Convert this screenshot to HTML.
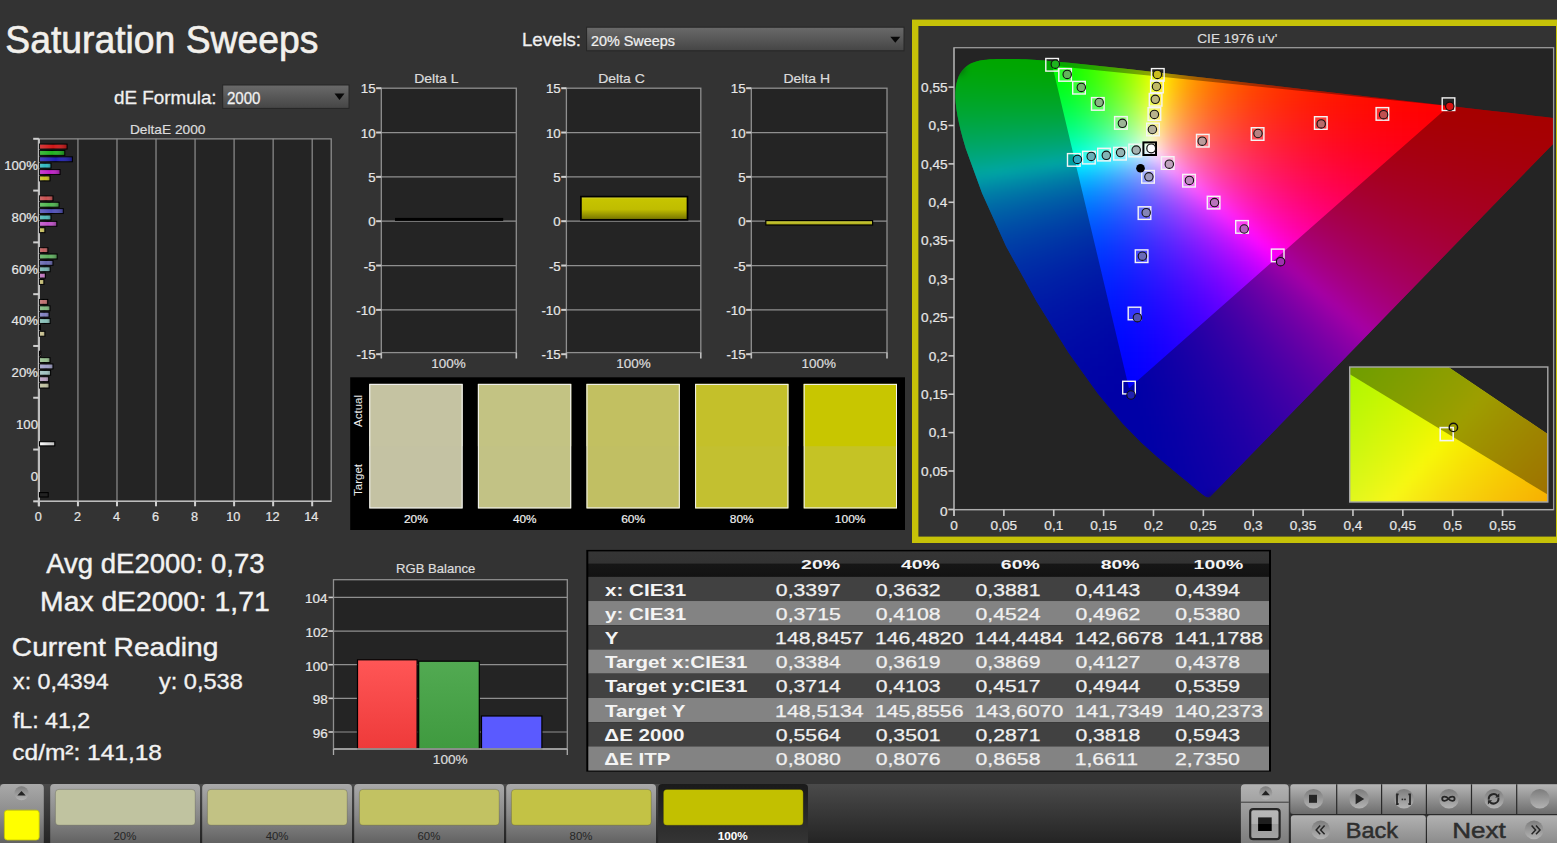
<!DOCTYPE html>
<html><head><meta charset="utf-8"><title>Saturation Sweeps</title>
<style>html,body{margin:0;padding:0;background:#333333;width:1557px;height:843px;overflow:hidden}
svg{display:block;font-family:"Liberation Sans",sans-serif}</style></head>
<body><svg width="1557" height="843" viewBox="0 0 1557 843"><defs><linearGradient id="dd" x1="0" y1="0" x2="0" y2="1"><stop offset="0" stop-color="#6a6a6a"/><stop offset="1" stop-color="#454545"/></linearGradient><linearGradient id="barsh" x1="0" y1="0" x2="1" y2="0"><stop offset="0" stop-color="#fff" stop-opacity="0.16"/><stop offset="0.5" stop-color="#fff" stop-opacity="0"/><stop offset="1" stop-color="#000" stop-opacity="0.28"/></linearGradient><linearGradient id="wbar" x1="0" y1="0" x2="1" y2="0"><stop offset="0" stop-color="#ffffff"/><stop offset="1" stop-color="#bdbdbd"/></linearGradient><linearGradient id="hbar" x1="0" y1="0" x2="0" y2="1"><stop offset="0" stop-color="#d2d244"/><stop offset="1" stop-color="#a8a610"/></linearGradient><linearGradient id="ybar" x1="0" y1="0" x2="0" y2="1"><stop offset="0" stop-color="#d6d440"/><stop offset="0.12" stop-color="#c6c400"/><stop offset="0.55" stop-color="#c0bd00"/><stop offset="1" stop-color="#727000"/></linearGradient><clipPath id="plotclip"><rect x="954" y="47.7" width="599.6" height="461.9"/></clipPath><clipPath id="locclip"><path d="M1210.2 496.76L1210.01 496.71L1209.73 496.86L1209.33 496.86L1209.1 497.16L1208.59 497.22L1207.84 497.17L1206.99 497.1L1205.57 496.44L1202.98 494.74L1199.45 492.03L1194.48 488.04L1188.14 482.61L1180.05 475.89L1169.56 467.21L1156.76 456.51L1141.18 442.52L1122.54 423.48L1097.73 393.47L1068.37 352.43L1036.59 301.46L1006 246.27L982.08 193.32L965.84 148.66L963.04 139.32L960.76 130.71L958.92 122.79L957.45 115.47L956.37 108.81L955.71 102.83L955.41 97.39L955.42 92.36L955.75 87.75L956.42 83.61L957.39 79.88L958.62 76.48L960.14 73.44L961.95 70.77L964 68.44L966.24 66.4L968.67 64.7L971.32 63.32L974.13 62.2L977.06 61.26L980.1 60.52L983.28 60.02L986.56 59.66L989.9 59.36L993.32 59.13L996.83 59L1000.39 58.93L1003.94 58.89L1007.46 58.88L1011 58.91L1014.55 58.97L1018.16 59.07L1021.8 59.19L1025.48 59.35L1029.21 59.54L1033.02 59.76L1036.91 60.01L1040.86 60.28L1044.89 60.59L1049.01 60.92L1066.41 62.49L1085.55 64.42L1106.71 66.7L1130.14 69.31L1156.05 72.24L1184.55 75.51L1215.66 79.1L1249.17 82.95L1284.61 87.02L1321.12 91.23L1356.46 95.3L1390.84 99.25L1421.91 102.81L1449.4 105.97L1472.86 108.67L1492.53 110.93L1509.04 112.82L1523.39 114.48L1535.51 115.88L1545.43 117.02L1552.91 117.88L1563.29 119.07L1573.89 120.3L1575.75 120.51Z"/></clipPath><filter id="blur8" x="900" y="0" width="700" height="560" filterUnits="userSpaceOnUse" color-interpolation-filters="sRGB"><feGaussianBlur stdDeviation="4"/></filter><clipPath id="insclip"><rect x="1349.7" y="367" width="198.1" height="135"/></clipPath><clipPath id="inloc"><path d="M1299.7 266.53L1597.8 467.98L1597.8 600L1299.7 600Z"/></clipPath><filter id="blur6" x="1300" y="330" width="300" height="220" filterUnits="userSpaceOnUse" color-interpolation-filters="sRGB"><feGaussianBlur stdDeviation="3"/></filter><linearGradient id="rb" x1="0" y1="0" x2="0" y2="1"><stop offset="0" stop-color="#ff5656"/><stop offset="1" stop-color="#ee3a3a"/></linearGradient><linearGradient id="gb" x1="0" y1="0" x2="0" y2="1"><stop offset="0" stop-color="#52aa52"/><stop offset="1" stop-color="#3f9a3f"/></linearGradient><linearGradient id="th" x1="0" y1="0" x2="0" y2="1"><stop offset="0" stop-color="#353535"/><stop offset="0.46" stop-color="#333"/><stop offset="0.5" stop-color="#161616"/><stop offset="1" stop-color="#121212"/></linearGradient><linearGradient id="tb" x1="0" y1="0" x2="0" y2="1"><stop offset="0" stop-color="#4a4a4a"/><stop offset="1" stop-color="#242424"/></linearGradient><linearGradient id="btn" x1="0" y1="0" x2="0" y2="1"><stop offset="0" stop-color="#a9a9a9"/><stop offset="0.5" stop-color="#8a8a8a"/><stop offset="1" stop-color="#5e5e5e"/></linearGradient><linearGradient id="btnact" x1="0" y1="0" x2="0" y2="1"><stop offset="0" stop-color="#1a1a1a"/><stop offset="1" stop-color="#363636"/></linearGradient><linearGradient id="ico" x1="0" y1="0" x2="0" y2="1"><stop offset="0" stop-color="#7c7c7c"/><stop offset="1" stop-color="#b4b4b4"/></linearGradient><linearGradient id="btn3" x1="0" y1="0" x2="0" y2="1"><stop offset="0" stop-color="#b6b6b6"/><stop offset="1" stop-color="#6c6c6c"/></linearGradient><linearGradient id="btn2" x1="0" y1="0" x2="0" y2="1"><stop offset="0" stop-color="#b2b2b2"/><stop offset="1" stop-color="#7a7a7a"/></linearGradient><linearGradient id="stopfill" x1="0" y1="0" x2="0" y2="1"><stop offset="0" stop-color="#b8b8b8"/><stop offset="0.5" stop-color="#b0b0b0"/><stop offset="0.5" stop-color="#9c9c9c"/><stop offset="1" stop-color="#a2a2a2"/></linearGradient><linearGradient id="stopsq" x1="0" y1="0" x2="0" y2="1"><stop offset="0" stop-color="#1e1e1e"/><stop offset="0.5" stop-color="#1e1e1e"/><stop offset="0.5" stop-color="#000"/><stop offset="1" stop-color="#000"/></linearGradient></defs><text x="5.32" y="52.6" font-size="38.5" fill="#f2f0ec" stroke="#f2f0ec" stroke-width="0.62" textLength="312.96" lengthAdjust="spacingAndGlyphs">Saturation Sweeps</text>
<text x="113.95" y="103.7" font-size="18.5" fill="#f0f0f0" stroke="#f0f0f0" stroke-width="0.3" textLength="102.68" lengthAdjust="spacingAndGlyphs">dE Formula:</text>
<rect x="222.7" y="85" width="126.3" height="23.4" fill="url(#dd)" stroke="#262626" stroke-width="1"/>
<text x="226.95" y="103.7" font-size="16" fill="#f0f0f0" stroke="#f0f0f0" stroke-width="0.26" textLength="33.58" lengthAdjust="spacingAndGlyphs">2000</text>
<path d="M334.5 93.5h10l-5 6.5z" fill="#080808"/>
<text x="521.91" y="45.7" font-size="19" fill="#f0f0f0" stroke="#f0f0f0" stroke-width="0.3" textLength="59.15" lengthAdjust="spacingAndGlyphs">Levels:</text>
<rect x="586.6" y="27.2" width="317.4" height="23.6" fill="url(#dd)" stroke="#262626" stroke-width="1"/>
<text x="590.98" y="45.7" font-size="15.2" fill="#f0f0f0" stroke="#f0f0f0" stroke-width="0.24" textLength="83.95" lengthAdjust="spacingAndGlyphs">20% Sweeps</text>
<path d="M890.3 36.7h10l-5 6z" fill="#080808"/>
<text x="129.9" y="133.8" font-size="12.8" fill="#dcdcdc" stroke="#dcdcdc" stroke-width="0.2" textLength="75.57" lengthAdjust="spacingAndGlyphs">DeltaE 2000</text>
<rect x="38.9" y="138.8" width="292.3" height="362.5" fill="#242424"/>
<line x1="77.94" y1="138.8" x2="77.94" y2="501.3" stroke="#8f8f8f" stroke-width="1.2"/>
<line x1="116.98" y1="138.8" x2="116.98" y2="501.3" stroke="#8f8f8f" stroke-width="1.2"/>
<line x1="156.02" y1="138.8" x2="156.02" y2="501.3" stroke="#8f8f8f" stroke-width="1.2"/>
<line x1="195.06" y1="138.8" x2="195.06" y2="501.3" stroke="#8f8f8f" stroke-width="1.2"/>
<line x1="234.1" y1="138.8" x2="234.1" y2="501.3" stroke="#8f8f8f" stroke-width="1.2"/>
<line x1="273.14" y1="138.8" x2="273.14" y2="501.3" stroke="#8f8f8f" stroke-width="1.2"/>
<line x1="312.18" y1="138.8" x2="312.18" y2="501.3" stroke="#8f8f8f" stroke-width="1.2"/>
<path d="M38.9 501.3H331.2V138.8H38.9" fill="none" stroke="#8f8f8f" stroke-width="1.3"/>
<line x1="38.9" y1="138.8" x2="38.9" y2="506.3" stroke="#bdbdbd" stroke-width="2.2"/>
<line x1="38.4" y1="501.3" x2="331.2" y2="501.3" stroke="#bdbdbd" stroke-width="1.6"/>
<line x1="33.2" y1="138.8" x2="38.9" y2="138.8" stroke="#d0d0d0" stroke-width="2"/>
<line x1="33.2" y1="190.59" x2="38.9" y2="190.59" stroke="#d0d0d0" stroke-width="2"/>
<line x1="33.2" y1="242.38" x2="38.9" y2="242.38" stroke="#d0d0d0" stroke-width="2"/>
<line x1="33.2" y1="294.17" x2="38.9" y2="294.17" stroke="#d0d0d0" stroke-width="2"/>
<line x1="33.2" y1="345.96" x2="38.9" y2="345.96" stroke="#d0d0d0" stroke-width="2"/>
<line x1="33.2" y1="397.75" x2="38.9" y2="397.75" stroke="#d0d0d0" stroke-width="2"/>
<line x1="33.2" y1="449.54" x2="38.9" y2="449.54" stroke="#d0d0d0" stroke-width="2"/>
<line x1="33.2" y1="501.33" x2="38.9" y2="501.33" stroke="#d0d0d0" stroke-width="2"/>
<line x1="38.9" y1="501.3" x2="38.9" y2="506.3" stroke="#d0d0d0" stroke-width="2"/>
<text x="34.84" y="521" font-size="12.7" fill="#e6e6e6" stroke="#e6e6e6" stroke-width="0.2">0</text>
<line x1="77.94" y1="501.3" x2="77.94" y2="506.3" stroke="#d0d0d0" stroke-width="2"/>
<text x="73.92" y="521" font-size="12.7" fill="#e6e6e6" stroke="#e6e6e6" stroke-width="0.2">2</text>
<line x1="116.98" y1="501.3" x2="116.98" y2="506.3" stroke="#d0d0d0" stroke-width="2"/>
<text x="112.99" y="521" font-size="12.7" fill="#e6e6e6" stroke="#e6e6e6" stroke-width="0.2">4</text>
<line x1="156.02" y1="501.3" x2="156.02" y2="506.3" stroke="#d0d0d0" stroke-width="2"/>
<text x="151.93" y="521" font-size="12.7" fill="#e6e6e6" stroke="#e6e6e6" stroke-width="0.2">6</text>
<line x1="195.06" y1="501.3" x2="195.06" y2="506.3" stroke="#d0d0d0" stroke-width="2"/>
<text x="191.04" y="521" font-size="12.7" fill="#e6e6e6" stroke="#e6e6e6" stroke-width="0.2">8</text>
<line x1="234.1" y1="501.3" x2="234.1" y2="506.3" stroke="#d0d0d0" stroke-width="2"/>
<text x="226.3" y="521" font-size="12.7" fill="#e6e6e6" stroke="#e6e6e6" stroke-width="0.2">10</text>
<line x1="273.14" y1="501.3" x2="273.14" y2="506.3" stroke="#d0d0d0" stroke-width="2"/>
<text x="265.43" y="521" font-size="12.7" fill="#e6e6e6" stroke="#e6e6e6" stroke-width="0.2">12</text>
<line x1="312.18" y1="501.3" x2="312.18" y2="506.3" stroke="#d0d0d0" stroke-width="2"/>
<text x="304.31" y="521" font-size="12.7" fill="#e6e6e6" stroke="#e6e6e6" stroke-width="0.2">14</text>
<text x="4.17" y="170.1" font-size="13.2" fill="#e6e6e6" stroke="#e6e6e6" stroke-width="0.21">100%</text>
<text x="11.56" y="221.89" font-size="13.2" fill="#e6e6e6" stroke="#e6e6e6" stroke-width="0.21">80%</text>
<text x="11.56" y="273.68" font-size="13.2" fill="#e6e6e6" stroke="#e6e6e6" stroke-width="0.21">60%</text>
<text x="11.56" y="325.47" font-size="13.2" fill="#e6e6e6" stroke="#e6e6e6" stroke-width="0.21">40%</text>
<text x="11.56" y="377.26" font-size="13.2" fill="#e6e6e6" stroke="#e6e6e6" stroke-width="0.21">20%</text>
<text x="15.98" y="429.05" font-size="13.2" fill="#e6e6e6" stroke="#e6e6e6" stroke-width="0.21">100</text>
<text x="30.64" y="480.84" font-size="13.2" fill="#e6e6e6" stroke="#e6e6e6" stroke-width="0.21">0</text>
<rect x="39.5" y="144.1" width="27.6" height="4.9" fill="#d01818" stroke="#000" stroke-width="1.05"/>
<rect x="39.5" y="144.1" width="27.6" height="4.9" fill="url(#barsh)"/>
<rect x="39.5" y="150.47" width="25.3" height="4.9" fill="#20b020" stroke="#000" stroke-width="1.05"/>
<rect x="39.5" y="150.47" width="25.3" height="4.9" fill="url(#barsh)"/>
<rect x="39.5" y="156.84" width="32.9" height="4.9" fill="#2020b0" stroke="#000" stroke-width="1.05"/>
<rect x="39.5" y="156.84" width="32.9" height="4.9" fill="url(#barsh)"/>
<rect x="39.5" y="163.21" width="11.5" height="4.9" fill="#30b8c0" stroke="#000" stroke-width="1.05"/>
<rect x="39.5" y="163.21" width="11.5" height="4.9" fill="url(#barsh)"/>
<rect x="39.5" y="169.58" width="20.6" height="4.9" fill="#c020c8" stroke="#000" stroke-width="1.05"/>
<rect x="39.5" y="169.58" width="20.6" height="4.9" fill="url(#barsh)"/>
<rect x="39.5" y="175.95" width="10.5" height="4.9" fill="#c8c020" stroke="#000" stroke-width="1.05"/>
<rect x="39.5" y="175.95" width="10.5" height="4.9" fill="url(#barsh)"/>
<rect x="39.5" y="195.89" width="13.5" height="4.9" fill="#c85050" stroke="#000" stroke-width="1.05"/>
<rect x="39.5" y="195.89" width="13.5" height="4.9" fill="url(#barsh)"/>
<rect x="39.5" y="202.26" width="19.6" height="4.9" fill="#50b850" stroke="#000" stroke-width="1.05"/>
<rect x="39.5" y="202.26" width="19.6" height="4.9" fill="url(#barsh)"/>
<rect x="39.5" y="208.63" width="23.8" height="4.9" fill="#5050b8" stroke="#000" stroke-width="1.05"/>
<rect x="39.5" y="208.63" width="23.8" height="4.9" fill="url(#barsh)"/>
<rect x="39.5" y="215" width="11.5" height="4.9" fill="#50b8b8" stroke="#000" stroke-width="1.05"/>
<rect x="39.5" y="215" width="11.5" height="4.9" fill="url(#barsh)"/>
<rect x="39.5" y="221.37" width="17.3" height="4.9" fill="#c050c8" stroke="#000" stroke-width="1.05"/>
<rect x="39.5" y="221.37" width="17.3" height="4.9" fill="url(#barsh)"/>
<rect x="39.5" y="227.74" width="5.4" height="4.9" fill="#c8c060" stroke="#000" stroke-width="1.05"/>
<rect x="39.5" y="227.74" width="5.4" height="4.9" fill="url(#barsh)"/>
<rect x="39.5" y="247.68" width="8.4" height="4.9" fill="#c06060" stroke="#000" stroke-width="1.05"/>
<rect x="39.5" y="247.68" width="8.4" height="4.9" fill="url(#barsh)"/>
<rect x="39.5" y="254.05" width="17.7" height="4.9" fill="#60b060" stroke="#000" stroke-width="1.05"/>
<rect x="39.5" y="254.05" width="17.7" height="4.9" fill="url(#barsh)"/>
<rect x="39.5" y="260.42" width="13.5" height="4.9" fill="#6868b0" stroke="#000" stroke-width="1.05"/>
<rect x="39.5" y="260.42" width="13.5" height="4.9" fill="url(#barsh)"/>
<rect x="39.5" y="266.79" width="10.7" height="4.9" fill="#78b4b0" stroke="#000" stroke-width="1.05"/>
<rect x="39.5" y="266.79" width="10.7" height="4.9" fill="url(#barsh)"/>
<rect x="39.5" y="273.16" width="5.9" height="4.9" fill="#c078c0" stroke="#000" stroke-width="1.05"/>
<rect x="39.5" y="273.16" width="5.9" height="4.9" fill="url(#barsh)"/>
<rect x="39.5" y="279.53" width="4.4" height="4.9" fill="#c8c078" stroke="#000" stroke-width="1.05"/>
<rect x="39.5" y="279.53" width="4.4" height="4.9" fill="url(#barsh)"/>
<rect x="39.5" y="299.47" width="8.2" height="4.9" fill="#c07070" stroke="#000" stroke-width="1.05"/>
<rect x="39.5" y="299.47" width="8.2" height="4.9" fill="url(#barsh)"/>
<rect x="39.5" y="305.84" width="10.5" height="4.9" fill="#80b880" stroke="#000" stroke-width="1.05"/>
<rect x="39.5" y="305.84" width="10.5" height="4.9" fill="url(#barsh)"/>
<rect x="39.5" y="312.21" width="9.6" height="4.9" fill="#8080c0" stroke="#000" stroke-width="1.05"/>
<rect x="39.5" y="312.21" width="9.6" height="4.9" fill="url(#barsh)"/>
<rect x="39.5" y="318.58" width="10.7" height="4.9" fill="#88c0b8" stroke="#000" stroke-width="1.05"/>
<rect x="39.5" y="318.58" width="10.7" height="4.9" fill="url(#barsh)"/>
<rect x="39.5" y="324.95" width="1" height="4.9" fill="#b080c0" stroke="#000" stroke-width="1.05"/>
<rect x="39.5" y="331.32" width="5.4" height="4.9" fill="#c8c090" stroke="#000" stroke-width="1.05"/>
<rect x="39.5" y="331.32" width="5.4" height="4.9" fill="url(#barsh)"/>
<rect x="39.5" y="351.26" width="1.2" height="4.9" fill="#b89090" stroke="#000" stroke-width="1.05"/>
<rect x="39.5" y="357.63" width="10.5" height="4.9" fill="#98c090" stroke="#000" stroke-width="1.05"/>
<rect x="39.5" y="357.63" width="10.5" height="4.9" fill="url(#barsh)"/>
<rect x="39.5" y="364" width="13.5" height="4.9" fill="#a0a0c8" stroke="#000" stroke-width="1.05"/>
<rect x="39.5" y="364" width="13.5" height="4.9" fill="url(#barsh)"/>
<rect x="39.5" y="370.37" width="11.1" height="4.9" fill="#a0c0c0" stroke="#000" stroke-width="1.05"/>
<rect x="39.5" y="370.37" width="11.1" height="4.9" fill="url(#barsh)"/>
<rect x="39.5" y="376.74" width="9.2" height="4.9" fill="#b8a0c0" stroke="#000" stroke-width="1.05"/>
<rect x="39.5" y="376.74" width="9.2" height="4.9" fill="url(#barsh)"/>
<rect x="39.5" y="383.11" width="9.6" height="4.9" fill="#c0c0a0" stroke="#000" stroke-width="1.05"/>
<rect x="39.5" y="383.11" width="9.6" height="4.9" fill="url(#barsh)"/>
<rect x="39.5" y="441.7" width="15.3" height="4.2" fill="url(#wbar)" stroke="#000" stroke-width="1.1"/>
<rect x="39.5" y="492.6" width="8.7" height="4.4" fill="#222" stroke="#000" stroke-width="1.1"/>
<text x="414.25" y="83.1" font-size="13.3" fill="#dcdcdc" stroke="#dcdcdc" stroke-width="0.21" textLength="44.25" lengthAdjust="spacingAndGlyphs">Delta L</text>
<rect x="381.3" y="88.2" width="135" height="264.4" fill="#242424"/>
<line x1="381.3" y1="309.87" x2="516.3" y2="309.87" stroke="#8f8f8f" stroke-width="1.2"/>
<line x1="381.3" y1="265.53" x2="516.3" y2="265.53" stroke="#8f8f8f" stroke-width="1.2"/>
<line x1="381.3" y1="221.2" x2="516.3" y2="221.2" stroke="#8f8f8f" stroke-width="1.2"/>
<line x1="381.3" y1="176.87" x2="516.3" y2="176.87" stroke="#8f8f8f" stroke-width="1.2"/>
<line x1="381.3" y1="132.53" x2="516.3" y2="132.53" stroke="#8f8f8f" stroke-width="1.2"/>
<rect x="381.3" y="88.2" width="135" height="264.4" fill="none" stroke="#8f8f8f" stroke-width="1.3"/>
<line x1="376.1" y1="354.2" x2="381.3" y2="354.2" stroke="#d0d0d0" stroke-width="2"/>
<text x="356.41" y="359.2" font-size="13.3" fill="#e6e6e6" stroke="#e6e6e6" stroke-width="0.21">-15</text>
<line x1="376.1" y1="309.87" x2="381.3" y2="309.87" stroke="#d0d0d0" stroke-width="2"/>
<text x="356.35" y="314.87" font-size="13.3" fill="#e6e6e6" stroke="#e6e6e6" stroke-width="0.21">-10</text>
<line x1="376.1" y1="265.53" x2="381.3" y2="265.53" stroke="#d0d0d0" stroke-width="2"/>
<text x="363.8" y="270.53" font-size="13.3" fill="#e6e6e6" stroke="#e6e6e6" stroke-width="0.21">-5</text>
<line x1="376.1" y1="221.2" x2="381.3" y2="221.2" stroke="#d0d0d0" stroke-width="2"/>
<text x="368.18" y="226.2" font-size="13.3" fill="#e6e6e6" stroke="#e6e6e6" stroke-width="0.21">0</text>
<line x1="376.1" y1="176.87" x2="381.3" y2="176.87" stroke="#d0d0d0" stroke-width="2"/>
<text x="368.25" y="181.87" font-size="13.3" fill="#e6e6e6" stroke="#e6e6e6" stroke-width="0.21">5</text>
<line x1="376.1" y1="132.53" x2="381.3" y2="132.53" stroke="#d0d0d0" stroke-width="2"/>
<text x="360.8" y="137.53" font-size="13.3" fill="#e6e6e6" stroke="#e6e6e6" stroke-width="0.21">10</text>
<line x1="376.1" y1="88.2" x2="381.3" y2="88.2" stroke="#d0d0d0" stroke-width="2"/>
<text x="360.87" y="93.2" font-size="13.3" fill="#e6e6e6" stroke="#e6e6e6" stroke-width="0.21">15</text>
<line x1="381.3" y1="352.6" x2="381.3" y2="358.5" stroke="#bdbdbd" stroke-width="1.6"/>
<line x1="516.3" y1="352.6" x2="516.3" y2="358.5" stroke="#bdbdbd" stroke-width="1.6"/>
<text x="431.39" y="367.5" font-size="13" fill="#dcdcdc" stroke="#dcdcdc" stroke-width="0.21" textLength="34.45" lengthAdjust="spacingAndGlyphs">100%</text>
<rect x="395" y="217.9" width="108.2" height="3" fill="#000"/>
<text x="598.23" y="83.1" font-size="13.3" fill="#dcdcdc" stroke="#dcdcdc" stroke-width="0.21" textLength="46.57" lengthAdjust="spacingAndGlyphs">Delta C</text>
<rect x="566.4" y="88.2" width="134.4" height="264.4" fill="#242424"/>
<line x1="566.4" y1="309.87" x2="700.8" y2="309.87" stroke="#8f8f8f" stroke-width="1.2"/>
<line x1="566.4" y1="265.53" x2="700.8" y2="265.53" stroke="#8f8f8f" stroke-width="1.2"/>
<line x1="566.4" y1="221.2" x2="700.8" y2="221.2" stroke="#8f8f8f" stroke-width="1.2"/>
<line x1="566.4" y1="176.87" x2="700.8" y2="176.87" stroke="#8f8f8f" stroke-width="1.2"/>
<line x1="566.4" y1="132.53" x2="700.8" y2="132.53" stroke="#8f8f8f" stroke-width="1.2"/>
<rect x="566.4" y="88.2" width="134.4" height="264.4" fill="none" stroke="#8f8f8f" stroke-width="1.3"/>
<line x1="561.2" y1="354.2" x2="566.4" y2="354.2" stroke="#d0d0d0" stroke-width="2"/>
<text x="541.51" y="359.2" font-size="13.3" fill="#e6e6e6" stroke="#e6e6e6" stroke-width="0.21">-15</text>
<line x1="561.2" y1="309.87" x2="566.4" y2="309.87" stroke="#d0d0d0" stroke-width="2"/>
<text x="541.45" y="314.87" font-size="13.3" fill="#e6e6e6" stroke="#e6e6e6" stroke-width="0.21">-10</text>
<line x1="561.2" y1="265.53" x2="566.4" y2="265.53" stroke="#d0d0d0" stroke-width="2"/>
<text x="548.89" y="270.53" font-size="13.3" fill="#e6e6e6" stroke="#e6e6e6" stroke-width="0.21">-5</text>
<line x1="561.2" y1="221.2" x2="566.4" y2="221.2" stroke="#d0d0d0" stroke-width="2"/>
<text x="553.28" y="226.2" font-size="13.3" fill="#e6e6e6" stroke="#e6e6e6" stroke-width="0.21">0</text>
<line x1="561.2" y1="176.87" x2="566.4" y2="176.87" stroke="#d0d0d0" stroke-width="2"/>
<text x="553.35" y="181.87" font-size="13.3" fill="#e6e6e6" stroke="#e6e6e6" stroke-width="0.21">5</text>
<line x1="561.2" y1="132.53" x2="566.4" y2="132.53" stroke="#d0d0d0" stroke-width="2"/>
<text x="545.9" y="137.53" font-size="13.3" fill="#e6e6e6" stroke="#e6e6e6" stroke-width="0.21">10</text>
<line x1="561.2" y1="88.2" x2="566.4" y2="88.2" stroke="#d0d0d0" stroke-width="2"/>
<text x="545.97" y="93.2" font-size="13.3" fill="#e6e6e6" stroke="#e6e6e6" stroke-width="0.21">15</text>
<line x1="566.4" y1="352.6" x2="566.4" y2="358.5" stroke="#bdbdbd" stroke-width="1.6"/>
<line x1="700.8" y1="352.6" x2="700.8" y2="358.5" stroke="#bdbdbd" stroke-width="1.6"/>
<text x="616.29" y="367.5" font-size="13" fill="#dcdcdc" stroke="#dcdcdc" stroke-width="0.21" textLength="34.45" lengthAdjust="spacingAndGlyphs">100%</text>
<rect x="580.9" y="196.6" width="106.6" height="23.2" fill="url(#ybar)" stroke="#000" stroke-width="1.7"/>
<text x="783.45" y="83.1" font-size="13.3" fill="#dcdcdc" stroke="#dcdcdc" stroke-width="0.21" textLength="46.57" lengthAdjust="spacingAndGlyphs">Delta H</text>
<rect x="751.3" y="88.2" width="135.7" height="264.4" fill="#242424"/>
<line x1="751.3" y1="309.87" x2="887" y2="309.87" stroke="#8f8f8f" stroke-width="1.2"/>
<line x1="751.3" y1="265.53" x2="887" y2="265.53" stroke="#8f8f8f" stroke-width="1.2"/>
<line x1="751.3" y1="221.2" x2="887" y2="221.2" stroke="#8f8f8f" stroke-width="1.2"/>
<line x1="751.3" y1="176.87" x2="887" y2="176.87" stroke="#8f8f8f" stroke-width="1.2"/>
<line x1="751.3" y1="132.53" x2="887" y2="132.53" stroke="#8f8f8f" stroke-width="1.2"/>
<rect x="751.3" y="88.2" width="135.7" height="264.4" fill="none" stroke="#8f8f8f" stroke-width="1.3"/>
<line x1="746.1" y1="354.2" x2="751.3" y2="354.2" stroke="#d0d0d0" stroke-width="2"/>
<text x="726.41" y="359.2" font-size="13.3" fill="#e6e6e6" stroke="#e6e6e6" stroke-width="0.21">-15</text>
<line x1="746.1" y1="309.87" x2="751.3" y2="309.87" stroke="#d0d0d0" stroke-width="2"/>
<text x="726.35" y="314.87" font-size="13.3" fill="#e6e6e6" stroke="#e6e6e6" stroke-width="0.21">-10</text>
<line x1="746.1" y1="265.53" x2="751.3" y2="265.53" stroke="#d0d0d0" stroke-width="2"/>
<text x="733.79" y="270.53" font-size="13.3" fill="#e6e6e6" stroke="#e6e6e6" stroke-width="0.21">-5</text>
<line x1="746.1" y1="221.2" x2="751.3" y2="221.2" stroke="#d0d0d0" stroke-width="2"/>
<text x="738.18" y="226.2" font-size="13.3" fill="#e6e6e6" stroke="#e6e6e6" stroke-width="0.21">0</text>
<line x1="746.1" y1="176.87" x2="751.3" y2="176.87" stroke="#d0d0d0" stroke-width="2"/>
<text x="738.25" y="181.87" font-size="13.3" fill="#e6e6e6" stroke="#e6e6e6" stroke-width="0.21">5</text>
<line x1="746.1" y1="132.53" x2="751.3" y2="132.53" stroke="#d0d0d0" stroke-width="2"/>
<text x="730.8" y="137.53" font-size="13.3" fill="#e6e6e6" stroke="#e6e6e6" stroke-width="0.21">10</text>
<line x1="746.1" y1="88.2" x2="751.3" y2="88.2" stroke="#d0d0d0" stroke-width="2"/>
<text x="730.87" y="93.2" font-size="13.3" fill="#e6e6e6" stroke="#e6e6e6" stroke-width="0.21">15</text>
<line x1="751.3" y1="352.6" x2="751.3" y2="358.5" stroke="#bdbdbd" stroke-width="1.6"/>
<line x1="887" y1="352.6" x2="887" y2="358.5" stroke="#bdbdbd" stroke-width="1.6"/>
<text x="801.59" y="367.5" font-size="13" fill="#dcdcdc" stroke="#dcdcdc" stroke-width="0.21" textLength="34.45" lengthAdjust="spacingAndGlyphs">100%</text>
<rect x="765.8" y="220.6" width="106.8" height="4.4" fill="url(#hbar)" stroke="#000" stroke-width="1.2"/>
<rect x="350.2" y="377.3" width="554.8" height="152.7" fill="#000"/>
<rect x="369.3" y="383.9" width="93.3" height="124.5" fill="#c4c2a3"/>
<rect x="369.3" y="383.9" width="93.3" height="62.3" fill="#c5c3a2"/>
<rect x="369.8" y="384.4" width="92.3" height="123.5" fill="none" stroke="#f4f4f4" stroke-width="1"/>
<text x="403.95" y="523.3" font-size="11.2" fill="#f0f0f0" stroke="#f0f0f0" stroke-width="0.18" textLength="23.93" lengthAdjust="spacingAndGlyphs">20%</text>
<rect x="477.9" y="383.9" width="93.3" height="124.5" fill="#c2c285"/>
<rect x="477.9" y="383.9" width="93.3" height="62.3" fill="#c3c383"/>
<rect x="478.4" y="384.4" width="92.3" height="123.5" fill="none" stroke="#f4f4f4" stroke-width="1"/>
<text x="512.91" y="523.3" font-size="11.2" fill="#f0f0f0" stroke="#f0f0f0" stroke-width="0.18" textLength="23.57" lengthAdjust="spacingAndGlyphs">40%</text>
<rect x="586.5" y="383.9" width="93.3" height="124.5" fill="#c1bf63"/>
<rect x="586.5" y="383.9" width="93.3" height="62.3" fill="#c2c061"/>
<rect x="587" y="384.4" width="92.3" height="123.5" fill="none" stroke="#f4f4f4" stroke-width="1"/>
<text x="621.15" y="523.3" font-size="11.2" fill="#f0f0f0" stroke="#f0f0f0" stroke-width="0.18" textLength="23.93" lengthAdjust="spacingAndGlyphs">60%</text>
<rect x="695.1" y="383.9" width="93.3" height="124.5" fill="#c3c030"/>
<rect x="695.1" y="383.9" width="93.3" height="62.3" fill="#c4c02a"/>
<rect x="695.6" y="384.4" width="92.3" height="123.5" fill="none" stroke="#f4f4f4" stroke-width="1"/>
<text x="729.87" y="523.3" font-size="11.2" fill="#f0f0f0" stroke="#f0f0f0" stroke-width="0.18" textLength="23.81" lengthAdjust="spacingAndGlyphs">80%</text>
<rect x="803.7" y="383.9" width="93.3" height="124.5" fill="#c5c325"/>
<rect x="803.7" y="383.9" width="93.3" height="62.3" fill="#c8c600"/>
<rect x="804.2" y="384.4" width="92.3" height="123.5" fill="none" stroke="#f4f4f4" stroke-width="1"/>
<text x="834.85" y="523.3" font-size="11.2" fill="#f0f0f0" stroke="#f0f0f0" stroke-width="0.18" textLength="30.59" lengthAdjust="spacingAndGlyphs">100%</text>
<text x="0" y="0" font-size="11.5" fill="#f0f0f0" transform="translate(362.4 411) rotate(-90)" text-anchor="middle">Actual</text>
<text x="0" y="0" font-size="11.5" fill="#f0f0f0" transform="translate(362.4 480) rotate(-90)" text-anchor="middle">Target</text>
<rect x="915.2" y="22.8" width="644" height="517" fill="none" stroke="#c6c208" stroke-width="6.4"/>
<text x="1197.32" y="42.8" font-size="12.8" fill="#dcdcdc" stroke="#dcdcdc" stroke-width="0.2" textLength="79.96" lengthAdjust="spacingAndGlyphs">CIE 1976 u'v'</text>
<rect x="954" y="47.7" width="599.6" height="461.9" fill="#242424"/>
<g clip-path="url(#plotclip)"><g clip-path="url(#locclip)"><g filter="url(#blur8)"><path fill="#00ff00" d="M962 32h8v8h-8zM978 32h72v8h-72zM962 40h88v8h-88zM946 48h8v8h-8zM962 48h88v8h-88zM986 56h64v8h-64z"/><path fill="#07ff00" d="M1050 32h8v8h-8z"/><path fill="#11ff00" d="M1058 32h8v8h-8z"/><path fill="#1cff00" d="M1066 32h8v8h-8z"/><path fill="#28ff00" d="M1074 32h8v8h-8z"/><path fill="#05ff00" d="M1050 40h8v8h-8z"/><path fill="#0fff00" d="M1058 40h8v8h-8z"/><path fill="#1aff00" d="M1066 40h8v8h-8z"/><path fill="#26ff00" d="M1074 40h8v8h-8z"/><path fill="#34ff00" d="M1082 40h8v8h-8z"/><path fill="#44ff00" d="M1090 40h8v8h-8z"/><path fill="#54ff00" d="M1098 40h8v8h-8z"/><path fill="#66ff00" d="M1106 40h8v8h-8z"/><path fill="#7aff00" d="M1114 40h8v8h-8z"/><path fill="#8fff00" d="M1122 40h8v8h-8zM1122 48h8v8h-8zM1122 56h8v8h-8z"/><path fill="#a5ff00" d="M1130 40h8v8h-8z"/><path fill="#beff00" d="M1138 40h8v8h-8z"/><path fill="#d8ff00" d="M1146 40h8v8h-8z"/><path fill="#04ff00" d="M1050 48h8v8h-8z"/><path fill="#0dff00" d="M1058 48h8v8h-8z"/><path fill="#18ff00" d="M1066 48h8v8h-8z"/><path fill="#24ff00" d="M1074 48h8v8h-8z"/><path fill="#32ff00" d="M1082 48h8v8h-8z"/><path fill="#42ff00" d="M1090 48h8v8h-8z"/><path fill="#53ff00" d="M1098 48h8v8h-8z"/><path fill="#65ff00" d="M1106 48h8v8h-8z"/><path fill="#79ff00" d="M1114 48h8v8h-8zM1114 56h8v8h-8z"/><path fill="#a6ff00" d="M1130 48h8v8h-8zM1130 56h8v8h-8z"/><path fill="#bfff00" d="M1138 48h8v8h-8z"/><path fill="#d9ff00" d="M1146 48h8v8h-8z"/><path fill="#f6ff00" d="M1154 48h8v8h-8z"/><path fill="#ffeb00" d="M1162 48h8v8h-8z"/><path fill="#ffd200" d="M1170 48h8v8h-8z"/><path fill="#ffbd00" d="M1178 48h8v8h-8z"/><path fill="#ffaa00" d="M1186 48h8v8h-8z"/><path fill="#ff9a00" d="M1194 48h8v8h-8z"/><path fill="#ff8c00" d="M1202 48h8v8h-8z"/><path fill="#ff7f00" d="M1210 48h8v8h-8z"/><path fill="#00ff02" d="M954 56h16v8h-16zM1042 64h8v8h-8z"/><path fill="#00ff01" d="M970 56h16v8h-16z"/><path fill="#02ff00" d="M1050 56h8v8h-8z"/><path fill="#0bff00" d="M1058 56h8v8h-8z"/><path fill="#16ff00" d="M1066 56h8v8h-8z"/><path fill="#22ff00" d="M1074 56h8v8h-8z"/><path fill="#30ff00" d="M1082 56h8v8h-8z"/><path fill="#40ff00" d="M1090 56h8v8h-8z"/><path fill="#51ff00" d="M1098 56h8v8h-8z"/><path fill="#64ff00" d="M1106 56h8v8h-8z"/><path fill="#c0ff00" d="M1138 56h8v8h-8z"/><path fill="#dbff00" d="M1146 56h8v8h-8z"/><path fill="#f8ff00" d="M1154 56h8v8h-8z"/><path fill="#ffe800" d="M1162 56h8v8h-8z"/><path fill="#ffcf00" d="M1170 56h8v8h-8z"/><path fill="#ffba00" d="M1178 56h8v8h-8z"/><path fill="#ffa700" d="M1186 56h8v8h-8z"/><path fill="#ff9700" d="M1194 56h8v8h-8z"/><path fill="#ff8800" d="M1202 56h8v8h-8z"/><path fill="#ff7c00" d="M1210 56h8v8h-8z"/><path fill="#ff7100" d="M1218 56h8v8h-8z"/><path fill="#ff6700" d="M1226 56h8v8h-8zM1218 80h8v8h-8z"/><path fill="#ff5e00" d="M1234 56h8v8h-8zM1226 80h8v8h-8z"/><path fill="#ff5500" d="M1242 56h8v8h-8zM1234 80h8v8h-8z"/><path fill="#ff4e00" d="M1250 56h8v8h-8z"/><path fill="#ff4700" d="M1258 56h8v8h-8z"/><path fill="#ff4100" d="M1266 56h8v8h-8z"/><path fill="#ff3c00" d="M1274 56h8v8h-8zM1266 72h8v8h-8z"/><path fill="#ff3700" d="M1282 56h8v8h-8zM1274 72h8v8h-8z"/><path fill="#00ff0c" d="M930 64h8v8h-8zM1034 72h8v8h-8z"/><path fill="#00ff0a" d="M946 64h8v8h-8zM1050 72h8v8h-8z"/><path fill="#00ff09" d="M962 64h8v8h-8z"/><path fill="#00ff08" d="M970 64h16v8h-16z"/><path fill="#00ff07" d="M986 64h8v8h-8z"/><path fill="#00ff06" d="M994 64h16v8h-16z"/><path fill="#00ff05" d="M1010 64h8v8h-8z"/><path fill="#00ff04" d="M1018 64h8v8h-8z"/><path fill="#00ff03" d="M1026 64h16v8h-16z"/><path fill="#01ff01" d="M1050 64h8v8h-8z"/><path fill="#09ff01" d="M1058 64h8v8h-8z"/><path fill="#13ff00" d="M1066 64h8v8h-8z"/><path fill="#20ff00" d="M1074 64h8v8h-8z"/><path fill="#2eff00" d="M1082 64h8v8h-8z"/><path fill="#3eff00" d="M1090 64h8v8h-8z"/><path fill="#50ff00" d="M1098 64h8v8h-8z"/><path fill="#63ff00" d="M1106 64h8v8h-8z"/><path fill="#78ff00" d="M1114 64h8v8h-8z"/><path fill="#8eff00" d="M1122 64h8v8h-8z"/><path fill="#a7ff00" d="M1130 64h8v8h-8z"/><path fill="#c1ff00" d="M1138 64h8v8h-8z"/><path fill="#ddff00" d="M1146 64h8v8h-8z"/><path fill="#fbff00" d="M1154 64h8v8h-8z"/><path fill="#ffe500" d="M1162 64h8v8h-8z"/><path fill="#ffcc00" d="M1170 64h8v8h-8z"/><path fill="#ffb600" d="M1178 64h8v8h-8z"/><path fill="#ffa400" d="M1186 64h8v8h-8z"/><path fill="#ff9400" d="M1194 64h8v8h-8z"/><path fill="#ff8500" d="M1202 64h8v8h-8z"/><path fill="#ff7900" d="M1210 64h8v8h-8z"/><path fill="#ff6e00" d="M1218 64h8v8h-8z"/><path fill="#ff6400" d="M1226 64h8v8h-8z"/><path fill="#ff5b00" d="M1234 64h8v8h-8z"/><path fill="#ff5300" d="M1242 64h8v8h-8z"/><path fill="#ff4b00" d="M1250 64h8v8h-8z"/><path fill="#ff4500" d="M1258 64h8v8h-8z"/><path fill="#ff3f00" d="M1266 64h8v8h-8zM1258 80h8v8h-8z"/><path fill="#ff3900" d="M1274 64h8v8h-8z"/><path fill="#ff3400" d="M1282 64h8v8h-8zM1274 80h8v8h-8z"/><path fill="#ff3000" d="M1290 64h8v8h-8zM1282 80h8v8h-8z"/><path fill="#ff2c00" d="M1298 64h8v8h-8z"/><path fill="#ff2800" d="M1306 64h8v8h-8z"/><path fill="#ff2400" d="M1314 64h8v8h-8z"/><path fill="#ff2100" d="M1322 64h8v8h-8zM1306 88h8v8h-8z"/><path fill="#ff1e00" d="M1330 64h8v8h-8zM1314 88h8v8h-8z"/><path fill="#ff1b00" d="M1338 64h8v8h-8zM1322 88h8v8h-8z"/><path fill="#ff1800" d="M1346 64h8v8h-8zM1330 88h8v8h-8z"/><path fill="#ff1600" d="M1354 64h8v8h-8z"/><path fill="#00ff15" d="M930 72h8v8h-8z"/><path fill="#00ff14" d="M938 72h16v8h-16z"/><path fill="#00ff13" d="M954 72h8v8h-8z"/><path fill="#00ff12" d="M962 72h16v8h-16z"/><path fill="#00ff11" d="M978 72h8v8h-8z"/><path fill="#00ff10" d="M986 72h16v8h-16z"/><path fill="#00ff0f" d="M1002 72h8v8h-8z"/><path fill="#00ff0e" d="M1010 72h16v8h-16z"/><path fill="#00ff0d" d="M1026 72h8v8h-8z"/><path fill="#00ff0b" d="M1042 72h8v8h-8z"/><path fill="#07ff0a" d="M1058 72h8v8h-8z"/><path fill="#11ff09" d="M1066 72h8v8h-8z"/><path fill="#1eff08" d="M1074 72h8v8h-8z"/><path fill="#2cff07" d="M1082 72h8v8h-8z"/><path fill="#3dff06" d="M1090 72h8v8h-8z"/><path fill="#4eff05" d="M1098 72h8v8h-8z"/><path fill="#62ff04" d="M1106 72h8v8h-8z"/><path fill="#77ff03" d="M1114 72h8v8h-8z"/><path fill="#8eff03" d="M1122 72h8v8h-8z"/><path fill="#a7ff02" d="M1130 72h8v8h-8z"/><path fill="#c2ff01" d="M1138 72h8v8h-8z"/><path fill="#dfff00" d="M1146 72h8v8h-8z"/><path fill="#feff00" d="M1154 72h8v8h-8z"/><path fill="#ffe200" d="M1162 72h8v8h-8z"/><path fill="#ffc900" d="M1170 72h8v8h-8z"/><path fill="#ffb300" d="M1178 72h8v8h-8z"/><path fill="#ffa000" d="M1186 72h8v8h-8z"/><path fill="#ff9000" d="M1194 72h8v8h-8z"/><path fill="#ff8200" d="M1202 72h8v8h-8z"/><path fill="#ff7600" d="M1210 72h8v8h-8z"/><path fill="#ff6a00" d="M1218 72h8v8h-8z"/><path fill="#ff6100" d="M1226 72h8v8h-8z"/><path fill="#ff5800" d="M1234 72h8v8h-8z"/><path fill="#ff5000" d="M1242 72h8v8h-8z"/><path fill="#ff4900" d="M1250 72h8v8h-8z"/><path fill="#ff4200" d="M1258 72h8v8h-8z"/><path fill="#ff3200" d="M1282 72h8v8h-8z"/><path fill="#ff2d00" d="M1290 72h8v8h-8z"/><path fill="#ff2900" d="M1298 72h8v8h-8z"/><path fill="#ff2600" d="M1306 72h8v8h-8z"/><path fill="#ff2200" d="M1314 72h8v8h-8z"/><path fill="#ff1f00" d="M1322 72h8v8h-8z"/><path fill="#ff1c00" d="M1330 72h8v8h-8z"/><path fill="#ff1900" d="M1338 72h8v8h-8z"/><path fill="#ff1700" d="M1346 72h8v8h-8zM1338 80h8v8h-8z"/><path fill="#ff1400" d="M1354 72h8v8h-8z"/><path fill="#ff1200" d="M1362 72h8v8h-8zM1354 80h8v8h-8z"/><path fill="#ff1000" d="M1370 72h8v8h-8zM1362 80h8v8h-8z"/><path fill="#ff0e00" d="M1378 72h8v8h-8zM1370 80h8v8h-8z"/><path fill="#ff0c00" d="M1386 72h8v8h-8z"/><path fill="#ff0b00" d="M1394 72h8v8h-8zM1386 80h8v8h-8zM1378 88h8v8h-8zM1370 96h8v8h-8z"/><path fill="#ff0900" d="M1402 72h8v8h-8zM1394 80h8v8h-8zM1386 88h8v8h-8z"/><path fill="#ff0800" d="M1410 72h8v8h-8zM1402 80h8v8h-8zM1394 88h8v8h-8zM1386 96h8v8h-8z"/><path fill="#ff0600" d="M1418 72h8v8h-8z"/><path fill="#ff0500" d="M1426 72h8v8h-8zM1418 80h8v8h-8zM1410 88h8v8h-8zM1402 96h8v8h-8z"/><path fill="#00ff1e" d="M946 80h16v8h-16z"/><path fill="#00ff1d" d="M962 80h16v8h-16z"/><path fill="#00ff1c" d="M978 80h16v8h-16z"/><path fill="#00ff1b" d="M994 80h8v8h-8z"/><path fill="#00ff1a" d="M1002 80h16v8h-16z"/><path fill="#00ff19" d="M1018 80h16v8h-16z"/><path fill="#00ff18" d="M1034 80h8v8h-8z"/><path fill="#00ff17" d="M1042 80h16v8h-16z"/><path fill="#05ff16" d="M1058 80h8v8h-8z"/><path fill="#0fff15" d="M1066 80h8v8h-8z"/><path fill="#1cff14" d="M1074 80h8v8h-8z"/><path fill="#2aff13" d="M1082 80h8v8h-8z"/><path fill="#3bff13" d="M1090 80h8v8h-8z"/><path fill="#4dff12" d="M1098 80h8v8h-8z"/><path fill="#61ff11" d="M1106 80h8v8h-8z"/><path fill="#76ff10" d="M1114 80h8v8h-8z"/><path fill="#8eff0f" d="M1122 80h8v8h-8z"/><path fill="#a7ff0e" d="M1130 80h8v8h-8z"/><path fill="#c3ff0d" d="M1138 80h8v8h-8z"/><path fill="#e1ff0c" d="M1146 80h8v8h-8z"/><path fill="#fffd0b" d="M1154 80h8v8h-8z"/><path fill="#ffdf08" d="M1162 80h8v8h-8z"/><path fill="#ffc507" d="M1170 80h8v8h-8z"/><path fill="#ffb005" d="M1178 80h8v8h-8z"/><path fill="#ff9d04" d="M1186 80h8v8h-8z"/><path fill="#ff8d03" d="M1194 80h8v8h-8z"/><path fill="#ff7f02" d="M1202 80h8v8h-8z"/><path fill="#ff7201" d="M1210 80h8v8h-8z"/><path fill="#ff4d00" d="M1242 80h8v8h-8z"/><path fill="#ff4600" d="M1250 80h8v8h-8z"/><path fill="#ff3a00" d="M1266 80h8v8h-8z"/><path fill="#ff2b00" d="M1290 80h8v8h-8z"/><path fill="#ff2700" d="M1298 80h8v8h-8z"/><path fill="#ff2300" d="M1306 80h8v8h-8z"/><path fill="#ff2000" d="M1314 80h8v8h-8z"/><path fill="#ff1d00" d="M1322 80h8v8h-8z"/><path fill="#ff1a00" d="M1330 80h8v8h-8z"/><path fill="#ff1500" d="M1346 80h8v8h-8zM1338 88h8v8h-8z"/><path fill="#ff0d00" d="M1378 80h8v8h-8zM1370 88h8v8h-8z"/><path fill="#ff0700" d="M1410 80h8v8h-8zM1402 88h8v8h-8zM1394 96h8v8h-8z"/><path fill="#ff0400" d="M1426 80h8v8h-8zM1418 88h8v8h-8zM1410 96h8v8h-8z"/><path fill="#ff0300" d="M1434 80h8v8h-8zM1426 88h8v8h-8zM1418 96h8v8h-8z"/><path fill="#ff0200" d="M1442 80h8v8h-8zM1434 88h8v8h-8zM1426 96h8v8h-8z"/><path fill="#ff0100" d="M1450 80h16v8h-16zM1442 88h16v8h-16zM1434 96h16v8h-16z"/><path fill="#ff0000" d="M1466 80h40v8h-40zM1458 88h112v8h-112zM1450 96h128v8h-128zM1442 104h136v8h-136zM1522 112h56v8h-56z"/><path fill="#00ff2b" d="M930 88h16v8h-16z"/><path fill="#00ff2a" d="M946 88h24v8h-24z"/><path fill="#00ff29" d="M970 88h16v8h-16z"/><path fill="#00ff28" d="M986 88h24v8h-24z"/><path fill="#00ff27" d="M1010 88h16v8h-16z"/><path fill="#00ff26" d="M1026 88h16v8h-16z"/><path fill="#00ff25" d="M1042 88h16v8h-16z"/><path fill="#03ff24" d="M1058 88h8v8h-8z"/><path fill="#0dff24" d="M1066 88h8v8h-8z"/><path fill="#19ff23" d="M1074 88h8v8h-8z"/><path fill="#28ff22" d="M1082 88h8v8h-8z"/><path fill="#39ff22" d="M1090 88h8v8h-8z"/><path fill="#4bff21" d="M1098 88h8v8h-8z"/><path fill="#5fff20" d="M1106 88h8v8h-8z"/><path fill="#75ff20" d="M1114 88h8v8h-8z"/><path fill="#8eff1f" d="M1122 88h8v8h-8z"/><path fill="#a8ff1e" d="M1130 88h8v8h-8z"/><path fill="#c4ff1d" d="M1138 88h8v8h-8z"/><path fill="#e3ff1d" d="M1146 88h8v8h-8z"/><path fill="#fffa1b" d="M1154 88h8v8h-8z"/><path fill="#ffdb17" d="M1162 88h8v8h-8z"/><path fill="#ffc214" d="M1170 88h8v8h-8z"/><path fill="#ffac11" d="M1178 88h8v8h-8z"/><path fill="#ff990e" d="M1186 88h8v8h-8z"/><path fill="#ff890c" d="M1194 88h8v8h-8z"/><path fill="#ff7b0a" d="M1202 88h8v8h-8z"/><path fill="#ff6f09" d="M1210 88h8v8h-8z"/><path fill="#ff6407" d="M1218 88h8v8h-8z"/><path fill="#ff5a06" d="M1226 88h8v8h-8z"/><path fill="#ff5205" d="M1234 88h8v8h-8z"/><path fill="#ff4a04" d="M1242 88h8v8h-8z"/><path fill="#ff4303" d="M1250 88h8v8h-8z"/><path fill="#ff3d03" d="M1258 88h8v8h-8z"/><path fill="#ff3702" d="M1266 88h8v8h-8z"/><path fill="#ff3201" d="M1274 88h8v8h-8z"/><path fill="#ff2d01" d="M1282 88h8v8h-8z"/><path fill="#ff2901" d="M1290 88h8v8h-8z"/><path fill="#ff2500" d="M1298 88h8v8h-8z"/><path fill="#ff1300" d="M1346 88h8v8h-8z"/><path fill="#ff1100" d="M1354 88h8v8h-8z"/><path fill="#ff0f00" d="M1362 88h8v8h-8z"/><path fill="#00ff38" d="M930 96h16v8h-16z"/><path fill="#00ff37" d="M946 96h40v8h-40z"/><path fill="#00ff36" d="M986 96h40v8h-40z"/><path fill="#00ff35" d="M1026 96h32v8h-32z"/><path fill="#01ff34" d="M1058 96h8v8h-8z"/><path fill="#0aff34" d="M1066 96h8v8h-8z"/><path fill="#17ff34" d="M1074 96h8v8h-8z"/><path fill="#26ff34" d="M1082 96h8v8h-8z"/><path fill="#36ff33" d="M1090 96h8v8h-8z"/><path fill="#49ff33" d="M1098 96h8v8h-8z"/><path fill="#5eff33" d="M1106 96h8v8h-8z"/><path fill="#75ff32" d="M1114 96h8v8h-8z"/><path fill="#8dff32" d="M1122 96h8v8h-8z"/><path fill="#a8ff32" d="M1130 96h8v8h-8z"/><path fill="#c6ff31" d="M1138 96h8v8h-8z"/><path fill="#e5ff31" d="M1146 96h8v8h-8z"/><path fill="#fff62f" d="M1154 96h8v8h-8z"/><path fill="#ffd828" d="M1162 96h8v8h-8z"/><path fill="#ffbe23" d="M1170 96h8v8h-8z"/><path fill="#ffa81f" d="M1178 96h8v8h-8z"/><path fill="#ff961b" d="M1186 96h8v8h-8z"/><path fill="#ff8618" d="M1194 96h8v8h-8z"/><path fill="#ff7815" d="M1202 96h8v8h-8z"/><path fill="#ff6c13" d="M1210 96h8v8h-8z"/><path fill="#ff6111" d="M1218 96h8v8h-8z"/><path fill="#ff570f" d="M1226 96h8v8h-8z"/><path fill="#ff4f0d" d="M1234 96h8v8h-8z"/><path fill="#ff470c" d="M1242 96h8v8h-8z"/><path fill="#ff400a" d="M1250 96h8v8h-8z"/><path fill="#ff3a09" d="M1258 96h8v8h-8z"/><path fill="#ff3508" d="M1266 96h8v8h-8z"/><path fill="#ff2f07" d="M1274 96h8v8h-8z"/><path fill="#ff2b06" d="M1282 96h8v8h-8z"/><path fill="#ff2705" d="M1290 96h8v8h-8z"/><path fill="#ff2305" d="M1298 96h8v8h-8z"/><path fill="#ff1f04" d="M1306 96h8v8h-8z"/><path fill="#ff1c03" d="M1314 96h8v8h-8z"/><path fill="#ff1903" d="M1322 96h8v8h-8z"/><path fill="#ff1602" d="M1330 96h8v8h-8z"/><path fill="#ff1402" d="M1338 96h8v8h-8z"/><path fill="#ff1101" d="M1346 96h8v8h-8z"/><path fill="#ff0f01" d="M1354 96h8v8h-8z"/><path fill="#ff0d01" d="M1362 96h8v8h-8z"/><path fill="#ff0a00" d="M1378 96h8v8h-8z"/><path fill="#00ff46" d="M930 104h112v8h-112z"/><path fill="#00ff47" d="M1042 104h24v8h-24z"/><path fill="#08ff47" d="M1066 104h8v8h-8z"/><path fill="#14ff47" d="M1074 104h8v8h-8z"/><path fill="#23ff47" d="M1082 104h8v8h-8z"/><path fill="#34ff47" d="M1090 104h8v8h-8z"/><path fill="#47ff47" d="M1098 104h8v8h-8z"/><path fill="#5cff47" d="M1106 104h8v8h-8z"/><path fill="#74ff48" d="M1114 104h8v8h-8z"/><path fill="#8dff48" d="M1122 104h8v8h-8z"/><path fill="#a9ff48" d="M1130 104h8v8h-8z"/><path fill="#c7ff48" d="M1138 104h8v8h-8z"/><path fill="#e8ff48" d="M1146 104h8v8h-8z"/><path fill="#fff345" d="M1154 104h8v8h-8z"/><path fill="#ffd43c" d="M1162 104h8v8h-8z"/><path fill="#ffba35" d="M1170 104h8v8h-8z"/><path fill="#ffa52f" d="M1178 104h8v8h-8z"/><path fill="#ff922a" d="M1186 104h8v8h-8z"/><path fill="#ff8226" d="M1194 104h8v8h-8z"/><path fill="#ff7422" d="M1202 104h8v8h-8z"/><path fill="#ff681e" d="M1210 104h8v8h-8z"/><path fill="#ff5e1b" d="M1218 104h8v8h-8z"/><path fill="#ff5419" d="M1226 104h8v8h-8z"/><path fill="#ff4c16" d="M1234 104h8v8h-8z"/><path fill="#ff4414" d="M1242 104h8v8h-8z"/><path fill="#ff3d12" d="M1250 104h8v8h-8z"/><path fill="#ff3711" d="M1258 104h8v8h-8z"/><path fill="#ff320f" d="M1266 104h8v8h-8z"/><path fill="#ff2d0e" d="M1274 104h8v8h-8z"/><path fill="#ff280c" d="M1282 104h8v8h-8z"/><path fill="#ff240b" d="M1290 104h8v8h-8z"/><path fill="#ff200a" d="M1298 104h8v8h-8z"/><path fill="#ff1d09" d="M1306 104h8v8h-8z"/><path fill="#ff1a08" d="M1314 104h8v8h-8z"/><path fill="#ff1707" d="M1322 104h8v8h-8z"/><path fill="#ff1407" d="M1330 104h8v8h-8z"/><path fill="#ff1206" d="M1338 104h8v8h-8z"/><path fill="#ff1005" d="M1346 104h8v8h-8z"/><path fill="#ff0e05" d="M1354 104h8v8h-8z"/><path fill="#ff0c04" d="M1362 104h8v8h-8z"/><path fill="#ff0a04" d="M1370 104h8v8h-8z"/><path fill="#ff0803" d="M1378 104h8v8h-8z"/><path fill="#ff0703" d="M1386 104h8v8h-8z"/><path fill="#ff0502" d="M1394 104h8v8h-8z"/><path fill="#ff0402" d="M1402 104h8v8h-8z"/><path fill="#ff0302" d="M1410 104h8v8h-8z"/><path fill="#ff0201" d="M1418 104h8v8h-8z"/><path fill="#ff0101" d="M1426 104h16v8h-16z"/><path fill="#00ff54" d="M930 112h8v8h-8z"/><path fill="#00ff55" d="M938 112h24v8h-24z"/><path fill="#00ff56" d="M962 112h24v8h-24z"/><path fill="#00ff57" d="M986 112h16v8h-16z"/><path fill="#00ff58" d="M1002 112h16v8h-16z"/><path fill="#00ff59" d="M1018 112h24v8h-24z"/><path fill="#00ff5a" d="M1042 112h16v8h-16z"/><path fill="#00ff5b" d="M1058 112h8v8h-8z"/><path fill="#06ff5c" d="M1066 112h8v8h-8z"/><path fill="#12ff5c" d="M1074 112h8v8h-8z"/><path fill="#21ff5d" d="M1082 112h8v8h-8z"/><path fill="#32ff5d" d="M1090 112h8v8h-8z"/><path fill="#45ff5e" d="M1098 112h8v8h-8z"/><path fill="#5bff5f" d="M1106 112h8v8h-8z"/><path fill="#73ff60" d="M1114 112h8v8h-8z"/><path fill="#8dff60" d="M1122 112h8v8h-8z"/><path fill="#a9ff61" d="M1130 112h8v8h-8z"/><path fill="#c9ff62" d="M1138 112h8v8h-8z"/><path fill="#ebff63" d="M1146 112h8v8h-8z"/><path fill="#ffef5e" d="M1154 112h8v8h-8z"/><path fill="#ffd053" d="M1162 112h8v8h-8z"/><path fill="#ffb749" d="M1170 112h8v8h-8z"/><path fill="#ffa141" d="M1178 112h8v8h-8z"/><path fill="#ff8e3a" d="M1186 112h8v8h-8z"/><path fill="#ff7f35" d="M1194 112h8v8h-8z"/><path fill="#ff7130" d="M1202 112h8v8h-8z"/><path fill="#ff652b" d="M1210 112h8v8h-8z"/><path fill="#ff5a27" d="M1218 112h8v8h-8z"/><path fill="#ff5124" d="M1226 112h8v8h-8z"/><path fill="#ff4921" d="M1234 112h8v8h-8z"/><path fill="#ff411e" d="M1242 112h8v8h-8z"/><path fill="#ff3b1b" d="M1250 112h8v8h-8z"/><path fill="#ff3519" d="M1258 112h8v8h-8z"/><path fill="#ff2f17" d="M1266 112h8v8h-8z"/><path fill="#ff2a15" d="M1274 112h8v8h-8z"/><path fill="#ff2614" d="M1282 112h8v8h-8z"/><path fill="#ff2212" d="M1290 112h8v8h-8z"/><path fill="#ff1e11" d="M1298 112h8v8h-8z"/><path fill="#ff1b0f" d="M1306 112h8v8h-8z"/><path fill="#ff180e" d="M1314 112h8v8h-8z"/><path fill="#ff150d" d="M1322 112h8v8h-8z"/><path fill="#ff120c" d="M1330 112h8v8h-8z"/><path fill="#ff100b" d="M1338 112h8v8h-8z"/><path fill="#ff0e0a" d="M1346 112h8v8h-8z"/><path fill="#ff0c09" d="M1354 112h8v8h-8z"/><path fill="#ff0a08" d="M1362 112h8v8h-8z"/><path fill="#ff0808" d="M1370 112h8v8h-8z"/><path fill="#ff0707" d="M1378 112h8v8h-8z"/><path fill="#ff0606" d="M1386 112h8v8h-8z"/><path fill="#ff0406" d="M1394 112h8v8h-8z"/><path fill="#ff0305" d="M1402 112h8v8h-8z"/><path fill="#ff0205" d="M1410 112h8v8h-8z"/><path fill="#ff0104" d="M1418 112h8v8h-8z"/><path fill="#ff0004" d="M1426 112h8v8h-8zM1474 120h24v8h-24zM1538 128h24v8h-24z"/><path fill="#ff0003" d="M1434 112h24v8h-24zM1498 120h24v8h-24zM1562 128h16v8h-16z"/><path fill="#ff0002" d="M1458 112h24v8h-24zM1522 120h32v8h-32z"/><path fill="#ff0001" d="M1482 112h40v8h-40zM1554 120h24v8h-24z"/><path fill="#00ff65" d="M930 120h16v8h-16z"/><path fill="#00ff66" d="M946 120h16v8h-16z"/><path fill="#00ff67" d="M962 120h8v8h-8z"/><path fill="#00ff68" d="M970 120h16v8h-16z"/><path fill="#00ff69" d="M986 120h8v8h-8z"/><path fill="#00ff6a" d="M994 120h8v8h-8z"/><path fill="#00ff6b" d="M1002 120h8v8h-8z"/><path fill="#00ff6c" d="M1010 120h16v8h-16z"/><path fill="#00ff6d" d="M1026 120h8v8h-8z"/><path fill="#00ff6e" d="M1034 120h8v8h-8z"/><path fill="#00ff6f" d="M1042 120h8v8h-8z"/><path fill="#00ff70" d="M1050 120h8v8h-8z"/><path fill="#00ff71" d="M1058 120h8v8h-8z"/><path fill="#04ff72" d="M1066 120h8v8h-8z"/><path fill="#0fff74" d="M1074 120h8v8h-8z"/><path fill="#1eff75" d="M1082 120h8v8h-8z"/><path fill="#30ff76" d="M1090 120h8v8h-8z"/><path fill="#43ff77" d="M1098 120h8v8h-8z"/><path fill="#59ff79" d="M1106 120h8v8h-8z"/><path fill="#72ff7a" d="M1114 120h8v8h-8z"/><path fill="#8cff7c" d="M1122 120h8v8h-8z"/><path fill="#aaff7e" d="M1130 120h8v8h-8z"/><path fill="#caff7f" d="M1138 120h8v8h-8z"/><path fill="#edff81" d="M1146 120h8v8h-8z"/><path fill="#ffec79" d="M1154 120h8v8h-8z"/><path fill="#ffcc6b" d="M1162 120h8v8h-8z"/><path fill="#ffb35f" d="M1170 120h8v8h-8z"/><path fill="#ff9d55" d="M1178 120h8v8h-8z"/><path fill="#ff8b4c" d="M1186 120h8v8h-8z"/><path fill="#ff7b45" d="M1194 120h8v8h-8z"/><path fill="#ff6d3f" d="M1202 120h8v8h-8z"/><path fill="#ff6139" d="M1210 120h8v8h-8z"/><path fill="#ff5734" d="M1218 120h8v8h-8z"/><path fill="#ff4e30" d="M1226 120h8v8h-8z"/><path fill="#ff452c" d="M1234 120h8v8h-8z"/><path fill="#ff3e28" d="M1242 120h8v8h-8z"/><path fill="#ff3825" d="M1250 120h8v8h-8z"/><path fill="#ff3222" d="M1258 120h8v8h-8z"/><path fill="#ff2d20" d="M1266 120h8v8h-8z"/><path fill="#ff281e" d="M1274 120h8v8h-8z"/><path fill="#ff241b" d="M1282 120h8v8h-8z"/><path fill="#ff2019" d="M1290 120h8v8h-8z"/><path fill="#ff1c18" d="M1298 120h8v8h-8z"/><path fill="#ff1916" d="M1306 120h8v8h-8z"/><path fill="#ff1614" d="M1314 120h8v8h-8z"/><path fill="#ff1313" d="M1322 120h8v8h-8z"/><path fill="#ff1112" d="M1330 120h8v8h-8z"/><path fill="#ff0e11" d="M1338 120h8v8h-8z"/><path fill="#ff0c0f" d="M1346 120h8v8h-8z"/><path fill="#ff0a0e" d="M1354 120h8v8h-8z"/><path fill="#ff090d" d="M1362 120h8v8h-8z"/><path fill="#ff070c" d="M1370 120h8v8h-8z"/><path fill="#ff060c" d="M1378 120h8v8h-8z"/><path fill="#ff040b" d="M1386 120h8v8h-8z"/><path fill="#ff030a" d="M1394 120h8v8h-8z"/><path fill="#ff0209" d="M1402 120h8v8h-8z"/><path fill="#ff0109" d="M1410 120h8v8h-8z"/><path fill="#ff0008" d="M1418 120h8v8h-8zM1466 128h16v8h-16zM1514 136h16v8h-16zM1562 144h16v8h-16z"/><path fill="#ff0007" d="M1426 120h16v8h-16zM1482 128h16v8h-16zM1530 136h24v8h-24z"/><path fill="#ff0006" d="M1442 120h16v8h-16zM1498 128h16v8h-16zM1554 136h16v8h-16z"/><path fill="#ff0005" d="M1458 120h16v8h-16zM1514 128h24v8h-24zM1570 136h8v8h-8z"/><path fill="#00ff76" d="M930 128h8v8h-8z"/><path fill="#00ff77" d="M938 128h8v8h-8z"/><path fill="#00ff78" d="M946 128h8v8h-8z"/><path fill="#00ff79" d="M954 128h8v8h-8z"/><path fill="#00ff7a" d="M962 128h8v8h-8z"/><path fill="#00ff7b" d="M970 128h8v8h-8z"/><path fill="#00ff7c" d="M978 128h8v8h-8z"/><path fill="#00ff7d" d="M986 128h8v8h-8z"/><path fill="#00ff7e" d="M994 128h8v8h-8z"/><path fill="#00ff7f" d="M1002 128h8v8h-8z"/><path fill="#00ff81" d="M1010 128h8v8h-8z"/><path fill="#00ff82" d="M1018 128h8v8h-8z"/><path fill="#00ff83" d="M1026 128h8v8h-8z"/><path fill="#00ff85" d="M1034 128h8v8h-8z"/><path fill="#00ff86" d="M1042 128h8v8h-8z"/><path fill="#00ff88" d="M1050 128h8v8h-8zM930 136h8v8h-8z"/><path fill="#00ff8a" d="M1058 128h8v8h-8zM938 136h8v8h-8z"/><path fill="#02ff8c" d="M1066 128h8v8h-8z"/><path fill="#0dff8d" d="M1074 128h8v8h-8z"/><path fill="#1cff8f" d="M1082 128h8v8h-8z"/><path fill="#2dff91" d="M1090 128h8v8h-8z"/><path fill="#41ff93" d="M1098 128h8v8h-8z"/><path fill="#58ff96" d="M1106 128h8v8h-8z"/><path fill="#71ff98" d="M1114 128h8v8h-8z"/><path fill="#8cff9b" d="M1122 128h8v8h-8z"/><path fill="#abff9d" d="M1130 128h8v8h-8z"/><path fill="#ccffa0" d="M1138 128h8v8h-8z"/><path fill="#f0ffa3" d="M1146 128h8v8h-8z"/><path fill="#ffe897" d="M1154 128h8v8h-8z"/><path fill="#ffc886" d="M1162 128h8v8h-8z"/><path fill="#ffaf77" d="M1170 128h8v8h-8z"/><path fill="#ff996b" d="M1178 128h8v8h-8z"/><path fill="#ff8760" d="M1186 128h8v8h-8z"/><path fill="#ff7757" d="M1194 128h8v8h-8z"/><path fill="#ff694f" d="M1202 128h8v8h-8z"/><path fill="#ff5e48" d="M1210 128h8v8h-8z"/><path fill="#ff5342" d="M1218 128h8v8h-8z"/><path fill="#ff4a3d" d="M1226 128h8v8h-8z"/><path fill="#ff4238" d="M1234 128h8v8h-8z"/><path fill="#ff3b34" d="M1242 128h8v8h-8z"/><path fill="#ff3530" d="M1250 128h8v8h-8z"/><path fill="#ff2f2d" d="M1258 128h8v8h-8z"/><path fill="#ff2a29" d="M1266 128h8v8h-8z"/><path fill="#ff2527" d="M1274 128h8v8h-8z"/><path fill="#ff2124" d="M1282 128h8v8h-8z"/><path fill="#ff1d22" d="M1290 128h8v8h-8z"/><path fill="#ff1a1f" d="M1298 128h8v8h-8z"/><path fill="#ff171d" d="M1306 128h8v8h-8z"/><path fill="#ff141b" d="M1314 128h8v8h-8z"/><path fill="#ff111a" d="M1322 128h8v8h-8z"/><path fill="#ff0f18" d="M1330 128h8v8h-8z"/><path fill="#ff0d17" d="M1338 128h8v8h-8z"/><path fill="#ff0b15" d="M1346 128h8v8h-8z"/><path fill="#ff0914" d="M1354 128h8v8h-8z"/><path fill="#ff0713" d="M1362 128h8v8h-8z"/><path fill="#ff0612" d="M1370 128h8v8h-8z"/><path fill="#ff0410" d="M1378 128h8v8h-8z"/><path fill="#ff030f" d="M1386 128h8v8h-8z"/><path fill="#ff020f" d="M1394 128h8v8h-8z"/><path fill="#ff010e" d="M1402 128h8v8h-8z"/><path fill="#ff000d" d="M1410 128h8v8h-8zM1450 136h8v8h-8zM1490 144h16v8h-16zM1538 152h8v8h-8z"/><path fill="#ff000c" d="M1418 128h8v8h-8zM1458 136h16v8h-16zM1506 144h16v8h-16zM1546 152h16v8h-16z"/><path fill="#ff000b" d="M1426 128h16v8h-16zM1474 136h16v8h-16zM1522 144h8v8h-8zM1562 152h16v8h-16z"/><path fill="#ff000a" d="M1442 128h8v8h-8zM1490 136h8v8h-8zM1530 144h16v8h-16z"/><path fill="#ff0009" d="M1450 128h16v8h-16zM1498 136h16v8h-16zM1546 144h16v8h-16z"/><path fill="#00ff8b" d="M946 136h8v8h-8z"/><path fill="#00ff8c" d="M954 136h8v8h-8z"/><path fill="#00ff8e" d="M962 136h8v8h-8z"/><path fill="#00ff8f" d="M970 136h8v8h-8z"/><path fill="#00ff91" d="M978 136h8v8h-8z"/><path fill="#00ff92" d="M986 136h8v8h-8z"/><path fill="#00ff94" d="M994 136h8v8h-8z"/><path fill="#00ff96" d="M1002 136h8v8h-8z"/><path fill="#00ff98" d="M1010 136h8v8h-8z"/><path fill="#00ff99" d="M1018 136h8v8h-8z"/><path fill="#00ff9b" d="M1026 136h8v8h-8z"/><path fill="#00ff9e" d="M1034 136h8v8h-8zM938 144h8v8h-8z"/><path fill="#00ffa0" d="M1042 136h8v8h-8z"/><path fill="#00ffa2" d="M1050 136h8v8h-8z"/><path fill="#00ffa4" d="M1058 136h8v8h-8z"/><path fill="#00ffa7" d="M1066 136h8v8h-8zM978 144h8v8h-8z"/><path fill="#0affaa" d="M1074 136h8v8h-8z"/><path fill="#19ffac" d="M1082 136h8v8h-8z"/><path fill="#2affaf" d="M1090 136h8v8h-8z"/><path fill="#3fffb2" d="M1098 136h8v8h-8z"/><path fill="#56ffb6" d="M1106 136h8v8h-8z"/><path fill="#6fffb9" d="M1114 136h8v8h-8z"/><path fill="#8cffbd" d="M1122 136h8v8h-8z"/><path fill="#abffc1" d="M1130 136h8v8h-8z"/><path fill="#ceffc5" d="M1138 136h8v8h-8z"/><path fill="#f4ffc9" d="M1146 136h8v8h-8z"/><path fill="#ffe4b8" d="M1154 136h8v8h-8z"/><path fill="#ffc4a2" d="M1162 136h8v8h-8z"/><path fill="#ffaa91" d="M1170 136h8v8h-8z"/><path fill="#ff9582" d="M1178 136h8v8h-8z"/><path fill="#ff8275" d="M1186 136h8v8h-8z"/><path fill="#ff736a" d="M1194 136h8v8h-8z"/><path fill="#ff6661" d="M1202 136h8v8h-8z"/><path fill="#ff5a58" d="M1210 136h8v8h-8z"/><path fill="#ff5051" d="M1218 136h8v8h-8z"/><path fill="#ff474b" d="M1226 136h8v8h-8z"/><path fill="#ff3f45" d="M1234 136h8v8h-8z"/><path fill="#ff3840" d="M1242 136h8v8h-8z"/><path fill="#ff323c" d="M1250 136h8v8h-8z"/><path fill="#ff2c37" d="M1258 136h8v8h-8z"/><path fill="#ff2734" d="M1266 136h8v8h-8z"/><path fill="#ff2330" d="M1274 136h8v8h-8z"/><path fill="#ff1f2d" d="M1282 136h8v8h-8z"/><path fill="#ff1b2a" d="M1290 136h8v8h-8z"/><path fill="#ff1828" d="M1298 136h8v8h-8z"/><path fill="#ff1525" d="M1306 136h8v8h-8z"/><path fill="#ff1223" d="M1314 136h8v8h-8z"/><path fill="#ff0f21" d="M1322 136h8v8h-8z"/><path fill="#ff0d1f" d="M1330 136h8v8h-8z"/><path fill="#ff0b1d" d="M1338 136h8v8h-8z"/><path fill="#ff091b" d="M1346 136h8v8h-8z"/><path fill="#ff071a" d="M1354 136h8v8h-8z"/><path fill="#ff0618" d="M1362 136h8v8h-8z"/><path fill="#ff0417" d="M1370 136h8v8h-8z"/><path fill="#ff0316" d="M1378 136h8v8h-8z"/><path fill="#ff0215" d="M1386 136h8v8h-8z"/><path fill="#ff0113" d="M1394 136h8v8h-8z"/><path fill="#ff0012" d="M1402 136h8v8h-8zM1442 144h8v8h-8zM1482 152h8v8h-8zM1522 160h8v8h-8zM1554 168h8v8h-8z"/><path fill="#ff0011" d="M1410 136h8v8h-8zM1450 144h8v8h-8zM1490 152h8v8h-8zM1530 160h8v8h-8z"/><path fill="#ff0010" d="M1418 136h16v8h-16zM1458 144h16v8h-16zM1498 152h16v8h-16zM1538 160h16v8h-16z"/><path fill="#ff000f" d="M1434 136h8v8h-8zM1474 144h8v8h-8zM1514 152h8v8h-8zM1554 160h8v8h-8z"/><path fill="#ff000e" d="M1442 136h8v8h-8zM1482 144h8v8h-8zM1522 152h16v8h-16zM1562 160h8v8h-8z"/><path fill="#00ff9f" d="M946 144h8v8h-8z"/><path fill="#00ffa1" d="M954 144h8v8h-8z"/><path fill="#00ffa3" d="M962 144h8v8h-8z"/><path fill="#00ffa5" d="M970 144h8v8h-8z"/><path fill="#00ffa9" d="M986 144h8v8h-8z"/><path fill="#00ffac" d="M994 144h8v8h-8z"/><path fill="#00ffae" d="M1002 144h8v8h-8z"/><path fill="#00ffb0" d="M1010 144h8v8h-8z"/><path fill="#00ffb3" d="M1018 144h8v8h-8z"/><path fill="#00ffb5" d="M1026 144h8v8h-8zM946 152h8v8h-8z"/><path fill="#00ffb8" d="M1034 144h8v8h-8zM954 152h8v8h-8z"/><path fill="#00ffbb" d="M1042 144h8v8h-8z"/><path fill="#00ffbe" d="M1050 144h8v8h-8z"/><path fill="#00ffc1" d="M1058 144h8v8h-8z"/><path fill="#00ffc5" d="M1066 144h8v8h-8zM994 152h8v8h-8z"/><path fill="#07ffc8" d="M1074 144h8v8h-8z"/><path fill="#16ffcc" d="M1082 144h8v8h-8z"/><path fill="#28ffd0" d="M1090 144h8v8h-8z"/><path fill="#3cffd4" d="M1098 144h8v8h-8z"/><path fill="#54ffd9" d="M1106 144h8v8h-8z"/><path fill="#6effdd" d="M1114 144h8v8h-8z"/><path fill="#8bffe2" d="M1122 144h8v8h-8z"/><path fill="#acffe8" d="M1130 144h8v8h-8z"/><path fill="#d0ffed" d="M1138 144h8v8h-8z"/><path fill="#f7fff4" d="M1146 144h8v8h-8z"/><path fill="#ffe0db" d="M1154 144h8v8h-8z"/><path fill="#ffc0c1" d="M1162 144h8v8h-8z"/><path fill="#ffa6ac" d="M1170 144h8v8h-8z"/><path fill="#ff909a" d="M1178 144h8v8h-8z"/><path fill="#ff7e8b" d="M1186 144h8v8h-8z"/><path fill="#ff6f7f" d="M1194 144h8v8h-8z"/><path fill="#ff6273" d="M1202 144h8v8h-8z"/><path fill="#ff566a" d="M1210 144h8v8h-8z"/><path fill="#ff4c61" d="M1218 144h8v8h-8z"/><path fill="#ff435a" d="M1226 144h8v8h-8z"/><path fill="#ff3c53" d="M1234 144h8v8h-8z"/><path fill="#ff354d" d="M1242 144h8v8h-8z"/><path fill="#ff2f48" d="M1250 144h8v8h-8z"/><path fill="#ff2943" d="M1258 144h8v8h-8z"/><path fill="#ff253e" d="M1266 144h8v8h-8z"/><path fill="#ff203a" d="M1274 144h8v8h-8z"/><path fill="#ff1c37" d="M1282 144h8v8h-8z"/><path fill="#ff1933" d="M1290 144h8v8h-8z"/><path fill="#ff1530" d="M1298 144h8v8h-8z"/><path fill="#ff122d" d="M1306 144h8v8h-8z"/><path fill="#ff102b" d="M1314 144h8v8h-8z"/><path fill="#ff0d28" d="M1322 144h8v8h-8z"/><path fill="#ff0b26" d="M1330 144h8v8h-8z"/><path fill="#ff0924" d="M1338 144h8v8h-8z"/><path fill="#ff0722" d="M1346 144h8v8h-8z"/><path fill="#ff0620" d="M1354 144h8v8h-8z"/><path fill="#ff041f" d="M1362 144h8v8h-8z"/><path fill="#ff031d" d="M1370 144h8v8h-8z"/><path fill="#ff021b" d="M1378 144h8v8h-8z"/><path fill="#ff011a" d="M1386 144h8v8h-8z"/><path fill="#ff0019" d="M1394 144h8v8h-8zM1426 152h8v8h-8zM1458 160h8v8h-8zM1490 168h8v8h-8zM1530 176h8v8h-8z"/><path fill="#ff0018" d="M1402 144h8v8h-8zM1434 152h8v8h-8zM1466 160h8v8h-8zM1498 168h8v8h-8zM1538 176h8v8h-8z"/><path fill="#ff0016" d="M1410 144h8v8h-8zM1450 152h8v8h-8zM1482 160h8v8h-8zM1522 168h8v8h-8z"/><path fill="#ff0015" d="M1418 144h8v8h-8zM1458 152h8v8h-8zM1490 160h8v8h-8zM1530 168h8v8h-8z"/><path fill="#ff0014" d="M1426 144h8v8h-8zM1466 152h8v8h-8zM1498 160h8v8h-8zM1538 168h8v8h-8z"/><path fill="#ff0013" d="M1434 144h8v8h-8zM1474 152h8v8h-8zM1506 160h16v8h-16zM1546 168h8v8h-8z"/><path fill="#00ffba" d="M962 152h8v8h-8z"/><path fill="#00ffbd" d="M970 152h8v8h-8z"/><path fill="#00ffbf" d="M978 152h8v8h-8z"/><path fill="#00ffc2" d="M986 152h8v8h-8z"/><path fill="#00ffc8" d="M1002 152h8v8h-8z"/><path fill="#00ffcb" d="M1010 152h8v8h-8z"/><path fill="#00ffce" d="M1018 152h8v8h-8z"/><path fill="#00ffd2" d="M1026 152h8v8h-8z"/><path fill="#00ffd5" d="M1034 152h8v8h-8z"/><path fill="#00ffd9" d="M1042 152h8v8h-8zM978 160h8v8h-8z"/><path fill="#00ffdd" d="M1050 152h8v8h-8z"/><path fill="#00ffe1" d="M1058 152h8v8h-8z"/><path fill="#00ffe5" d="M1066 152h8v8h-8z"/><path fill="#05ffea" d="M1074 152h8v8h-8z"/><path fill="#13ffef" d="M1082 152h8v8h-8z"/><path fill="#25fff4" d="M1090 152h8v8h-8z"/><path fill="#3afffa" d="M1098 152h8v8h-8z"/><path fill="#52ffff" d="M1106 152h8v8h-8z"/><path fill="#6af9ff" d="M1114 152h8v8h-8z"/><path fill="#84f2ff" d="M1122 152h8v8h-8z"/><path fill="#a0ecff" d="M1130 152h8v8h-8z"/><path fill="#bde6ff" d="M1138 152h8v8h-8z"/><path fill="#dce0ff" d="M1146 152h8v8h-8z"/><path fill="#fdd9ff" d="M1154 152h8v8h-8z"/><path fill="#ffbbe3" d="M1162 152h8v8h-8z"/><path fill="#ffa1ca" d="M1170 152h8v8h-8z"/><path fill="#ff8cb5" d="M1178 152h8v8h-8z"/><path fill="#ff7aa3" d="M1186 152h8v8h-8z"/><path fill="#ff6b94" d="M1194 152h8v8h-8z"/><path fill="#ff5e87" d="M1202 152h8v8h-8z"/><path fill="#ff527c" d="M1210 152h8v8h-8z"/><path fill="#ff4972" d="M1218 152h8v8h-8z"/><path fill="#ff406a" d="M1226 152h8v8h-8z"/><path fill="#ff3862" d="M1234 152h8v8h-8z"/><path fill="#ff325b" d="M1242 152h8v8h-8z"/><path fill="#ff2c55" d="M1250 152h8v8h-8z"/><path fill="#ff274f" d="M1258 152h8v8h-8z"/><path fill="#ff224a" d="M1266 152h8v8h-8z"/><path fill="#ff1e45" d="M1274 152h8v8h-8z"/><path fill="#ff1a41" d="M1282 152h8v8h-8z"/><path fill="#ff163d" d="M1290 152h8v8h-8z"/><path fill="#ff133a" d="M1298 152h8v8h-8z"/><path fill="#ff1036" d="M1306 152h8v8h-8z"/><path fill="#ff0e33" d="M1314 152h8v8h-8z"/><path fill="#ff0b30" d="M1322 152h8v8h-8z"/><path fill="#ff092e" d="M1330 152h8v8h-8z"/><path fill="#ff082b" d="M1338 152h8v8h-8z"/><path fill="#ff0629" d="M1346 152h8v8h-8z"/><path fill="#ff0427" d="M1354 152h8v8h-8z"/><path fill="#ff0325" d="M1362 152h8v8h-8z"/><path fill="#ff0223" d="M1370 152h8v8h-8z"/><path fill="#ff0121" d="M1378 152h8v8h-8z"/><path fill="#ff0020" d="M1386 152h8v8h-8zM1474 176h8v8h-8zM1506 184h8v8h-8z"/><path fill="#ff001e" d="M1394 152h8v8h-8zM1426 160h8v8h-8zM1458 168h8v8h-8zM1490 176h8v8h-8zM1522 184h8v8h-8z"/><path fill="#ff001d" d="M1402 152h8v8h-8zM1434 160h8v8h-8zM1466 168h8v8h-8zM1498 176h8v8h-8zM1530 184h8v8h-8z"/><path fill="#ff001c" d="M1410 152h8v8h-8zM1442 160h8v8h-8zM1474 168h8v8h-8zM1506 176h8v8h-8zM1538 184h8v8h-8z"/><path fill="#ff001a" d="M1418 152h8v8h-8zM1450 160h8v8h-8zM1482 168h8v8h-8zM1522 176h8v8h-8z"/><path fill="#ff0017" d="M1442 152h8v8h-8zM1474 160h8v8h-8zM1506 168h16v8h-16zM1546 176h8v8h-8z"/><path fill="#00ffca" d="M938 160h8v8h-8z"/><path fill="#00ffcd" d="M946 160h8v8h-8z"/><path fill="#00ffd0" d="M954 160h8v8h-8z"/><path fill="#00ffd3" d="M962 160h8v8h-8z"/><path fill="#00ffd6" d="M970 160h8v8h-8z"/><path fill="#00ffdc" d="M986 160h8v8h-8z"/><path fill="#00ffe0" d="M994 160h8v8h-8z"/><path fill="#00ffe4" d="M1002 160h8v8h-8z"/><path fill="#00ffe8" d="M1010 160h8v8h-8z"/><path fill="#00ffec" d="M1018 160h8v8h-8z"/><path fill="#00fff0" d="M1026 160h8v8h-8z"/><path fill="#00fff4" d="M1034 160h8v8h-8z"/><path fill="#00fff9" d="M1042 160h8v8h-8zM986 168h8v8h-8z"/><path fill="#00fffe" d="M1050 160h8v8h-8z"/><path fill="#00fbff" d="M1058 160h8v8h-8z"/><path fill="#00f5ff" d="M1066 160h8v8h-8zM962 176h8v8h-8z"/><path fill="#02f0ff" d="M1074 160h8v8h-8z"/><path fill="#0febff" d="M1082 160h8v8h-8z"/><path fill="#1ee5ff" d="M1090 160h8v8h-8z"/><path fill="#30e0ff" d="M1098 160h8v8h-8z"/><path fill="#44daff" d="M1106 160h8v8h-8z"/><path fill="#5ad5ff" d="M1114 160h8v8h-8z"/><path fill="#70cfff" d="M1122 160h8v8h-8z"/><path fill="#89c9ff" d="M1130 160h8v8h-8z"/><path fill="#a2c3ff" d="M1138 160h8v8h-8z"/><path fill="#bdbdff" d="M1146 160h8v8h-8z"/><path fill="#dab7ff" d="M1154 160h8v8h-8z"/><path fill="#f7b1ff" d="M1162 160h8v8h-8z"/><path fill="#ff9dea" d="M1170 160h8v8h-8z"/><path fill="#ff87d1" d="M1178 160h8v8h-8z"/><path fill="#ff76bd" d="M1186 160h8v8h-8z"/><path fill="#ff67ac" d="M1194 160h8v8h-8z"/><path fill="#ff5a9d" d="M1202 160h8v8h-8z"/><path fill="#ff4f90" d="M1210 160h8v8h-8z"/><path fill="#ff4584" d="M1218 160h8v8h-8z"/><path fill="#ff3c7a" d="M1226 160h8v8h-8z"/><path fill="#ff3571" d="M1234 160h8v8h-8z"/><path fill="#ff2f69" d="M1242 160h8v8h-8z"/><path fill="#ff2962" d="M1250 160h8v8h-8z"/><path fill="#ff245c" d="M1258 160h8v8h-8z"/><path fill="#ff1f56" d="M1266 160h8v8h-8z"/><path fill="#ff1b51" d="M1274 160h8v8h-8z"/><path fill="#ff174c" d="M1282 160h8v8h-8z"/><path fill="#ff1447" d="M1290 160h8v8h-8z"/><path fill="#ff1143" d="M1298 160h8v8h-8z"/><path fill="#ff0e3f" d="M1306 160h8v8h-8z"/><path fill="#ff0c3c" d="M1314 160h8v8h-8z"/><path fill="#ff0a39" d="M1322 160h8v8h-8z"/><path fill="#ff0836" d="M1330 160h8v8h-8z"/><path fill="#ff0633" d="M1338 160h8v8h-8z"/><path fill="#ff0431" d="M1346 160h8v8h-8z"/><path fill="#ff032e" d="M1354 160h8v8h-8z"/><path fill="#ff022c" d="M1362 160h8v8h-8z"/><path fill="#ff012a" d="M1370 160h8v8h-8z"/><path fill="#ff0028" d="M1378 160h8v8h-8zM1402 168h8v8h-8zM1458 184h8v8h-8zM1482 192h8v8h-8zM1514 200h8v8h-8z"/><path fill="#ff0026" d="M1386 160h8v8h-8zM1442 176h8v8h-8zM1466 184h8v8h-8zM1498 192h8v8h-8zM1522 200h8v8h-8z"/><path fill="#ff0024" d="M1394 160h8v8h-8zM1450 176h8v8h-8zM1482 184h8v8h-8zM1506 192h8v8h-8z"/><path fill="#ff0023" d="M1402 160h8v8h-8zM1426 168h8v8h-8zM1458 176h8v8h-8zM1514 192h8v8h-8z"/><path fill="#ff0021" d="M1410 160h8v8h-8zM1442 168h8v8h-8zM1466 176h8v8h-8zM1498 184h8v8h-8zM1530 192h8v8h-8z"/><path fill="#ff001f" d="M1418 160h8v8h-8zM1450 168h8v8h-8zM1482 176h8v8h-8zM1514 184h8v8h-8z"/><path fill="#00ffe6" d="M946 168h8v8h-8z"/><path fill="#00ffe9" d="M954 168h8v8h-8z"/><path fill="#00ffed" d="M962 168h8v8h-8z"/><path fill="#00fff1" d="M970 168h8v8h-8z"/><path fill="#00fff5" d="M978 168h8v8h-8z"/><path fill="#00fffd" d="M994 168h8v8h-8z"/><path fill="#00fcff" d="M1002 168h8v8h-8z"/><path fill="#00f8ff" d="M1010 168h8v8h-8z"/><path fill="#00f3ff" d="M1018 168h8v8h-8z"/><path fill="#00eeff" d="M1026 168h8v8h-8z"/><path fill="#00eaff" d="M1034 168h8v8h-8z"/><path fill="#00e5ff" d="M1042 168h8v8h-8z"/><path fill="#00e0ff" d="M1050 168h8v8h-8zM1002 176h8v8h-8zM954 184h8v8h-8z"/><path fill="#00dbff" d="M1058 168h8v8h-8z"/><path fill="#00d6ff" d="M1066 168h8v8h-8z"/><path fill="#00d1ff" d="M1074 168h8v8h-8z"/><path fill="#0accff" d="M1082 168h8v8h-8z"/><path fill="#18c7ff" d="M1090 168h8v8h-8z"/><path fill="#28c2ff" d="M1098 168h8v8h-8z"/><path fill="#39bdff" d="M1106 168h8v8h-8z"/><path fill="#4cb7ff" d="M1114 168h8v8h-8z"/><path fill="#60b2ff" d="M1122 168h8v8h-8z"/><path fill="#76adff" d="M1130 168h8v8h-8z"/><path fill="#8da7ff" d="M1138 168h8v8h-8z"/><path fill="#a5a2ff" d="M1146 168h8v8h-8z"/><path fill="#be9cff" d="M1154 168h8v8h-8z"/><path fill="#d897ff" d="M1162 168h8v8h-8z"/><path fill="#f391ff" d="M1170 168h8v8h-8z"/><path fill="#ff83f0" d="M1178 168h8v8h-8z"/><path fill="#ff71d8" d="M1186 168h8v8h-8z"/><path fill="#ff62c4" d="M1194 168h8v8h-8z"/><path fill="#ff55b3" d="M1202 168h8v8h-8z"/><path fill="#ff4ba4" d="M1210 168h8v8h-8z"/><path fill="#ff4197" d="M1218 168h8v8h-8z"/><path fill="#ff398c" d="M1226 168h8v8h-8z"/><path fill="#ff3282" d="M1234 168h8v8h-8z"/><path fill="#ff2b79" d="M1242 168h8v8h-8z"/><path fill="#ff2670" d="M1250 168h8v8h-8z"/><path fill="#ff2169" d="M1258 168h8v8h-8z"/><path fill="#ff1c62" d="M1266 168h8v8h-8z"/><path fill="#ff185c" d="M1274 168h8v8h-8z"/><path fill="#ff1557" d="M1282 168h8v8h-8z"/><path fill="#ff1252" d="M1290 168h8v8h-8z"/><path fill="#ff0f4d" d="M1298 168h8v8h-8z"/><path fill="#ff0c49" d="M1306 168h8v8h-8z"/><path fill="#ff0a45" d="M1314 168h8v8h-8z"/><path fill="#ff0842" d="M1322 168h8v8h-8z"/><path fill="#ff063e" d="M1330 168h8v8h-8z"/><path fill="#ff043b" d="M1338 168h8v8h-8z"/><path fill="#ff0338" d="M1346 168h8v8h-8z"/><path fill="#ff0236" d="M1354 168h8v8h-8z"/><path fill="#ff0133" d="M1362 168h8v8h-8z"/><path fill="#ff0031" d="M1370 168h8v8h-8zM1394 176h8v8h-8zM1418 184h8v8h-8zM1442 192h8v8h-8zM1466 200h8v8h-8zM1490 208h8v8h-8z"/><path fill="#ff002e" d="M1378 168h8v8h-8zM1506 208h8v8h-8z"/><path fill="#ff002c" d="M1386 168h8v8h-8zM1466 192h8v8h-8zM1490 200h8v8h-8zM1514 208h8v8h-8z"/><path fill="#ff002a" d="M1394 168h8v8h-8zM1474 192h8v8h-8zM1498 200h8v8h-8z"/><path fill="#ff0027" d="M1410 168h8v8h-8zM1434 176h8v8h-8zM1490 192h8v8h-8z"/><path fill="#ff0025" d="M1418 168h8v8h-8zM1474 184h8v8h-8z"/><path fill="#ff0022" d="M1434 168h8v8h-8zM1490 184h8v8h-8zM1522 192h8v8h-8z"/><path fill="#00fdff" d="M946 176h8v8h-8z"/><path fill="#00f9ff" d="M954 176h8v8h-8z"/><path fill="#00f1ff" d="M970 176h8v8h-8z"/><path fill="#00edff" d="M978 176h8v8h-8z"/><path fill="#00e9ff" d="M986 176h8v8h-8z"/><path fill="#00e4ff" d="M994 176h8v8h-8zM946 184h8v8h-8z"/><path fill="#00dcff" d="M1010 176h8v8h-8zM962 184h8v8h-8z"/><path fill="#00d7ff" d="M1018 176h8v8h-8z"/><path fill="#00d3ff" d="M1026 176h8v8h-8z"/><path fill="#00ceff" d="M1034 176h8v8h-8z"/><path fill="#00caff" d="M1042 176h8v8h-8zM954 192h8v8h-8z"/><path fill="#00c5ff" d="M1050 176h8v8h-8z"/><path fill="#00c1ff" d="M1058 176h8v8h-8z"/><path fill="#00bcff" d="M1066 176h8v8h-8z"/><path fill="#00b7ff" d="M1074 176h8v8h-8zM1034 184h8v8h-8zM994 192h8v8h-8zM954 200h8v8h-8z"/><path fill="#07b3ff" d="M1082 176h8v8h-8z"/><path fill="#13aeff" d="M1090 176h8v8h-8z"/><path fill="#21a9ff" d="M1098 176h8v8h-8z"/><path fill="#30a4ff" d="M1106 176h8v8h-8z"/><path fill="#419fff" d="M1114 176h8v8h-8z"/><path fill="#539aff" d="M1122 176h8v8h-8z"/><path fill="#6695ff" d="M1130 176h8v8h-8z"/><path fill="#7b90ff" d="M1138 176h8v8h-8z"/><path fill="#908bff" d="M1146 176h8v8h-8z"/><path fill="#a686ff" d="M1154 176h8v8h-8z"/><path fill="#be81ff" d="M1162 176h8v8h-8z"/><path fill="#d67bff" d="M1170 176h8v8h-8z"/><path fill="#ef76ff" d="M1178 176h8v8h-8z"/><path fill="#ff6cf5" d="M1186 176h8v8h-8z"/><path fill="#ff5ede" d="M1194 176h8v8h-8z"/><path fill="#ff51cb" d="M1202 176h8v8h-8z"/><path fill="#ff47ba" d="M1210 176h8v8h-8z"/><path fill="#ff3dab" d="M1218 176h8v8h-8z"/><path fill="#ff359e" d="M1226 176h8v8h-8z"/><path fill="#ff2e93" d="M1234 176h8v8h-8z"/><path fill="#ff2889" d="M1242 176h8v8h-8z"/><path fill="#ff237f" d="M1250 176h8v8h-8z"/><path fill="#ff1e77" d="M1258 176h8v8h-8z"/><path fill="#ff1a70" d="M1266 176h8v8h-8z"/><path fill="#ff1669" d="M1274 176h8v8h-8z"/><path fill="#ff1263" d="M1282 176h8v8h-8z"/><path fill="#ff0f5d" d="M1290 176h8v8h-8z"/><path fill="#ff0d58" d="M1298 176h8v8h-8z"/><path fill="#ff0a53" d="M1306 176h8v8h-8z"/><path fill="#ff084f" d="M1314 176h8v8h-8z"/><path fill="#ff064b" d="M1322 176h8v8h-8z"/><path fill="#ff0447" d="M1330 176h8v8h-8z"/><path fill="#ff0344" d="M1338 176h8v8h-8z"/><path fill="#ff0240" d="M1346 176h8v8h-8z"/><path fill="#ff013d" d="M1354 176h8v8h-8z"/><path fill="#ff003a" d="M1362 176h8v8h-8zM1386 184h8v8h-8zM1450 208h8v8h-8zM1474 216h8v8h-8z"/><path fill="#ff0038" d="M1370 176h8v8h-8zM1458 208h8v8h-8zM1482 216h8v8h-8z"/><path fill="#ff0035" d="M1378 176h8v8h-8zM1402 184h8v8h-8zM1426 192h8v8h-8zM1450 200h8v8h-8z"/><path fill="#ff0033" d="M1386 176h8v8h-8zM1410 184h8v8h-8zM1434 192h8v8h-8zM1458 200h8v8h-8zM1482 208h8v8h-8zM1506 216h8v8h-8z"/><path fill="#ff002f" d="M1402 176h8v8h-8zM1426 184h8v8h-8zM1450 192h8v8h-8zM1474 200h8v8h-8zM1498 208h8v8h-8z"/><path fill="#ff002d" d="M1410 176h8v8h-8zM1434 184h8v8h-8zM1458 192h8v8h-8zM1482 200h8v8h-8z"/><path fill="#ff002b" d="M1418 176h8v8h-8zM1442 184h8v8h-8z"/><path fill="#ff0029" d="M1426 176h8v8h-8zM1450 184h8v8h-8zM1506 200h8v8h-8z"/><path fill="#ff001b" d="M1514 176h8v8h-8z"/><path fill="#00d8ff" d="M970 184h8v8h-8z"/><path fill="#00d4ff" d="M978 184h8v8h-8z"/><path fill="#00d0ff" d="M986 184h8v8h-8z"/><path fill="#00ccff" d="M994 184h8v8h-8z"/><path fill="#00c8ff" d="M1002 184h8v8h-8z"/><path fill="#00c4ff" d="M1010 184h8v8h-8z"/><path fill="#00c0ff" d="M1018 184h8v8h-8z"/><path fill="#00bbff" d="M1026 184h8v8h-8zM986 192h8v8h-8z"/><path fill="#00b3ff" d="M1042 184h8v8h-8zM1002 192h8v8h-8z"/><path fill="#00afff" d="M1050 184h8v8h-8zM1010 192h8v8h-8z"/><path fill="#00aaff" d="M1058 184h8v8h-8z"/><path fill="#00a6ff" d="M1066 184h8v8h-8z"/><path fill="#00a1ff" d="M1074 184h8v8h-8zM1002 200h8v8h-8z"/><path fill="#049dff" d="M1082 184h8v8h-8z"/><path fill="#0e98ff" d="M1090 184h8v8h-8z"/><path fill="#1b94ff" d="M1098 184h8v8h-8z"/><path fill="#298fff" d="M1106 184h8v8h-8z"/><path fill="#388bff" d="M1114 184h8v8h-8z"/><path fill="#4886ff" d="M1122 184h8v8h-8z"/><path fill="#5981ff" d="M1130 184h8v8h-8z"/><path fill="#6c7dff" d="M1138 184h8v8h-8z"/><path fill="#7f78ff" d="M1146 184h8v8h-8z"/><path fill="#9373ff" d="M1154 184h8v8h-8z"/><path fill="#a86eff" d="M1162 184h8v8h-8z"/><path fill="#be6aff" d="M1170 184h8v8h-8z"/><path fill="#d465ff" d="M1178 184h8v8h-8z"/><path fill="#ec60ff" d="M1186 184h8v8h-8z"/><path fill="#ff59fa" d="M1194 184h8v8h-8z"/><path fill="#ff4de4" d="M1202 184h8v8h-8z"/><path fill="#ff42d1" d="M1210 184h8v8h-8z"/><path fill="#ff39c0" d="M1218 184h8v8h-8z"/><path fill="#ff32b2" d="M1226 184h8v8h-8z"/><path fill="#ff2ba5" d="M1234 184h8v8h-8z"/><path fill="#ff2599" d="M1242 184h8v8h-8z"/><path fill="#ff208f" d="M1250 184h8v8h-8z"/><path fill="#ff1b86" d="M1258 184h8v8h-8z"/><path fill="#ff177e" d="M1266 184h8v8h-8z"/><path fill="#ff1376" d="M1274 184h8v8h-8z"/><path fill="#ff106f" d="M1282 184h8v8h-8z"/><path fill="#ff0d69" d="M1290 184h8v8h-8z"/><path fill="#ff0a63" d="M1298 184h8v8h-8z"/><path fill="#ff085e" d="M1306 184h8v8h-8z"/><path fill="#ff0659" d="M1314 184h8v8h-8z"/><path fill="#ff0454" d="M1322 184h8v8h-8z"/><path fill="#ff0350" d="M1330 184h8v8h-8z"/><path fill="#ff024c" d="M1338 184h8v8h-8z"/><path fill="#ff0149" d="M1346 184h8v8h-8z"/><path fill="#ff0045" d="M1354 184h8v8h-8zM1394 200h8v8h-8zM1434 216h8v8h-8zM1474 232h8v8h-8z"/><path fill="#ff0042" d="M1362 184h8v8h-8zM1402 200h8v8h-8zM1466 224h8v8h-8z"/><path fill="#ff003f" d="M1370 184h8v8h-8zM1434 208h8v8h-8zM1474 224h8v8h-8z"/><path fill="#ff003c" d="M1378 184h8v8h-8zM1402 192h8v8h-8zM1466 216h8v8h-8z"/><path fill="#ff0037" d="M1394 184h8v8h-8zM1418 192h8v8h-8zM1442 200h8v8h-8z"/><path fill="#00c7ff" d="M962 192h8v8h-8z"/><path fill="#00c3ff" d="M970 192h8v8h-8z"/><path fill="#00bfff" d="M978 192h8v8h-8z"/><path fill="#00abff" d="M1018 192h8v8h-8z"/><path fill="#00a7ff" d="M1026 192h8v8h-8z"/><path fill="#00a3ff" d="M1034 192h8v8h-8zM962 208h8v8h-8z"/><path fill="#009fff" d="M1042 192h8v8h-8z"/><path fill="#009bff" d="M1050 192h8v8h-8z"/><path fill="#0097ff" d="M1058 192h8v8h-8z"/><path fill="#0093ff" d="M1066 192h8v8h-8z"/><path fill="#008fff" d="M1074 192h8v8h-8z"/><path fill="#028bff" d="M1082 192h8v8h-8z"/><path fill="#0b86ff" d="M1090 192h8v8h-8z"/><path fill="#1682ff" d="M1098 192h8v8h-8z"/><path fill="#227eff" d="M1106 192h8v8h-8z"/><path fill="#307aff" d="M1114 192h8v8h-8z"/><path fill="#3f75ff" d="M1122 192h8v8h-8z"/><path fill="#4e71ff" d="M1130 192h8v8h-8z"/><path fill="#5f6dff" d="M1138 192h8v8h-8z"/><path fill="#7068ff" d="M1146 192h8v8h-8z"/><path fill="#8364ff" d="M1154 192h8v8h-8z"/><path fill="#965fff" d="M1162 192h8v8h-8z"/><path fill="#a95bff" d="M1170 192h8v8h-8z"/><path fill="#be56ff" d="M1178 192h8v8h-8z"/><path fill="#d352ff" d="M1186 192h8v8h-8z"/><path fill="#e94dff" d="M1194 192h8v8h-8z"/><path fill="#ff49fe" d="M1202 192h8v8h-8z"/><path fill="#ff3ee9" d="M1210 192h8v8h-8z"/><path fill="#ff36d6" d="M1218 192h8v8h-8z"/><path fill="#ff2ec6" d="M1226 192h8v8h-8z"/><path fill="#ff27b8" d="M1234 192h8v8h-8z"/><path fill="#ff22ab" d="M1242 192h8v8h-8z"/><path fill="#ff1d9f" d="M1250 192h8v8h-8z"/><path fill="#ff1895" d="M1258 192h8v8h-8z"/><path fill="#ff148c" d="M1266 192h8v8h-8z"/><path fill="#ff1184" d="M1274 192h8v8h-8z"/><path fill="#ff0e7c" d="M1282 192h8v8h-8z"/><path fill="#ff0b75" d="M1290 192h8v8h-8z"/><path fill="#ff086f" d="M1298 192h8v8h-8z"/><path fill="#ff0669" d="M1306 192h8v8h-8z"/><path fill="#ff0463" d="M1314 192h8v8h-8z"/><path fill="#ff035e" d="M1322 192h8v8h-8z"/><path fill="#ff015a" d="M1330 192h8v8h-8z"/><path fill="#ff0055" d="M1338 192h8v8h-8zM1410 224h8v8h-8z"/><path fill="#ff0051" d="M1346 192h8v8h-8zM1402 216h8v8h-8zM1458 240h8v8h-8zM1474 248h8v8h-8z"/><path fill="#ff004e" d="M1354 192h8v8h-8zM1410 216h8v8h-8zM1466 240h8v8h-8z"/><path fill="#ff004a" d="M1362 192h8v8h-8zM1402 208h8v8h-8zM1458 232h8v8h-8z"/><path fill="#ff0047" d="M1370 192h8v8h-8zM1410 208h8v8h-8zM1450 224h8v8h-8z"/><path fill="#ff0044" d="M1378 192h8v8h-8zM1418 208h8v8h-8zM1458 224h8v8h-8z"/><path fill="#ff0041" d="M1386 192h8v8h-8zM1426 208h8v8h-8zM1490 232h8v8h-8z"/><path fill="#ff003e" d="M1394 192h8v8h-8zM1458 216h8v8h-8z"/><path fill="#ff0039" d="M1410 192h8v8h-8zM1434 200h8v8h-8zM1498 224h8v8h-8z"/><path fill="#00b4ff" d="M962 200h8v8h-8z"/><path fill="#00b0ff" d="M970 200h8v8h-8z"/><path fill="#00acff" d="M978 200h8v8h-8z"/><path fill="#00a9ff" d="M986 200h8v8h-8z"/><path fill="#00a5ff" d="M994 200h8v8h-8z"/><path fill="#009eff" d="M1010 200h8v8h-8z"/><path fill="#009aff" d="M1018 200h8v8h-8z"/><path fill="#0096ff" d="M1026 200h8v8h-8z"/><path fill="#0092ff" d="M1034 200h8v8h-8zM1002 208h8v8h-8z"/><path fill="#008eff" d="M1042 200h8v8h-8zM1010 208h8v8h-8zM978 216h8v8h-8z"/><path fill="#008bff" d="M1050 200h8v8h-8z"/><path fill="#0087ff" d="M1058 200h8v8h-8zM1026 208h8v8h-8zM994 216h8v8h-8z"/><path fill="#0083ff" d="M1066 200h8v8h-8zM1034 208h8v8h-8z"/><path fill="#007fff" d="M1074 200h8v8h-8z"/><path fill="#007bff" d="M1082 200h8v8h-8zM994 224h8v8h-8z"/><path fill="#0877ff" d="M1090 200h8v8h-8z"/><path fill="#1273ff" d="M1098 200h8v8h-8z"/><path fill="#1d6fff" d="M1106 200h8v8h-8z"/><path fill="#296bff" d="M1114 200h8v8h-8z"/><path fill="#3767ff" d="M1122 200h8v8h-8z"/><path fill="#4563ff" d="M1130 200h8v8h-8z"/><path fill="#545fff" d="M1138 200h8v8h-8z"/><path fill="#645bff" d="M1146 200h8v8h-8z"/><path fill="#7556ff" d="M1154 200h8v8h-8z"/><path fill="#8652ff" d="M1162 200h8v8h-8z"/><path fill="#984eff" d="M1170 200h8v8h-8z"/><path fill="#ab4aff" d="M1178 200h8v8h-8z"/><path fill="#be46ff" d="M1186 200h8v8h-8z"/><path fill="#d242ff" d="M1194 200h8v8h-8z"/><path fill="#e73eff" d="M1202 200h8v8h-8z"/><path fill="#fc39ff" d="M1210 200h8v8h-8z"/><path fill="#ff32ee" d="M1218 200h8v8h-8z"/><path fill="#ff2adb" d="M1226 200h8v8h-8z"/><path fill="#ff24cb" d="M1234 200h8v8h-8z"/><path fill="#ff1ebd" d="M1242 200h8v8h-8z"/><path fill="#ff19b1" d="M1250 200h8v8h-8z"/><path fill="#ff15a5" d="M1258 200h8v8h-8z"/><path fill="#ff119b" d="M1266 200h8v8h-8z"/><path fill="#ff0e92" d="M1274 200h8v8h-8z"/><path fill="#ff0b89" d="M1282 200h8v8h-8z"/><path fill="#ff0982" d="M1290 200h8v8h-8z"/><path fill="#ff067b" d="M1298 200h8v8h-8z"/><path fill="#ff0474" d="M1306 200h8v8h-8z"/><path fill="#ff036e" d="M1314 200h8v8h-8z"/><path fill="#ff0169" d="M1322 200h8v8h-8z"/><path fill="#ff0063" d="M1330 200h8v8h-8z"/><path fill="#ff005f" d="M1338 200h8v8h-8zM1354 208h8v8h-8z"/><path fill="#ff005a" d="M1346 200h8v8h-8zM1434 240h8v8h-8zM1450 248h8v8h-8z"/><path fill="#ff0056" d="M1354 200h8v8h-8zM1426 232h8v8h-8zM1442 240h8v8h-8z"/><path fill="#ff0052" d="M1362 200h8v8h-8zM1418 224h8v8h-8z"/><path fill="#ff004f" d="M1370 200h8v8h-8zM1426 224h8v8h-8z"/><path fill="#ff004b" d="M1378 200h8v8h-8zM1418 216h8v8h-8zM1474 240h8v8h-8z"/><path fill="#ff0048" d="M1386 200h8v8h-8zM1426 216h8v8h-8zM1466 232h8v8h-8z"/><path fill="#ff0040" d="M1410 200h8v8h-8zM1450 216h8v8h-8z"/><path fill="#ff003d" d="M1418 200h8v8h-8zM1442 208h8v8h-8zM1482 224h8v8h-8z"/><path fill="#ff003b" d="M1426 200h8v8h-8zM1490 224h8v8h-8z"/><path fill="#00a0ff" d="M970 208h8v8h-8z"/><path fill="#009cff" d="M978 208h8v8h-8z"/><path fill="#0099ff" d="M986 208h8v8h-8z"/><path fill="#0095ff" d="M994 208h8v8h-8z"/><path fill="#008aff" d="M1018 208h8v8h-8zM986 216h8v8h-8z"/><path fill="#0080ff" d="M1042 208h8v8h-8zM1010 216h8v8h-8z"/><path fill="#007cff" d="M1050 208h8v8h-8z"/><path fill="#0078ff" d="M1058 208h8v8h-8zM970 232h8v8h-8z"/><path fill="#0075ff" d="M1066 208h8v8h-8zM978 232h8v8h-8z"/><path fill="#0071ff" d="M1074 208h8v8h-8zM1018 224h8v8h-8z"/><path fill="#006dff" d="M1082 208h8v8h-8z"/><path fill="#0569ff" d="M1090 208h8v8h-8z"/><path fill="#0e66ff" d="M1098 208h8v8h-8z"/><path fill="#1862ff" d="M1106 208h8v8h-8z"/><path fill="#245eff" d="M1114 208h8v8h-8z"/><path fill="#305aff" d="M1122 208h8v8h-8z"/><path fill="#3d57ff" d="M1130 208h8v8h-8z"/><path fill="#4b53ff" d="M1138 208h8v8h-8z"/><path fill="#594fff" d="M1146 208h8v8h-8z"/><path fill="#694bff" d="M1154 208h8v8h-8z"/><path fill="#7847ff" d="M1162 208h8v8h-8z"/><path fill="#8943ff" d="M1170 208h8v8h-8z"/><path fill="#9a40ff" d="M1178 208h8v8h-8z"/><path fill="#ac3cff" d="M1186 208h8v8h-8z"/><path fill="#be38ff" d="M1194 208h8v8h-8z"/><path fill="#d134ff" d="M1202 208h8v8h-8z"/><path fill="#e430ff" d="M1210 208h8v8h-8z"/><path fill="#f82cff" d="M1218 208h8v8h-8z"/><path fill="#ff26f2" d="M1226 208h8v8h-8z"/><path fill="#ff20e0" d="M1234 208h8v8h-8z"/><path fill="#ff1bd0" d="M1242 208h8v8h-8z"/><path fill="#ff16c2" d="M1250 208h8v8h-8z"/><path fill="#ff12b6" d="M1258 208h8v8h-8z"/><path fill="#ff0fab" d="M1266 208h8v8h-8z"/><path fill="#ff0ca0" d="M1274 208h8v8h-8z"/><path fill="#ff0997" d="M1282 208h8v8h-8z"/><path fill="#ff078f" d="M1290 208h8v8h-8z"/><path fill="#ff0587" d="M1298 208h8v8h-8z"/><path fill="#ff0380" d="M1306 208h8v8h-8z"/><path fill="#ff0179" d="M1314 208h8v8h-8z"/><path fill="#ff0073" d="M1322 208h8v8h-8zM1338 216h8v8h-8zM1442 272h8v8h-8z"/><path fill="#ff006e" d="M1330 208h8v8h-8z"/><path fill="#ff0068" d="M1338 208h8v8h-8zM1354 216h8v8h-8zM1370 224h8v8h-8zM1386 232h8v8h-8zM1402 240h8v8h-8zM1418 248h8v8h-8zM1434 256h8v8h-8zM1450 264h8v8h-8z"/><path fill="#ff0064" d="M1346 208h8v8h-8zM1362 216h8v8h-8zM1378 224h8v8h-8zM1394 232h8v8h-8zM1410 240h8v8h-8zM1426 248h8v8h-8zM1442 256h8v8h-8z"/><path fill="#ff005b" d="M1362 208h8v8h-8zM1466 256h8v8h-8z"/><path fill="#ff0057" d="M1370 208h8v8h-8zM1458 248h8v8h-8z"/><path fill="#ff0053" d="M1378 208h8v8h-8zM1434 232h8v8h-8zM1450 240h8v8h-8z"/><path fill="#ff0050" d="M1386 208h8v8h-8zM1442 232h8v8h-8z"/><path fill="#ff004d" d="M1394 208h8v8h-8zM1450 232h8v8h-8z"/><path fill="#ff0036" d="M1466 208h8v8h-8zM1490 216h8v8h-8z"/><path fill="#ff0034" d="M1474 208h8v8h-8zM1498 216h8v8h-8z"/><path fill="#0094ff" d="M962 216h8v8h-8z"/><path fill="#0091ff" d="M970 216h8v8h-8z"/><path fill="#0084ff" d="M1002 216h8v8h-8zM970 224h8v8h-8z"/><path fill="#007dff" d="M1018 216h8v8h-8z"/><path fill="#007aff" d="M1026 216h8v8h-8z"/><path fill="#0076ff" d="M1034 216h8v8h-8z"/><path fill="#0073ff" d="M1042 216h8v8h-8z"/><path fill="#006fff" d="M1050 216h8v8h-8zM994 232h8v8h-8z"/><path fill="#006cff" d="M1058 216h8v8h-8zM1002 232h8v8h-8z"/><path fill="#0068ff" d="M1066 216h8v8h-8zM986 240h8v8h-8z"/><path fill="#0065ff" d="M1074 216h8v8h-8zM994 240h8v8h-8z"/><path fill="#0061ff" d="M1082 216h8v8h-8zM1058 224h8v8h-8z"/><path fill="#035eff" d="M1090 216h8v8h-8z"/><path fill="#0b5aff" d="M1098 216h8v8h-8z"/><path fill="#1457ff" d="M1106 216h8v8h-8z"/><path fill="#1f53ff" d="M1114 216h8v8h-8z"/><path fill="#2a50ff" d="M1122 216h8v8h-8z"/><path fill="#364cff" d="M1130 216h8v8h-8z"/><path fill="#4348ff" d="M1138 216h8v8h-8z"/><path fill="#5045ff" d="M1146 216h8v8h-8z"/><path fill="#5e41ff" d="M1154 216h8v8h-8z"/><path fill="#6d3eff" d="M1162 216h8v8h-8z"/><path fill="#7c3aff" d="M1170 216h8v8h-8z"/><path fill="#8c37ff" d="M1178 216h8v8h-8z"/><path fill="#9c33ff" d="M1186 216h8v8h-8z"/><path fill="#ad2fff" d="M1194 216h8v8h-8z"/><path fill="#be2cff" d="M1202 216h8v8h-8z"/><path fill="#d028ff" d="M1210 216h8v8h-8z"/><path fill="#e225ff" d="M1218 216h8v8h-8z"/><path fill="#f521ff" d="M1226 216h8v8h-8z"/><path fill="#ff1df6" d="M1234 216h8v8h-8z"/><path fill="#ff18e4" d="M1242 216h8v8h-8z"/><path fill="#ff13d5" d="M1250 216h8v8h-8z"/><path fill="#ff0fc7" d="M1258 216h8v8h-8z"/><path fill="#ff0cbb" d="M1266 216h8v8h-8z"/><path fill="#ff09b0" d="M1274 216h8v8h-8z"/><path fill="#ff07a6" d="M1282 216h8v8h-8z"/><path fill="#ff059c" d="M1290 216h8v8h-8z"/><path fill="#ff0394" d="M1298 216h8v8h-8z"/><path fill="#ff018c" d="M1306 216h8v8h-8z"/><path fill="#ff0085" d="M1314 216h8v8h-8zM1410 272h8v8h-8z"/><path fill="#ff007e" d="M1322 216h8v8h-8zM1394 256h8v8h-8z"/><path fill="#ff0078" d="M1330 216h8v8h-8zM1418 264h8v8h-8z"/><path fill="#ff006d" d="M1346 216h8v8h-8zM1362 224h8v8h-8zM1378 232h8v8h-8z"/><path fill="#ff0060" d="M1370 216h8v8h-8zM1386 224h8v8h-8zM1402 232h8v8h-8zM1418 240h8v8h-8z"/><path fill="#ff005c" d="M1378 216h8v8h-8zM1394 224h8v8h-8z"/><path fill="#ff0058" d="M1386 216h8v8h-8zM1402 224h8v8h-8zM1474 256h8v8h-8z"/><path fill="#ff0054" d="M1394 216h8v8h-8zM1466 248h8v8h-8z"/><path fill="#ff0043" d="M1442 216h8v8h-8zM1482 232h8v8h-8z"/><path fill="#0081ff" d="M978 224h8v8h-8z"/><path fill="#007eff" d="M986 224h8v8h-8z"/><path fill="#0077ff" d="M1002 224h8v8h-8z"/><path fill="#0074ff" d="M1010 224h8v8h-8z"/><path fill="#006eff" d="M1026 224h8v8h-8zM970 240h8v8h-8z"/><path fill="#006aff" d="M1034 224h8v8h-8z"/><path fill="#0067ff" d="M1042 224h8v8h-8z"/><path fill="#0064ff" d="M1050 224h8v8h-8z"/><path fill="#005dff" d="M1066 224h8v8h-8zM1042 232h8v8h-8zM1018 240h8v8h-8zM994 248h8v8h-8z"/><path fill="#005aff" d="M1074 224h8v8h-8zM1050 232h8v8h-8zM1026 240h8v8h-8zM1002 248h8v8h-8zM978 256h8v8h-8z"/><path fill="#0057ff" d="M1082 224h8v8h-8zM1058 232h8v8h-8zM1034 240h8v8h-8zM1010 248h8v8h-8zM986 256h8v8h-8z"/><path fill="#0253ff" d="M1090 224h8v8h-8z"/><path fill="#0950ff" d="M1098 224h8v8h-8z"/><path fill="#114dff" d="M1106 224h8v8h-8z"/><path fill="#1a49ff" d="M1114 224h8v8h-8z"/><path fill="#2546ff" d="M1122 224h8v8h-8z"/><path fill="#3043ff" d="M1130 224h8v8h-8z"/><path fill="#3c3fff" d="M1138 224h8v8h-8z"/><path fill="#483cff" d="M1146 224h8v8h-8z"/><path fill="#5539ff" d="M1154 224h8v8h-8z"/><path fill="#6235ff" d="M1162 224h8v8h-8z"/><path fill="#7032ff" d="M1170 224h8v8h-8z"/><path fill="#7f2fff" d="M1178 224h8v8h-8z"/><path fill="#8e2bff" d="M1186 224h8v8h-8z"/><path fill="#9e28ff" d="M1194 224h8v8h-8z"/><path fill="#ae25ff" d="M1202 224h8v8h-8z"/><path fill="#be22ff" d="M1210 224h8v8h-8z"/><path fill="#cf1eff" d="M1218 224h8v8h-8z"/><path fill="#e11bff" d="M1226 224h8v8h-8z"/><path fill="#f218ff" d="M1234 224h8v8h-8z"/><path fill="#ff14f9" d="M1242 224h8v8h-8z"/><path fill="#ff10e8" d="M1250 224h8v8h-8z"/><path fill="#ff0dd9" d="M1258 224h8v8h-8z"/><path fill="#ff0acc" d="M1266 224h8v8h-8z"/><path fill="#ff07c0" d="M1274 224h8v8h-8z"/><path fill="#ff05b4" d="M1282 224h8v8h-8z"/><path fill="#ff03aa" d="M1290 224h8v8h-8z"/><path fill="#ff01a1" d="M1298 224h8v8h-8z"/><path fill="#ff0099" d="M1306 224h8v8h-8zM1394 280h8v8h-8z"/><path fill="#ff0091" d="M1314 224h8v8h-8z"/><path fill="#ff008a" d="M1322 224h8v8h-8zM1362 248h8v8h-8zM1402 272h8v8h-8z"/><path fill="#ff0083" d="M1330 224h8v8h-8zM1386 256h8v8h-8zM1442 288h8v8h-8z"/><path fill="#ff007d" d="M1338 224h8v8h-8zM1410 264h8v8h-8z"/><path fill="#ff0077" d="M1346 224h8v8h-8zM1434 272h8v8h-8zM1450 280h8v8h-8z"/><path fill="#ff0072" d="M1354 224h8v8h-8z"/><path fill="#ff004c" d="M1434 224h8v8h-8z"/><path fill="#ff0049" d="M1442 224h8v8h-8zM1482 240h8v8h-8z"/><path fill="#0072ff" d="M986 232h8v8h-8z"/><path fill="#0069ff" d="M1010 232h8v8h-8z"/><path fill="#0066ff" d="M1018 232h8v8h-8z"/><path fill="#0063ff" d="M1026 232h8v8h-8zM1002 240h8v8h-8z"/><path fill="#0060ff" d="M1034 232h8v8h-8zM1010 240h8v8h-8z"/><path fill="#0054ff" d="M1066 232h8v8h-8zM1042 240h8v8h-8zM1018 248h8v8h-8zM994 256h8v8h-8z"/><path fill="#0051ff" d="M1074 232h8v8h-8zM1050 240h8v8h-8zM1026 248h8v8h-8z"/><path fill="#004eff" d="M1082 232h8v8h-8zM1058 240h8v8h-8z"/><path fill="#004aff" d="M1090 232h8v8h-8zM1026 256h8v8h-8z"/><path fill="#0647ff" d="M1098 232h8v8h-8z"/><path fill="#0e44ff" d="M1106 232h8v8h-8z"/><path fill="#1741ff" d="M1114 232h8v8h-8z"/><path fill="#203eff" d="M1122 232h8v8h-8z"/><path fill="#2a3bff" d="M1130 232h8v8h-8z"/><path fill="#3538ff" d="M1138 232h8v8h-8z"/><path fill="#4134ff" d="M1146 232h8v8h-8z"/><path fill="#4d31ff" d="M1154 232h8v8h-8z"/><path fill="#592eff" d="M1162 232h8v8h-8z"/><path fill="#662bff" d="M1170 232h8v8h-8z"/><path fill="#7428ff" d="M1178 232h8v8h-8z"/><path fill="#8225ff" d="M1186 232h8v8h-8z"/><path fill="#9022ff" d="M1194 232h8v8h-8z"/><path fill="#9f1fff" d="M1202 232h8v8h-8z"/><path fill="#ae1cff" d="M1210 232h8v8h-8z"/><path fill="#be19ff" d="M1218 232h8v8h-8z"/><path fill="#ce16ff" d="M1226 232h8v8h-8z"/><path fill="#df13ff" d="M1234 232h8v8h-8z"/><path fill="#f010ff" d="M1242 232h8v8h-8z"/><path fill="#ff0dfd" d="M1250 232h8v8h-8z"/><path fill="#ff0aec" d="M1258 232h8v8h-8z"/><path fill="#ff07dd" d="M1266 232h8v8h-8z"/><path fill="#ff05d0" d="M1274 232h8v8h-8z"/><path fill="#ff03c4" d="M1282 232h8v8h-8z"/><path fill="#ff01b9" d="M1290 232h8v8h-8z"/><path fill="#ff00af" d="M1298 232h8v8h-8z"/><path fill="#ff00a6" d="M1306 232h8v8h-8zM1330 248h8v8h-8zM1354 264h8v8h-8zM1378 280h8v8h-8z"/><path fill="#ff009d" d="M1314 232h8v8h-8zM1402 288h8v8h-8z"/><path fill="#ff0096" d="M1322 232h8v8h-8zM1386 272h8v8h-8z"/><path fill="#ff008e" d="M1330 232h8v8h-8zM1370 256h8v8h-8zM1410 280h8v8h-8z"/><path fill="#ff0088" d="M1338 232h8v8h-8zM1378 256h8v8h-8z"/><path fill="#ff0082" d="M1346 232h8v8h-8zM1402 264h8v8h-8z"/><path fill="#ff007c" d="M1354 232h8v8h-8zM1426 272h8v8h-8z"/><path fill="#ff0076" d="M1362 232h8v8h-8zM1378 240h8v8h-8z"/><path fill="#ff0071" d="M1370 232h8v8h-8zM1386 240h8v8h-8z"/><path fill="#ff005d" d="M1410 232h8v8h-8zM1426 240h8v8h-8zM1442 248h8v8h-8z"/><path fill="#ff0059" d="M1418 232h8v8h-8z"/><path fill="#006bff" d="M978 240h8v8h-8z"/><path fill="#004bff" d="M1066 240h8v8h-8zM1002 264h8v8h-8z"/><path fill="#0048ff" d="M1074 240h8v8h-8zM1010 264h8v8h-8z"/><path fill="#0045ff" d="M1082 240h8v8h-8zM1042 256h8v8h-8z"/><path fill="#0042ff" d="M1090 240h8v8h-8zM1050 256h8v8h-8zM1010 272h8v8h-8z"/><path fill="#043fff" d="M1098 240h8v8h-8z"/><path fill="#0b3cff" d="M1106 240h8v8h-8z"/><path fill="#1339ff" d="M1114 240h8v8h-8z"/><path fill="#1c36ff" d="M1122 240h8v8h-8z"/><path fill="#2634ff" d="M1130 240h8v8h-8z"/><path fill="#3031ff" d="M1138 240h8v8h-8z"/><path fill="#3a2eff" d="M1146 240h8v8h-8z"/><path fill="#462bff" d="M1154 240h8v8h-8z"/><path fill="#5128ff" d="M1162 240h8v8h-8z"/><path fill="#5d25ff" d="M1170 240h8v8h-8z"/><path fill="#6a22ff" d="M1178 240h8v8h-8z"/><path fill="#771fff" d="M1186 240h8v8h-8z"/><path fill="#841cff" d="M1194 240h8v8h-8z"/><path fill="#921aff" d="M1202 240h8v8h-8z"/><path fill="#a017ff" d="M1210 240h8v8h-8z"/><path fill="#af14ff" d="M1218 240h8v8h-8z"/><path fill="#be11ff" d="M1226 240h8v8h-8z"/><path fill="#ce0fff" d="M1234 240h8v8h-8z"/><path fill="#dd0cff" d="M1242 240h8v8h-8z"/><path fill="#ee0aff" d="M1250 240h8v8h-8z"/><path fill="#fe07ff" d="M1258 240h8v8h-8z"/><path fill="#ff05f0" d="M1266 240h8v8h-8z"/><path fill="#ff03e1" d="M1274 240h8v8h-8z"/><path fill="#ff01d4" d="M1282 240h8v8h-8z"/><path fill="#ff00c8" d="M1290 240h8v8h-8z"/><path fill="#ff00bd" d="M1298 240h8v8h-8zM1354 280h8v8h-8zM1410 320h8v8h-8z"/><path fill="#ff00b3" d="M1306 240h8v8h-8zM1410 312h8v8h-8z"/><path fill="#ff00aa" d="M1314 240h8v8h-8zM1338 256h8v8h-8zM1362 272h8v8h-8zM1386 288h8v8h-8zM1410 304h8v8h-8z"/><path fill="#ff00a2" d="M1322 240h8v8h-8zM1346 256h8v8h-8z"/><path fill="#ff009a" d="M1330 240h8v8h-8zM1418 296h8v8h-8z"/><path fill="#ff0093" d="M1338 240h8v8h-8z"/><path fill="#ff008c" d="M1346 240h8v8h-8zM1386 264h8v8h-8zM1426 288h8v8h-8z"/><path fill="#ff0086" d="M1354 240h8v8h-8z"/><path fill="#ff0080" d="M1362 240h8v8h-8zM1418 272h8v8h-8z"/><path fill="#ff007b" d="M1370 240h8v8h-8zM1442 280h8v8h-8z"/><path fill="#ff006c" d="M1394 240h8v8h-8zM1410 248h8v8h-8zM1426 256h8v8h-8zM1442 264h8v8h-8zM1458 272h8v8h-8z"/><path fill="#0062ff" d="M978 248h8v8h-8z"/><path fill="#005fff" d="M986 248h8v8h-8z"/><path fill="#004fff" d="M1034 248h8v8h-8zM1010 256h8v8h-8z"/><path fill="#004cff" d="M1042 248h8v8h-8z"/><path fill="#0049ff" d="M1050 248h8v8h-8zM986 272h8v8h-8z"/><path fill="#0046ff" d="M1058 248h8v8h-8zM1018 264h8v8h-8zM994 272h8v8h-8z"/><path fill="#0044ff" d="M1066 248h8v8h-8zM1002 272h8v8h-8z"/><path fill="#0041ff" d="M1074 248h8v8h-8zM1034 264h8v8h-8z"/><path fill="#003eff" d="M1082 248h8v8h-8zM1042 264h8v8h-8zM1002 280h8v8h-8z"/><path fill="#003bff" d="M1090 248h8v8h-8zM1050 264h8v8h-8z"/><path fill="#0338ff" d="M1098 248h8v8h-8z"/><path fill="#0936ff" d="M1106 248h8v8h-8z"/><path fill="#1033ff" d="M1114 248h8v8h-8z"/><path fill="#1930ff" d="M1122 248h8v8h-8z"/><path fill="#212dff" d="M1130 248h8v8h-8z"/><path fill="#2b2aff" d="M1138 248h8v8h-8z"/><path fill="#3528ff" d="M1146 248h8v8h-8z"/><path fill="#3f25ff" d="M1154 248h8v8h-8z"/><path fill="#4a22ff" d="M1162 248h8v8h-8z"/><path fill="#5520ff" d="M1170 248h8v8h-8z"/><path fill="#611dff" d="M1178 248h8v8h-8z"/><path fill="#6d1aff" d="M1186 248h8v8h-8z"/><path fill="#7a18ff" d="M1194 248h8v8h-8z"/><path fill="#8715ff" d="M1202 248h8v8h-8z"/><path fill="#9412ff" d="M1210 248h8v8h-8z"/><path fill="#a210ff" d="M1218 248h8v8h-8z"/><path fill="#b00dff" d="M1226 248h8v8h-8z"/><path fill="#be0bff" d="M1234 248h8v8h-8z"/><path fill="#cd09ff" d="M1242 248h8v8h-8z"/><path fill="#dc06ff" d="M1250 248h8v8h-8z"/><path fill="#ec04ff" d="M1258 248h8v8h-8z"/><path fill="#fb02ff" d="M1266 248h8v8h-8z"/><path fill="#ff01f3" d="M1274 248h8v8h-8z"/><path fill="#ff00e5" d="M1282 248h8v8h-8zM1322 280h8v8h-8zM1362 312h8v8h-8z"/><path fill="#ff00d8" d="M1290 248h8v8h-8zM1394 328h8v8h-8z"/><path fill="#ff00cc" d="M1298 248h8v8h-8zM1330 272h8v8h-8z"/><path fill="#ff00c1" d="M1306 248h8v8h-8zM1362 288h8v8h-8z"/><path fill="#ff00b8" d="M1314 248h8v8h-8z"/><path fill="#ff00ae" d="M1322 248h8v8h-8zM1346 264h8v8h-8zM1370 280h8v8h-8z"/><path fill="#ff009e" d="M1338 248h8v8h-8zM1426 304h8v8h-8z"/><path fill="#ff0097" d="M1346 248h8v8h-8zM1410 288h8v8h-8z"/><path fill="#ff0090" d="M1354 248h8v8h-8zM1394 272h8v8h-8zM1434 296h8v8h-8z"/><path fill="#ff0084" d="M1370 248h8v8h-8zM1426 280h8v8h-8z"/><path fill="#ff007f" d="M1378 248h8v8h-8zM1434 280h8v8h-8z"/><path fill="#ff007a" d="M1386 248h8v8h-8z"/><path fill="#ff0075" d="M1394 248h8v8h-8z"/><path fill="#ff0070" d="M1402 248h8v8h-8zM1418 256h8v8h-8zM1434 264h8v8h-8z"/><path fill="#ff0061" d="M1434 248h8v8h-8zM1450 256h8v8h-8zM1466 264h8v8h-8z"/><path fill="#0052ff" d="M1002 256h8v8h-8z"/><path fill="#004dff" d="M1018 256h8v8h-8zM994 264h8v8h-8z"/><path fill="#0047ff" d="M1034 256h8v8h-8z"/><path fill="#003fff" d="M1058 256h8v8h-8zM1018 272h8v8h-8z"/><path fill="#003dff" d="M1066 256h8v8h-8zM1026 272h8v8h-8z"/><path fill="#003aff" d="M1074 256h8v8h-8zM1034 272h8v8h-8z"/><path fill="#0037ff" d="M1082 256h8v8h-8zM1026 280h8v8h-8z"/><path fill="#0035ff" d="M1090 256h8v8h-8zM1034 280h8v8h-8z"/><path fill="#0232ff" d="M1098 256h8v8h-8z"/><path fill="#072fff" d="M1106 256h8v8h-8z"/><path fill="#0e2dff" d="M1114 256h8v8h-8z"/><path fill="#152aff" d="M1122 256h8v8h-8z"/><path fill="#1e28ff" d="M1130 256h8v8h-8z"/><path fill="#2625ff" d="M1138 256h8v8h-8z"/><path fill="#3022ff" d="M1146 256h8v8h-8z"/><path fill="#3920ff" d="M1154 256h8v8h-8z"/><path fill="#441dff" d="M1162 256h8v8h-8z"/><path fill="#4e1bff" d="M1170 256h8v8h-8z"/><path fill="#5918ff" d="M1178 256h8v8h-8z"/><path fill="#6516ff" d="M1186 256h8v8h-8z"/><path fill="#7013ff" d="M1194 256h8v8h-8z"/><path fill="#7c11ff" d="M1202 256h8v8h-8z"/><path fill="#890fff" d="M1210 256h8v8h-8z"/><path fill="#960cff" d="M1218 256h8v8h-8z"/><path fill="#a30aff" d="M1226 256h8v8h-8z"/><path fill="#b008ff" d="M1234 256h8v8h-8z"/><path fill="#be06ff" d="M1242 256h8v8h-8z"/><path fill="#cc04ff" d="M1250 256h8v8h-8z"/><path fill="#db02ff" d="M1258 256h8v8h-8z"/><path fill="#ea01ff" d="M1266 256h8v8h-8z"/><path fill="#f900ff" d="M1274 256h8v8h-8zM1330 304h8v8h-8z"/><path fill="#ff00f6" d="M1282 256h8v8h-8zM1330 296h8v8h-8zM1378 336h8v8h-8z"/><path fill="#ff00e8" d="M1290 256h8v8h-8zM1330 288h8v8h-8zM1370 320h8v8h-8z"/><path fill="#ff00db" d="M1298 256h8v8h-8zM1370 312h8v8h-8z"/><path fill="#ff00d0" d="M1306 256h8v8h-8zM1338 280h8v8h-8zM1370 304h8v8h-8z"/><path fill="#ff00c5" d="M1314 256h8v8h-8zM1402 320h8v8h-8z"/><path fill="#ff00bb" d="M1322 256h8v8h-8z"/><path fill="#ff00b2" d="M1330 256h8v8h-8zM1354 272h8v8h-8z"/><path fill="#ff009b" d="M1354 256h8v8h-8z"/><path fill="#ff0094" d="M1362 256h8v8h-8zM1402 280h8v8h-8z"/><path fill="#ff0079" d="M1402 256h8v8h-8z"/><path fill="#ff0074" d="M1410 256h8v8h-8zM1426 264h8v8h-8z"/><path fill="#ff005e" d="M1458 256h8v8h-8z"/><path fill="#0050ff" d="M986 264h8v8h-8z"/><path fill="#0043ff" d="M1026 264h8v8h-8z"/><path fill="#0039ff" d="M1058 264h8v8h-8zM1018 280h8v8h-8zM1002 288h8v8h-8z"/><path fill="#0036ff" d="M1066 264h8v8h-8zM1050 272h8v8h-8zM1010 288h8v8h-8z"/><path fill="#0034ff" d="M1074 264h8v8h-8zM1018 288h8v8h-8zM1002 296h8v8h-8z"/><path fill="#0031ff" d="M1082 264h8v8h-8zM1066 272h8v8h-8z"/><path fill="#002fff" d="M1090 264h8v8h-8zM1018 296h8v8h-8z"/><path fill="#012cff" d="M1098 264h8v8h-8z"/><path fill="#052aff" d="M1106 264h8v8h-8z"/><path fill="#0c27ff" d="M1114 264h8v8h-8z"/><path fill="#1325ff" d="M1122 264h8v8h-8z"/><path fill="#1a23ff" d="M1130 264h8v8h-8z"/><path fill="#2220ff" d="M1138 264h8v8h-8z"/><path fill="#2b1eff" d="M1146 264h8v8h-8z"/><path fill="#341bff" d="M1154 264h8v8h-8z"/><path fill="#3e19ff" d="M1162 264h8v8h-8z"/><path fill="#4817ff" d="M1170 264h8v8h-8z"/><path fill="#5214ff" d="M1178 264h8v8h-8z"/><path fill="#5d12ff" d="M1186 264h8v8h-8z"/><path fill="#6810ff" d="M1194 264h8v8h-8z"/><path fill="#730dff" d="M1202 264h8v8h-8z"/><path fill="#7f0bff" d="M1210 264h8v8h-8z"/><path fill="#8b09ff" d="M1218 264h8v8h-8z"/><path fill="#9707ff" d="M1226 264h8v8h-8z"/><path fill="#a405ff" d="M1234 264h8v8h-8z"/><path fill="#b103ff" d="M1242 264h8v8h-8z"/><path fill="#be02ff" d="M1250 264h8v8h-8z"/><path fill="#cc00ff" d="M1258 264h8v8h-8z"/><path fill="#da00ff" d="M1266 264h8v8h-8z"/><path fill="#e800ff" d="M1274 264h8v8h-8z"/><path fill="#f600ff" d="M1282 264h8v8h-8z"/><path fill="#ff00f9" d="M1290 264h8v8h-8zM1338 304h8v8h-8z"/><path fill="#ff00eb" d="M1298 264h8v8h-8zM1338 296h8v8h-8z"/><path fill="#ff00df" d="M1306 264h8v8h-8z"/><path fill="#ff00d3" d="M1314 264h8v8h-8zM1346 288h8v8h-8z"/><path fill="#ff00c9" d="M1322 264h8v8h-8zM1354 288h8v8h-8z"/><path fill="#ff00bf" d="M1330 264h8v8h-8zM1386 304h8v8h-8z"/><path fill="#ff00b6" d="M1338 264h8v8h-8z"/><path fill="#ff009f" d="M1362 264h8v8h-8z"/><path fill="#ff0098" d="M1370 264h8v8h-8z"/><path fill="#ff0092" d="M1378 264h8v8h-8zM1418 288h8v8h-8z"/><path fill="#ff0087" d="M1394 264h8v8h-8zM1434 288h8v8h-8z"/><path fill="#ff0065" d="M1458 264h8v8h-8z"/><path fill="#0038ff" d="M1042 272h8v8h-8z"/><path fill="#0033ff" d="M1058 272h8v8h-8zM1042 280h8v8h-8z"/><path fill="#002eff" d="M1074 272h8v8h-8zM1058 280h8v8h-8zM1042 288h8v8h-8z"/><path fill="#002cff" d="M1082 272h8v8h-8zM1066 280h8v8h-8zM1050 288h8v8h-8z"/><path fill="#002aff" d="M1090 272h8v8h-8zM1074 280h8v8h-8z"/><path fill="#0027ff" d="M1098 272h8v8h-8zM1082 280h8v8h-8zM1066 288h8v8h-8zM1050 296h8v8h-8zM1034 304h8v8h-8zM1018 312h8v8h-8z"/><path fill="#0425ff" d="M1106 272h8v8h-8z"/><path fill="#0a23ff" d="M1114 272h8v8h-8z"/><path fill="#1020ff" d="M1122 272h8v8h-8z"/><path fill="#171eff" d="M1130 272h8v8h-8z"/><path fill="#1f1cff" d="M1138 272h8v8h-8z"/><path fill="#2719ff" d="M1146 272h8v8h-8z"/><path fill="#3017ff" d="M1154 272h8v8h-8z"/><path fill="#3915ff" d="M1162 272h8v8h-8z"/><path fill="#4213ff" d="M1170 272h8v8h-8z"/><path fill="#4c11ff" d="M1178 272h8v8h-8z"/><path fill="#560eff" d="M1186 272h8v8h-8z"/><path fill="#600cff" d="M1194 272h8v8h-8z"/><path fill="#6b0aff" d="M1202 272h8v8h-8z"/><path fill="#7608ff" d="M1210 272h8v8h-8z"/><path fill="#8106ff" d="M1218 272h8v8h-8z"/><path fill="#8d05ff" d="M1226 272h8v8h-8z"/><path fill="#9903ff" d="M1234 272h8v8h-8z"/><path fill="#a501ff" d="M1242 272h8v8h-8z"/><path fill="#b100ff" d="M1250 272h8v8h-8z"/><path fill="#be00ff" d="M1258 272h8v8h-8zM1266 280h8v8h-8zM1274 288h8v8h-8zM1282 296h8v8h-8zM1290 304h8v8h-8zM1298 312h8v8h-8zM1306 320h8v8h-8zM1314 328h8v8h-8zM1322 336h8v8h-8zM1330 344h8v8h-8z"/><path fill="#cb00ff" d="M1266 272h8v8h-8zM1274 280h8v8h-8z"/><path fill="#d900ff" d="M1274 272h8v8h-8z"/><path fill="#e600ff" d="M1282 272h8v8h-8zM1362 344h8v8h-8z"/><path fill="#f400ff" d="M1290 272h8v8h-8zM1354 328h8v8h-8z"/><path fill="#ff00fc" d="M1298 272h8v8h-8z"/><path fill="#ff00ee" d="M1306 272h8v8h-8z"/><path fill="#ff00e2" d="M1314 272h8v8h-8z"/><path fill="#ff00d7" d="M1322 272h8v8h-8z"/><path fill="#ff00c3" d="M1338 272h8v8h-8z"/><path fill="#ff00ba" d="M1346 272h8v8h-8zM1402 312h8v8h-8z"/><path fill="#ff00a3" d="M1370 272h8v8h-8zM1394 288h8v8h-8z"/><path fill="#ff009c" d="M1378 272h8v8h-8z"/><path fill="#ff006f" d="M1450 272h8v8h-8z"/><path fill="#0040ff" d="M994 280h8v8h-8z"/><path fill="#003cff" d="M1010 280h8v8h-8z"/><path fill="#0030ff" d="M1050 280h8v8h-8zM1034 288h8v8h-8z"/><path fill="#0025ff" d="M1090 280h8v8h-8zM1074 288h8v8h-8zM1058 296h8v8h-8zM1042 304h8v8h-8zM1026 312h8v8h-8z"/><path fill="#0023ff" d="M1098 280h8v8h-8zM1082 288h8v8h-8zM1066 296h8v8h-8zM1050 304h8v8h-8zM1034 312h8v8h-8zM1018 320h8v8h-8z"/><path fill="#0321ff" d="M1106 280h8v8h-8z"/><path fill="#081eff" d="M1114 280h8v8h-8z"/><path fill="#0e1cff" d="M1122 280h8v8h-8z"/><path fill="#141aff" d="M1130 280h8v8h-8z"/><path fill="#1c18ff" d="M1138 280h8v8h-8z"/><path fill="#2316ff" d="M1146 280h8v8h-8z"/><path fill="#2b14ff" d="M1154 280h8v8h-8z"/><path fill="#3411ff" d="M1162 280h8v8h-8z"/><path fill="#3d0fff" d="M1170 280h8v8h-8z"/><path fill="#460dff" d="M1178 280h8v8h-8z"/><path fill="#4f0bff" d="M1186 280h8v8h-8z"/><path fill="#590aff" d="M1194 280h8v8h-8z"/><path fill="#6308ff" d="M1202 280h8v8h-8z"/><path fill="#6e06ff" d="M1210 280h8v8h-8z"/><path fill="#7804ff" d="M1218 280h8v8h-8z"/><path fill="#8303ff" d="M1226 280h8v8h-8z"/><path fill="#8f01ff" d="M1234 280h8v8h-8z"/><path fill="#9a00ff" d="M1242 280h8v8h-8zM1306 352h8v8h-8z"/><path fill="#a600ff" d="M1250 280h8v8h-8zM1346 384h8v8h-8z"/><path fill="#b200ff" d="M1258 280h8v8h-8zM1266 288h8v8h-8z"/><path fill="#d800ff" d="M1282 280h8v8h-8z"/><path fill="#e500ff" d="M1290 280h8v8h-8zM1370 352h8v8h-8z"/><path fill="#f200ff" d="M1298 280h8v8h-8zM1362 336h8v8h-8z"/><path fill="#ff00fe" d="M1306 280h8v8h-8z"/><path fill="#ff00f1" d="M1314 280h8v8h-8z"/><path fill="#ff00da" d="M1330 280h8v8h-8z"/><path fill="#ff00c6" d="M1346 280h8v8h-8z"/><path fill="#ff00b5" d="M1362 280h8v8h-8z"/><path fill="#ff00a0" d="M1386 280h8v8h-8zM1410 296h8v8h-8z"/><path fill="#ff0089" d="M1418 280h8v8h-8z"/><path fill="#0032ff" d="M1026 288h8v8h-8zM1010 296h8v8h-8z"/><path fill="#0029ff" d="M1058 288h8v8h-8zM1042 296h8v8h-8zM1026 304h8v8h-8zM1010 312h8v8h-8z"/><path fill="#0021ff" d="M1090 288h8v8h-8zM1074 296h8v8h-8zM1058 304h8v8h-8zM1042 312h8v8h-8zM1026 320h8v8h-8z"/><path fill="#001fff" d="M1098 288h8v8h-8zM1082 296h8v8h-8zM1066 304h8v8h-8zM1050 312h8v8h-8z"/><path fill="#021dff" d="M1106 288h8v8h-8z"/><path fill="#061aff" d="M1114 288h8v8h-8z"/><path fill="#0c18ff" d="M1122 288h8v8h-8z"/><path fill="#1216ff" d="M1130 288h8v8h-8z"/><path fill="#1914ff" d="M1138 288h8v8h-8z"/><path fill="#2012ff" d="M1146 288h8v8h-8z"/><path fill="#2810ff" d="M1154 288h8v8h-8z"/><path fill="#300eff" d="M1162 288h8v8h-8z"/><path fill="#380cff" d="M1170 288h8v8h-8z"/><path fill="#410bff" d="M1178 288h8v8h-8z"/><path fill="#4a09ff" d="M1186 288h8v8h-8z"/><path fill="#5307ff" d="M1194 288h8v8h-8z"/><path fill="#5c05ff" d="M1202 288h8v8h-8z"/><path fill="#6604ff" d="M1210 288h8v8h-8z"/><path fill="#7002ff" d="M1218 288h8v8h-8z"/><path fill="#7b01ff" d="M1226 288h8v8h-8z"/><path fill="#8500ff" d="M1234 288h8v8h-8zM1306 376h8v8h-8z"/><path fill="#9000ff" d="M1242 288h8v8h-8zM1290 344h8v8h-8z"/><path fill="#9b00ff" d="M1250 288h8v8h-8zM1314 360h8v8h-8z"/><path fill="#a700ff" d="M1258 288h8v8h-8z"/><path fill="#ca00ff" d="M1282 288h8v8h-8zM1290 296h8v8h-8zM1298 304h8v8h-8z"/><path fill="#d700ff" d="M1290 288h8v8h-8z"/><path fill="#e400ff" d="M1298 288h8v8h-8z"/><path fill="#f000ff" d="M1306 288h8v8h-8z"/><path fill="#fe00ff" d="M1314 288h8v8h-8z"/><path fill="#ff00f4" d="M1322 288h8v8h-8zM1370 328h8v8h-8z"/><path fill="#ff00dd" d="M1338 288h8v8h-8z"/><path fill="#ff00b9" d="M1370 288h8v8h-8z"/><path fill="#ff00b1" d="M1378 288h8v8h-8z"/><path fill="#002dff" d="M1026 296h8v8h-8zM1010 304h8v8h-8z"/><path fill="#002bff" d="M1034 296h8v8h-8zM1018 304h8v8h-8z"/><path fill="#001dff" d="M1090 296h8v8h-8zM1074 304h8v8h-8z"/><path fill="#001bff" d="M1098 296h8v8h-8zM1082 304h8v8h-8zM1042 328h8v8h-8zM1026 336h8v8h-8z"/><path fill="#0119ff" d="M1106 296h8v8h-8z"/><path fill="#0517ff" d="M1114 296h8v8h-8z"/><path fill="#0a15ff" d="M1122 296h8v8h-8z"/><path fill="#1013ff" d="M1130 296h8v8h-8z"/><path fill="#1611ff" d="M1138 296h8v8h-8z"/><path fill="#1d0fff" d="M1146 296h8v8h-8z"/><path fill="#240dff" d="M1154 296h8v8h-8z"/><path fill="#2c0cff" d="M1162 296h8v8h-8z"/><path fill="#340aff" d="M1170 296h8v8h-8z"/><path fill="#3c08ff" d="M1178 296h8v8h-8z"/><path fill="#4406ff" d="M1186 296h8v8h-8z"/><path fill="#4d05ff" d="M1194 296h8v8h-8z"/><path fill="#5603ff" d="M1202 296h8v8h-8z"/><path fill="#5f02ff" d="M1210 296h8v8h-8z"/><path fill="#6901ff" d="M1218 296h8v8h-8z"/><path fill="#7300ff" d="M1226 296h8v8h-8zM1250 328h8v8h-8z"/><path fill="#7d00ff" d="M1234 296h8v8h-8zM1266 336h8v8h-8zM1298 376h8v8h-8z"/><path fill="#8700ff" d="M1242 296h8v8h-8z"/><path fill="#9200ff" d="M1250 296h8v8h-8zM1298 352h8v8h-8z"/><path fill="#9d00ff" d="M1258 296h8v8h-8zM1330 376h8v8h-8z"/><path fill="#a800ff" d="M1266 296h8v8h-8zM1274 304h8v8h-8z"/><path fill="#b300ff" d="M1274 296h8v8h-8zM1282 304h8v8h-8z"/><path fill="#d600ff" d="M1298 296h8v8h-8z"/><path fill="#e200ff" d="M1306 296h8v8h-8z"/><path fill="#ef00ff" d="M1314 296h8v8h-8zM1378 352h8v8h-8z"/><path fill="#fb00ff" d="M1322 296h8v8h-8zM1378 344h8v8h-8z"/><path fill="#ff00e0" d="M1346 296h8v8h-8z"/><path fill="#ff00d6" d="M1354 296h8v8h-8z"/><path fill="#ff00cd" d="M1362 296h8v8h-8zM1394 320h8v8h-8z"/><path fill="#ff00c4" d="M1370 296h8v8h-8z"/><path fill="#ff00bc" d="M1378 296h8v8h-8z"/><path fill="#ff00b4" d="M1386 296h8v8h-8z"/><path fill="#ff00ad" d="M1394 296h8v8h-8zM1418 312h8v8h-8z"/><path fill="#ff00a7" d="M1402 296h8v8h-8z"/><path fill="#ff0095" d="M1426 296h8v8h-8z"/><path fill="#0019ff" d="M1090 304h8v8h-8zM1050 328h8v8h-8zM1034 336h8v8h-8z"/><path fill="#0017ff" d="M1098 304h8v8h-8zM1074 320h8v8h-8zM1058 328h8v8h-8zM1034 344h8v8h-8z"/><path fill="#0016ff" d="M1106 304h8v8h-8zM1090 312h8v8h-8zM1066 328h8v8h-8zM1050 336h8v8h-8z"/><path fill="#0314ff" d="M1114 304h8v8h-8z"/><path fill="#0812ff" d="M1122 304h8v8h-8z"/><path fill="#0e10ff" d="M1130 304h8v8h-8z"/><path fill="#140eff" d="M1138 304h8v8h-8z"/><path fill="#1a0dff" d="M1146 304h8v8h-8z"/><path fill="#210bff" d="M1154 304h8v8h-8z"/><path fill="#2809ff" d="M1162 304h8v8h-8z"/><path fill="#3008ff" d="M1170 304h8v8h-8z"/><path fill="#3706ff" d="M1178 304h8v8h-8z"/><path fill="#3f04ff" d="M1186 304h8v8h-8z"/><path fill="#4803ff" d="M1194 304h8v8h-8z"/><path fill="#5002ff" d="M1202 304h8v8h-8z"/><path fill="#5901ff" d="M1210 304h8v8h-8z"/><path fill="#6200ff" d="M1218 304h8v8h-8zM1274 384h8v8h-8zM1290 408h8v8h-8z"/><path fill="#6c00ff" d="M1226 304h8v8h-8zM1250 336h8v8h-8z"/><path fill="#7500ff" d="M1234 304h8v8h-8zM1258 336h8v8h-8zM1314 408h8v8h-8z"/><path fill="#7f00ff" d="M1242 304h8v8h-8zM1274 344h8v8h-8zM1306 384h8v8h-8z"/><path fill="#8900ff" d="M1250 304h8v8h-8zM1290 352h8v8h-8zM1330 400h8v8h-8z"/><path fill="#9300ff" d="M1258 304h8v8h-8zM1306 360h8v8h-8z"/><path fill="#9e00ff" d="M1266 304h8v8h-8zM1338 384h8v8h-8z"/><path fill="#d500ff" d="M1306 304h8v8h-8zM1314 312h8v8h-8z"/><path fill="#e100ff" d="M1314 304h8v8h-8z"/><path fill="#ed00ff" d="M1322 304h8v8h-8z"/><path fill="#ff00ed" d="M1346 304h8v8h-8z"/><path fill="#ff00e3" d="M1354 304h8v8h-8zM1394 336h8v8h-8z"/><path fill="#ff00d9" d="M1362 304h8v8h-8z"/><path fill="#ff00c7" d="M1378 304h8v8h-8z"/><path fill="#ff00b7" d="M1394 304h8v8h-8z"/><path fill="#ff00b0" d="M1402 304h8v8h-8z"/><path fill="#ff00a4" d="M1418 304h8v8h-8z"/><path fill="#001eff" d="M1058 312h8v8h-8zM1042 320h8v8h-8zM1026 328h8v8h-8z"/><path fill="#001cff" d="M1066 312h8v8h-8zM1050 320h8v8h-8zM1034 328h8v8h-8z"/><path fill="#001aff" d="M1074 312h8v8h-8zM1058 320h8v8h-8z"/><path fill="#0018ff" d="M1082 312h8v8h-8zM1066 320h8v8h-8zM1042 336h8v8h-8z"/><path fill="#0014ff" d="M1098 312h8v8h-8zM1074 328h8v8h-8zM1058 336h8v8h-8zM1034 352h8v8h-8z"/><path fill="#0013ff" d="M1106 312h8v8h-8zM1090 320h8v8h-8zM1066 336h8v8h-8zM1050 344h8v8h-8z"/><path fill="#0211ff" d="M1114 312h8v8h-8z"/><path fill="#070fff" d="M1122 312h8v8h-8z"/><path fill="#0c0dff" d="M1130 312h8v8h-8z"/><path fill="#110cff" d="M1138 312h8v8h-8z"/><path fill="#180aff" d="M1146 312h8v8h-8z"/><path fill="#1e08ff" d="M1154 312h8v8h-8z"/><path fill="#2507ff" d="M1162 312h8v8h-8z"/><path fill="#2c05ff" d="M1170 312h8v8h-8z"/><path fill="#3304ff" d="M1178 312h8v8h-8z"/><path fill="#3b03ff" d="M1186 312h8v8h-8z"/><path fill="#4301ff" d="M1194 312h8v8h-8z"/><path fill="#4b00ff" d="M1202 312h8v8h-8zM1226 352h8v8h-8zM1266 416h8v8h-8z"/><path fill="#5300ff" d="M1210 312h8v8h-8zM1266 400h8v8h-8zM1282 424h8v8h-8z"/><path fill="#5c00ff" d="M1218 312h8v8h-8zM1234 336h8v8h-8zM1250 360h8v8h-8z"/><path fill="#6500ff" d="M1226 312h8v8h-8zM1266 368h8v8h-8zM1306 424h8v8h-8z"/><path fill="#6e00ff" d="M1234 312h8v8h-8zM1258 344h8v8h-8z"/><path fill="#7700ff" d="M1242 312h8v8h-8zM1266 344h8v8h-8z"/><path fill="#8100ff" d="M1250 312h8v8h-8zM1282 352h8v8h-8z"/><path fill="#8b00ff" d="M1258 312h8v8h-8z"/><path fill="#9500ff" d="M1266 312h8v8h-8zM1322 376h8v8h-8z"/><path fill="#9f00ff" d="M1274 312h8v8h-8z"/><path fill="#a900ff" d="M1282 312h8v8h-8z"/><path fill="#b400ff" d="M1290 312h8v8h-8zM1298 320h8v8h-8zM1306 328h8v8h-8z"/><path fill="#c900ff" d="M1306 312h8v8h-8zM1314 320h8v8h-8zM1322 328h8v8h-8z"/><path fill="#e000ff" d="M1322 312h8v8h-8z"/><path fill="#eb00ff" d="M1330 312h8v8h-8z"/><path fill="#f700ff" d="M1338 312h8v8h-8z"/><path fill="#ff00fb" d="M1346 312h8v8h-8z"/><path fill="#ff00f0" d="M1354 312h8v8h-8z"/><path fill="#ff00d2" d="M1378 312h8v8h-8z"/><path fill="#ff00ca" d="M1386 312h8v8h-8z"/><path fill="#ff00c2" d="M1394 312h8v8h-8z"/><path fill="#0020ff" d="M1034 320h8v8h-8z"/><path fill="#0015ff" d="M1082 320h8v8h-8zM1042 344h8v8h-8z"/><path fill="#0012ff" d="M1098 320h8v8h-8zM1082 328h8v8h-8zM1058 344h8v8h-8zM1042 352h8v8h-8z"/><path fill="#0010ff" d="M1106 320h8v8h-8zM1082 336h8v8h-8zM1066 344h8v8h-8zM1058 352h8v8h-8zM1042 360h8v8h-8z"/><path fill="#010eff" d="M1114 320h8v8h-8z"/><path fill="#050dff" d="M1122 320h8v8h-8z"/><path fill="#0a0bff" d="M1130 320h8v8h-8z"/><path fill="#0f09ff" d="M1138 320h8v8h-8z"/><path fill="#1508ff" d="M1146 320h8v8h-8z"/><path fill="#1b06ff" d="M1154 320h8v8h-8z"/><path fill="#2205ff" d="M1162 320h8v8h-8z"/><path fill="#2904ff" d="M1170 320h8v8h-8z"/><path fill="#3002ff" d="M1178 320h8v8h-8z"/><path fill="#3701ff" d="M1186 320h8v8h-8z"/><path fill="#3e00ff" d="M1194 320h8v8h-8zM1234 392h8v8h-8zM1266 448h8v8h-8z"/><path fill="#4600ff" d="M1202 320h8v8h-8zM1226 360h8v8h-8zM1250 400h8v8h-8z"/><path fill="#4e00ff" d="M1210 320h8v8h-8zM1250 384h8v8h-8z"/><path fill="#5600ff" d="M1218 320h8v8h-8z"/><path fill="#5f00ff" d="M1226 320h8v8h-8zM1298 424h8v8h-8z"/><path fill="#6700ff" d="M1234 320h8v8h-8zM1274 376h8v8h-8z"/><path fill="#7000ff" d="M1242 320h8v8h-8zM1266 352h8v8h-8zM1290 384h8v8h-8zM1314 416h8v8h-8z"/><path fill="#7900ff" d="M1250 320h8v8h-8zM1306 392h8v8h-8z"/><path fill="#8300ff" d="M1258 320h8v8h-8z"/><path fill="#8c00ff" d="M1266 320h8v8h-8zM1306 368h8v8h-8z"/><path fill="#9600ff" d="M1274 320h8v8h-8zM1330 384h8v8h-8z"/><path fill="#a000ff" d="M1282 320h8v8h-8z"/><path fill="#aa00ff" d="M1290 320h8v8h-8zM1298 328h8v8h-8z"/><path fill="#d400ff" d="M1322 320h8v8h-8z"/><path fill="#df00ff" d="M1330 320h8v8h-8z"/><path fill="#ea00ff" d="M1338 320h8v8h-8z"/><path fill="#f500ff" d="M1346 320h8v8h-8z"/><path fill="#ff00fd" d="M1354 320h8v8h-8z"/><path fill="#ff00f2" d="M1362 320h8v8h-8z"/><path fill="#ff00de" d="M1378 320h8v8h-8z"/><path fill="#ff00d5" d="M1386 320h8v8h-8z"/><path fill="#0011ff" d="M1090 328h8v8h-8zM1074 336h8v8h-8zM1050 352h8v8h-8z"/><path fill="#000fff" d="M1098 328h8v8h-8zM1074 344h8v8h-8zM1050 360h8v8h-8z"/><path fill="#000dff" d="M1106 328h8v8h-8zM1098 336h8v8h-8zM1082 344h8v8h-8zM1074 352h8v8h-8zM1058 360h8v8h-8zM1050 368h8v8h-8z"/><path fill="#010cff" d="M1114 328h8v8h-8z"/><path fill="#040aff" d="M1122 328h8v8h-8z"/><path fill="#0909ff" d="M1130 328h8v8h-8z"/><path fill="#0e07ff" d="M1138 328h8v8h-8z"/><path fill="#1306ff" d="M1146 328h8v8h-8z"/><path fill="#1905ff" d="M1154 328h8v8h-8z"/><path fill="#1f03ff" d="M1162 328h8v8h-8z"/><path fill="#2502ff" d="M1170 328h8v8h-8z"/><path fill="#2c01ff" d="M1178 328h8v8h-8z"/><path fill="#3300ff" d="M1186 328h8v8h-8zM1194 344h8v8h-8zM1202 360h8v8h-8z"/><path fill="#3a00ff" d="M1194 328h8v8h-8zM1202 344h8v8h-8zM1242 416h8v8h-8zM1250 432h8v8h-8z"/><path fill="#4200ff" d="M1202 328h8v8h-8zM1226 368h8v8h-8zM1258 424h8v8h-8z"/><path fill="#4900ff" d="M1210 328h8v8h-8zM1234 368h8v8h-8zM1258 408h8v8h-8zM1282 448h8v8h-8z"/><path fill="#5100ff" d="M1218 328h8v8h-8zM1274 416h8v8h-8z"/><path fill="#5900ff" d="M1226 328h8v8h-8zM1242 352h8v8h-8zM1258 376h8v8h-8zM1274 400h8v8h-8zM1290 424h8v8h-8z"/><path fill="#6100ff" d="M1234 328h8v8h-8zM1250 352h8v8h-8z"/><path fill="#6a00ff" d="M1242 328h8v8h-8zM1306 416h8v8h-8z"/><path fill="#7b00ff" d="M1258 328h8v8h-8zM1314 400h8v8h-8z"/><path fill="#8400ff" d="M1266 328h8v8h-8zM1298 368h8v8h-8z"/><path fill="#8e00ff" d="M1274 328h8v8h-8zM1322 384h8v8h-8z"/><path fill="#9700ff" d="M1282 328h8v8h-8zM1338 392h8v8h-8z"/><path fill="#a100ff" d="M1290 328h8v8h-8zM1298 336h8v8h-8z"/><path fill="#d300ff" d="M1330 328h8v8h-8zM1338 336h8v8h-8z"/><path fill="#de00ff" d="M1338 328h8v8h-8z"/><path fill="#e900ff" d="M1346 328h8v8h-8z"/><path fill="#ff00ff" d="M1362 328h8v8h-8z"/><path fill="#ff00ea" d="M1378 328h8v8h-8z"/><path fill="#ff00e1" d="M1386 328h8v8h-8z"/><path fill="#ff00cf" d="M1402 328h8v8h-8z"/><path fill="#000eff" d="M1090 336h8v8h-8zM1066 352h8v8h-8z"/><path fill="#000bff" d="M1106 336h8v8h-8zM1098 344h8v8h-8zM1082 352h8v8h-8zM1074 360h8v8h-8zM1058 368h8v8h-8zM1050 376h8v8h-8z"/><path fill="#000aff" d="M1114 336h8v8h-8zM1090 352h8v8h-8zM1066 368h8v8h-8zM1058 376h8v8h-8z"/><path fill="#0308ff" d="M1122 336h8v8h-8z"/><path fill="#0707ff" d="M1130 336h8v8h-8z"/><path fill="#0c06ff" d="M1138 336h8v8h-8z"/><path fill="#1104ff" d="M1146 336h8v8h-8z"/><path fill="#1703ff" d="M1154 336h8v8h-8z"/><path fill="#1c02ff" d="M1162 336h8v8h-8z"/><path fill="#2301ff" d="M1170 336h8v8h-8z"/><path fill="#2900ff" d="M1178 336h8v8h-8zM1186 352h8v8h-8zM1242 472h8v8h-8z"/><path fill="#3000ff" d="M1186 336h8v8h-8z"/><path fill="#3600ff" d="M1194 336h8v8h-8zM1202 352h8v8h-8zM1210 368h8v8h-8z"/><path fill="#3d00ff" d="M1202 336h8v8h-8zM1210 352h8v8h-8zM1242 408h8v8h-8zM1250 424h8v8h-8z"/><path fill="#4500ff" d="M1210 336h8v8h-8zM1234 376h8v8h-8zM1258 416h8v8h-8z"/><path fill="#4c00ff" d="M1218 336h8v8h-8zM1242 376h8v8h-8zM1282 440h8v8h-8z"/><path fill="#5400ff" d="M1226 336h8v8h-8zM1242 360h8v8h-8z"/><path fill="#6400ff" d="M1242 336h8v8h-8zM1282 392h8v8h-8z"/><path fill="#8600ff" d="M1274 336h8v8h-8zM1314 384h8v8h-8z"/><path fill="#8f00ff" d="M1282 336h8v8h-8zM1330 392h8v8h-8z"/><path fill="#9800ff" d="M1290 336h8v8h-8z"/><path fill="#ab00ff" d="M1306 336h8v8h-8z"/><path fill="#b500ff" d="M1314 336h8v8h-8zM1322 344h8v8h-8zM1330 352h8v8h-8zM1338 360h8v8h-8z"/><path fill="#c800ff" d="M1330 336h8v8h-8zM1338 344h8v8h-8zM1346 352h8v8h-8zM1354 360h8v8h-8z"/><path fill="#dd00ff" d="M1346 336h8v8h-8z"/><path fill="#e700ff" d="M1354 336h8v8h-8z"/><path fill="#fd00ff" d="M1370 336h8v8h-8z"/><path fill="#ff00ec" d="M1386 336h8v8h-8z"/><path fill="#000cff" d="M1090 344h8v8h-8zM1066 360h8v8h-8z"/><path fill="#0009ff" d="M1106 344h8v8h-8zM1098 352h8v8h-8zM1082 360h8v8h-8zM1074 368h8v8h-8z"/><path fill="#0008ff" d="M1114 344h8v8h-8zM1090 360h8v8h-8zM1082 368h8v8h-8zM1066 376h8v8h-8zM1058 384h8v8h-8z"/><path fill="#0206ff" d="M1122 344h8v8h-8z"/><path fill="#0605ff" d="M1130 344h8v8h-8z"/><path fill="#0a04ff" d="M1138 344h8v8h-8z"/><path fill="#0f03ff" d="M1146 344h8v8h-8z"/><path fill="#1402ff" d="M1154 344h8v8h-8z"/><path fill="#1a01ff" d="M1162 344h8v8h-8z"/><path fill="#2000ff" d="M1170 344h8v8h-8zM1194 400h8v8h-8zM1202 416h8v8h-8zM1218 456h8v8h-8zM1226 472h8v8h-8z"/><path fill="#2600ff" d="M1178 344h8v8h-8zM1186 360h8v8h-8zM1218 432h8v8h-8zM1226 448h8v8h-8zM1234 464h8v8h-8z"/><path fill="#2c00ff" d="M1186 344h8v8h-8zM1194 360h8v8h-8z"/><path fill="#4100ff" d="M1210 344h8v8h-8zM1234 384h8v8h-8zM1266 440h8v8h-8z"/><path fill="#4800ff" d="M1218 344h8v8h-8zM1242 384h8v8h-8zM1266 424h8v8h-8z"/><path fill="#4f00ff" d="M1226 344h8v8h-8zM1266 408h8v8h-8zM1282 432h8v8h-8z"/><path fill="#5700ff" d="M1234 344h8v8h-8zM1250 368h8v8h-8zM1266 392h8v8h-8zM1282 416h8v8h-8z"/><path fill="#5e00ff" d="M1242 344h8v8h-8zM1258 368h8v8h-8zM1274 392h8v8h-8z"/><path fill="#6600ff" d="M1250 344h8v8h-8zM1290 400h8v8h-8z"/><path fill="#8800ff" d="M1282 344h8v8h-8zM1322 392h8v8h-8z"/><path fill="#9900ff" d="M1298 344h8v8h-8z"/><path fill="#a200ff" d="M1306 344h8v8h-8z"/><path fill="#ac00ff" d="M1314 344h8v8h-8zM1322 352h8v8h-8z"/><path fill="#d200ff" d="M1346 344h8v8h-8zM1354 352h8v8h-8z"/><path fill="#dc00ff" d="M1354 344h8v8h-8z"/><path fill="#f100ff" d="M1370 344h8v8h-8z"/><path fill="#ff00f8" d="M1386 344h8v8h-8z"/><path fill="#0007ff" d="M1106 352h8v8h-8zM1098 360h8v8h-8zM1074 376h8v8h-8zM1066 384h8v8h-8z"/><path fill="#0006ff" d="M1114 352h8v8h-8zM1106 360h8v8h-8zM1090 368h8v8h-8zM1082 376h8v8h-8zM1074 384h8v8h-8z"/><path fill="#0105ff" d="M1122 352h8v8h-8z"/><path fill="#0504ff" d="M1130 352h8v8h-8z"/><path fill="#0903ff" d="M1138 352h8v8h-8z"/><path fill="#0e02ff" d="M1146 352h8v8h-8z"/><path fill="#1301ff" d="M1154 352h8v8h-8z"/><path fill="#1800ff" d="M1162 352h8v8h-8zM1178 392h8v8h-8zM1194 432h8v8h-8zM1210 472h8v8h-8zM1218 496h8v8h-8z"/><path fill="#1d00ff" d="M1170 352h8v8h-8zM1186 392h8v8h-8zM1202 432h8v8h-8zM1210 448h8v8h-8zM1226 488h8v8h-8z"/><path fill="#2300ff" d="M1178 352h8v8h-8zM1202 408h8v8h-8zM1210 424h8v8h-8zM1234 480h8v8h-8z"/><path fill="#2f00ff" d="M1194 352h8v8h-8zM1202 368h8v8h-8zM1210 384h8v8h-8zM1218 400h8v8h-8zM1226 416h8v8h-8zM1234 432h8v8h-8zM1242 448h8v8h-8zM1250 464h8v8h-8z"/><path fill="#4300ff" d="M1218 352h8v8h-8zM1250 408h8v8h-8zM1274 448h8v8h-8z"/><path fill="#5200ff" d="M1234 352h8v8h-8zM1250 376h8v8h-8zM1290 440h8v8h-8z"/><path fill="#6800ff" d="M1258 352h8v8h-8zM1298 408h8v8h-8z"/><path fill="#7800ff" d="M1274 352h8v8h-8zM1298 384h8v8h-8z"/><path fill="#a300ff" d="M1314 352h8v8h-8z"/><path fill="#bf00ff" d="M1338 352h8v8h-8zM1346 360h8v8h-8zM1354 368h8v8h-8z"/><path fill="#db00ff" d="M1362 352h8v8h-8zM1370 360h8v8h-8z"/><path fill="#0004ff" d="M1114 360h8v8h-8zM1106 368h8v8h-8zM1098 376h8v8h-8zM1090 384h8v8h-8zM1074 392h8v8h-8zM1066 400h8v8h-8z"/><path fill="#0103ff" d="M1122 360h8v8h-8z"/><path fill="#0402ff" d="M1130 360h8v8h-8z"/><path fill="#0801ff" d="M1138 360h8v8h-8z"/><path fill="#0c00ff" d="M1146 360h8v8h-8zM1154 384h8v8h-8zM1162 408h8v8h-8zM1170 432h8v8h-8zM1178 456h8v8h-8zM1186 480h8v8h-8z"/><path fill="#1100ff" d="M1154 360h8v8h-8zM1178 424h8v8h-8zM1186 448h8v8h-8zM1194 472h8v8h-8zM1202 496h8v8h-8z"/><path fill="#1600ff" d="M1162 360h8v8h-8zM1178 400h8v8h-8zM1186 424h8v8h-8zM1202 464h8v8h-8z"/><path fill="#1b00ff" d="M1170 360h8v8h-8zM1186 400h8v8h-8zM1202 440h8v8h-8zM1218 480h8v8h-8zM1226 496h8v8h-8z"/><path fill="#2100ff" d="M1178 360h8v8h-8zM1186 376h8v8h-8zM1210 432h8v8h-8zM1234 488h8v8h-8z"/><path fill="#3900ff" d="M1210 360h8v8h-8zM1258 448h8v8h-8zM1266 464h8v8h-8z"/><path fill="#4000ff" d="M1218 360h8v8h-8zM1242 400h8v8h-8zM1250 416h8v8h-8zM1274 456h8v8h-8z"/><path fill="#4d00ff" d="M1234 360h8v8h-8zM1258 400h8v8h-8zM1274 424h8v8h-8z"/><path fill="#6300ff" d="M1258 360h8v8h-8zM1298 416h8v8h-8z"/><path fill="#6b00ff" d="M1266 360h8v8h-8zM1290 392h8v8h-8z"/><path fill="#7200ff" d="M1274 360h8v8h-8zM1298 392h8v8h-8z"/><path fill="#7a00ff" d="M1282 360h8v8h-8z"/><path fill="#8200ff" d="M1290 360h8v8h-8zM1322 400h8v8h-8z"/><path fill="#8a00ff" d="M1298 360h8v8h-8z"/><path fill="#a400ff" d="M1322 360h8v8h-8zM1330 368h8v8h-8z"/><path fill="#ad00ff" d="M1330 360h8v8h-8zM1338 368h8v8h-8zM1346 376h8v8h-8z"/><path fill="#d100ff" d="M1362 360h8v8h-8z"/><path fill="#0005ff" d="M1098 368h8v8h-8zM1090 376h8v8h-8zM1082 384h8v8h-8zM1066 392h8v8h-8z"/><path fill="#0003ff" d="M1114 368h8v8h-8zM1106 376h8v8h-8zM1098 384h8v8h-8zM1082 392h8v8h-8zM1074 400h8v8h-8z"/><path fill="#0002ff" d="M1122 368h8v8h-8zM1114 376h8v8h-8zM1106 384h8v8h-8zM1090 392h16v8h-16zM1082 400h8v8h-8zM1074 408h8v8h-8z"/><path fill="#0301ff" d="M1130 368h8v8h-8z"/><path fill="#0700ff" d="M1138 368h8v8h-8zM1146 392h8v8h-8zM1154 416h8v8h-8zM1162 448h8v8h-8zM1170 472h8v8h-8zM1178 504h8v8h-8z"/><path fill="#0b00ff" d="M1146 368h8v8h-8zM1154 392h8v8h-8zM1162 416h8v8h-8zM1170 440h8v8h-8zM1178 464h8v8h-8zM1186 488h8v8h-8z"/><path fill="#0f00ff" d="M1154 368h8v8h-8zM1162 392h8v8h-8zM1170 416h8v8h-8zM1178 440h8v8h-8zM1186 464h8v8h-8z"/><path fill="#1400ff" d="M1162 368h8v8h-8zM1186 432h8v8h-8zM1194 456h8v8h-8z"/><path fill="#1900ff" d="M1170 368h8v8h-8zM1186 408h8v8h-8zM1202 448h8v8h-8zM1218 488h8v8h-8z"/><path fill="#1e00ff" d="M1178 368h8v8h-8zM1194 408h8v8h-8zM1202 424h8v8h-8zM1218 464h8v8h-8z"/><path fill="#2400ff" d="M1186 368h8v8h-8zM1194 384h8v8h-8zM1218 440h8v8h-8zM1226 456h8v8h-8zM1234 472h8v8h-8z"/><path fill="#2a00ff" d="M1194 368h8v8h-8zM1202 384h8v8h-8zM1210 400h8v8h-8zM1218 416h8v8h-8zM1226 432h8v8h-8z"/><path fill="#3c00ff" d="M1218 368h8v8h-8zM1258 440h8v8h-8z"/><path fill="#5000ff" d="M1242 368h8v8h-8zM1258 392h8v8h-8z"/><path fill="#6d00ff" d="M1274 368h8v8h-8zM1298 400h8v8h-8z"/><path fill="#7400ff" d="M1282 368h8v8h-8zM1306 400h8v8h-8z"/><path fill="#7c00ff" d="M1290 368h8v8h-8zM1322 408h8v8h-8z"/><path fill="#9400ff" d="M1314 368h8v8h-8z"/><path fill="#9c00ff" d="M1322 368h8v8h-8z"/><path fill="#b600ff" d="M1346 368h8v8h-8zM1354 376h8v8h-8z"/><path fill="#c700ff" d="M1362 368h8v8h-8z"/><path fill="#0001ff" d="M1122 376h8v8h-8zM1114 384h8v8h-8zM1106 392h8v8h-8zM1090 400h16v8h-16zM1082 408h16v8h-16z"/><path fill="#0200ff" d="M1130 376h8v8h-8zM1138 408h8v8h-8zM1146 440h8v8h-8zM1154 464h8v8h-8zM1154 472h8v8h-8z"/><path fill="#0500ff" d="M1138 376h8v8h-8zM1146 408h8v8h-8zM1154 432h8v8h-8zM1154 440h8v8h-8zM1162 464h8v8h-8zM1170 488h8v8h-8zM1170 496h8v8h-8z"/><path fill="#0900ff" d="M1146 376h8v8h-8zM1162 432h8v8h-8zM1170 456h8v8h-8zM1178 480h8v8h-8z"/><path fill="#0e00ff" d="M1154 376h8v8h-8zM1162 400h8v8h-8zM1194 488h8v8h-8z"/><path fill="#1200ff" d="M1162 376h8v8h-8zM1170 400h8v8h-8zM1194 464h8v8h-8zM1202 488h8v8h-8z"/><path fill="#1700ff" d="M1170 376h8v8h-8zM1186 416h8v8h-8zM1194 440h8v8h-8zM1202 456h8v8h-8zM1210 480h8v8h-8z"/><path fill="#1c00ff" d="M1178 376h8v8h-8zM1194 416h8v8h-8zM1210 456h8v8h-8zM1218 472h8v8h-8z"/><path fill="#2700ff" d="M1194 376h8v8h-8zM1202 392h8v8h-8zM1242 480h8v8h-8z"/><path fill="#2d00ff" d="M1202 376h8v8h-8zM1210 392h8v8h-8zM1218 408h8v8h-8zM1226 424h8v8h-8zM1234 440h8v8h-8zM1242 456h8v8h-8zM1250 472h8v8h-8z"/><path fill="#3200ff" d="M1210 376h8v8h-8zM1218 392h8v8h-8zM1226 408h8v8h-8zM1234 424h8v8h-8zM1242 440h8v8h-8zM1250 456h8v8h-8zM1258 472h8v8h-8z"/><path fill="#3800ff" d="M1218 376h8v8h-8zM1226 392h8v8h-8zM1234 408h8v8h-8z"/><path fill="#3f00ff" d="M1226 376h8v8h-8zM1258 432h8v8h-8z"/><path fill="#6000ff" d="M1266 376h8v8h-8zM1282 400h8v8h-8z"/><path fill="#6f00ff" d="M1282 376h8v8h-8zM1306 408h8v8h-8z"/><path fill="#7600ff" d="M1290 376h8v8h-8z"/><path fill="#8d00ff" d="M1314 376h8v8h-8z"/><path fill="#a500ff" d="M1338 376h8v8h-8z"/><path fill="#0000ff" d="M1122 384h8v8h-8zM1114 392h16v8h-16zM1106 400h32v8h-32zM1098 408h40v8h-40zM1082 416h56v8h-56zM1090 424h48v8h-48zM1098 432h48v8h-48zM1106 440h40v8h-40zM1114 448h32v8h-32zM1122 456h24v8h-24zM1130 464h24v8h-24zM1138 472h16v8h-16zM1146 480h8v8h-8z"/><path fill="#0100ff" d="M1130 384h8v8h-8zM1130 392h8v8h-8zM1138 416h8v8h-8zM1138 424h8v8h-8zM1146 448h8v8h-8zM1146 456h8v8h-8zM1154 480h8v8h-8zM1154 488h8v8h-8z"/><path fill="#0400ff" d="M1138 384h8v8h-8zM1138 392h8v8h-8zM1146 416h8v8h-8zM1154 448h8v8h-8zM1162 472h8v8h-8zM1162 480h8v8h-8z"/><path fill="#0800ff" d="M1146 384h8v8h-8zM1154 408h8v8h-8zM1162 440h8v8h-8zM1170 464h8v8h-8zM1178 488h8v8h-8z"/><path fill="#1000ff" d="M1162 384h8v8h-8zM1170 408h8v8h-8zM1178 432h8v8h-8zM1186 456h8v8h-8zM1194 480h8v8h-8zM1202 504h8v8h-8zM1202 512h8v8h-8zM1202 520h8v8h-8z"/><path fill="#1500ff" d="M1170 384h8v8h-8zM1178 408h8v8h-8zM1194 448h8v8h-8zM1202 472h8v8h-8zM1210 488h8v8h-8z"/><path fill="#1a00ff" d="M1178 384h8v8h-8zM1194 424h8v8h-8zM1210 464h8v8h-8zM1226 504h8v8h-8z"/><path fill="#1f00ff" d="M1186 384h8v8h-8zM1210 440h8v8h-8zM1226 480h8v8h-8zM1234 496h8v8h-8z"/><path fill="#3500ff" d="M1218 384h8v8h-8zM1226 400h8v8h-8zM1234 416h8v8h-8z"/><path fill="#3b00ff" d="M1226 384h8v8h-8zM1234 400h8v8h-8zM1266 456h8v8h-8z"/><path fill="#5500ff" d="M1258 384h8v8h-8zM1274 408h8v8h-8zM1290 432h8v8h-8z"/><path fill="#5b00ff" d="M1266 384h8v8h-8zM1282 408h8v8h-8zM1298 432h8v8h-8z"/><path fill="#6900ff" d="M1282 384h8v8h-8z"/><path fill="#1300ff" d="M1170 392h8v8h-8zM1178 416h8v8h-8zM1186 440h8v8h-8zM1202 480h8v8h-8z"/><path fill="#2200ff" d="M1194 392h8v8h-8zM1218 448h8v8h-8zM1226 464h8v8h-8z"/><path fill="#4400ff" d="M1242 392h8v8h-8zM1266 432h8v8h-8z"/><path fill="#4a00ff" d="M1250 392h8v8h-8zM1274 432h8v8h-8z"/><path fill="#8000ff" d="M1314 392h8v8h-8z"/><path fill="#0300ff" d="M1138 400h8v8h-8zM1146 424h8v8h-8zM1146 432h8v8h-8zM1154 456h8v8h-8zM1162 488h8v8h-8z"/><path fill="#0600ff" d="M1146 400h8v8h-8zM1154 424h8v8h-8zM1162 456h8v8h-8zM1170 480h8v8h-8z"/><path fill="#0a00ff" d="M1154 400h8v8h-8zM1162 424h8v8h-8zM1170 448h8v8h-8zM1178 472h8v8h-8zM1186 496h8v8h-8zM1186 504h8v8h-8zM1186 512h8v8h-8z"/><path fill="#2500ff" d="M1202 400h8v8h-8zM1210 416h8v8h-8zM1242 488h8v8h-8z"/><path fill="#2800ff" d="M1210 408h8v8h-8zM1218 424h8v8h-8zM1226 440h8v8h-8zM1234 456h8v8h-8z"/><path fill="#5d00ff" d="M1290 416h8v8h-8z"/><path fill="#0d00ff" d="M1170 424h8v8h-8zM1178 448h8v8h-8zM1186 472h8v8h-8zM1194 496h8v8h-8z"/><path fill="#3700ff" d="M1242 424h8v8h-8zM1250 440h8v8h-8zM1258 456h8v8h-8z"/><path fill="#3400ff" d="M1242 432h8v8h-8zM1250 448h8v8h-8zM1258 464h8v8h-8z"/><path fill="#4700ff" d="M1274 440h8v8h-8z"/><path fill="#2b00ff" d="M1234 448h8v8h-8zM1242 464h8v8h-8zM1250 480h8v8h-8z"/></g></g>
<path d="M1210.2 496.76L1210.01 496.71L1209.73 496.86L1209.33 496.86L1209.1 497.16L1208.59 497.22L1207.84 497.17L1206.99 497.1L1205.57 496.44L1202.98 494.74L1199.45 492.03L1194.48 488.04L1188.14 482.61L1180.05 475.89L1169.56 467.21L1156.76 456.51L1141.18 442.52L1122.54 423.48L1097.73 393.47L1068.37 352.43L1036.59 301.46L1006 246.27L982.08 193.32L965.84 148.66L963.04 139.32L960.76 130.71L958.92 122.79L957.45 115.47L956.37 108.81L955.71 102.83L955.41 97.39L955.42 92.36L955.75 87.75L956.42 83.61L957.39 79.88L958.62 76.48L960.14 73.44L961.95 70.77L964 68.44L966.24 66.4L968.67 64.7L971.32 63.32L974.13 62.2L977.06 61.26L980.1 60.52L983.28 60.02L986.56 59.66L989.9 59.36L993.32 59.13L996.83 59L1000.39 58.93L1003.94 58.89L1007.46 58.88L1011 58.91L1014.55 58.97L1018.16 59.07L1021.8 59.19L1025.48 59.35L1029.21 59.54L1033.02 59.76L1036.91 60.01L1040.86 60.28L1044.89 60.59L1049.01 60.92L1066.41 62.49L1085.55 64.42L1106.71 66.7L1130.14 69.31L1156.05 72.24L1184.55 75.51L1215.66 79.1L1249.17 82.95L1284.61 87.02L1321.12 91.23L1356.46 95.3L1390.84 99.25L1421.91 102.81L1449.4 105.97L1472.86 108.67L1492.53 110.93L1509.04 112.82L1523.39 114.48L1535.51 115.88L1545.43 117.02L1552.91 117.88L1563.29 119.07L1573.89 120.3L1575.75 120.51ZM1449.06 105.88L1052.35 65.86L1128.98 388.17Z" fill="#000" fill-opacity="0.35" fill-rule="evenodd"/></g>
<rect x="954" y="47.7" width="599.6" height="461.9" fill="none" stroke="#9a9a9a" stroke-width="1.3"/>
<line x1="954" y1="47.7" x2="954" y2="516.1" stroke="#acacac" stroke-width="1.2"/>
<line x1="948.5" y1="509.6" x2="1553.6" y2="509.6" stroke="#acacac" stroke-width="1.2"/>
<line x1="948.5" y1="509.4" x2="954" y2="509.4" stroke="#c8c8c8" stroke-width="1.6"/>
<text x="939.92" y="515.7" font-size="12.6" fill="#e6e6e6" stroke="#e6e6e6" stroke-width="0.2" textLength="7.57" lengthAdjust="spacingAndGlyphs">0</text>
<line x1="948.5" y1="471.01" x2="954" y2="471.01" stroke="#c8c8c8" stroke-width="1.6"/>
<text x="921.08" y="475.81" font-size="12.6" fill="#e6e6e6" stroke="#e6e6e6" stroke-width="0.2" textLength="26.49" lengthAdjust="spacingAndGlyphs">0,05</text>
<line x1="948.5" y1="432.62" x2="954" y2="432.62" stroke="#c8c8c8" stroke-width="1.6"/>
<text x="928.7" y="437.42" font-size="12.6" fill="#e6e6e6" stroke="#e6e6e6" stroke-width="0.2" textLength="18.92" lengthAdjust="spacingAndGlyphs">0,1</text>
<line x1="948.5" y1="394.23" x2="954" y2="394.23" stroke="#c8c8c8" stroke-width="1.6"/>
<text x="921.08" y="399.03" font-size="12.6" fill="#e6e6e6" stroke="#e6e6e6" stroke-width="0.2" textLength="26.49" lengthAdjust="spacingAndGlyphs">0,15</text>
<line x1="948.5" y1="355.84" x2="954" y2="355.84" stroke="#c8c8c8" stroke-width="1.6"/>
<text x="928.77" y="360.64" font-size="12.6" fill="#e6e6e6" stroke="#e6e6e6" stroke-width="0.2" textLength="18.92" lengthAdjust="spacingAndGlyphs">0,2</text>
<line x1="948.5" y1="317.45" x2="954" y2="317.45" stroke="#c8c8c8" stroke-width="1.6"/>
<text x="921.08" y="322.25" font-size="12.6" fill="#e6e6e6" stroke="#e6e6e6" stroke-width="0.2" textLength="26.49" lengthAdjust="spacingAndGlyphs">0,25</text>
<line x1="948.5" y1="279.06" x2="954" y2="279.06" stroke="#c8c8c8" stroke-width="1.6"/>
<text x="928.63" y="283.86" font-size="12.6" fill="#e6e6e6" stroke="#e6e6e6" stroke-width="0.2" textLength="18.92" lengthAdjust="spacingAndGlyphs">0,3</text>
<line x1="948.5" y1="240.67" x2="954" y2="240.67" stroke="#c8c8c8" stroke-width="1.6"/>
<text x="921.08" y="245.47" font-size="12.6" fill="#e6e6e6" stroke="#e6e6e6" stroke-width="0.2" textLength="26.49" lengthAdjust="spacingAndGlyphs">0,35</text>
<line x1="948.5" y1="202.28" x2="954" y2="202.28" stroke="#c8c8c8" stroke-width="1.6"/>
<text x="928.43" y="207.08" font-size="12.6" fill="#e6e6e6" stroke="#e6e6e6" stroke-width="0.2" textLength="18.92" lengthAdjust="spacingAndGlyphs">0,4</text>
<line x1="948.5" y1="163.89" x2="954" y2="163.89" stroke="#c8c8c8" stroke-width="1.6"/>
<text x="921.08" y="168.69" font-size="12.6" fill="#e6e6e6" stroke="#e6e6e6" stroke-width="0.2" textLength="26.49" lengthAdjust="spacingAndGlyphs">0,45</text>
<line x1="948.5" y1="125.5" x2="954" y2="125.5" stroke="#c8c8c8" stroke-width="1.6"/>
<text x="928.63" y="130.3" font-size="12.6" fill="#e6e6e6" stroke="#e6e6e6" stroke-width="0.2" textLength="18.92" lengthAdjust="spacingAndGlyphs">0,5</text>
<line x1="948.5" y1="87.11" x2="954" y2="87.11" stroke="#c8c8c8" stroke-width="1.6"/>
<text x="921.08" y="91.91" font-size="12.6" fill="#e6e6e6" stroke="#e6e6e6" stroke-width="0.2" textLength="26.49" lengthAdjust="spacingAndGlyphs">0,55</text>
<line x1="954" y1="509.6" x2="954" y2="516.1" stroke="#c8c8c8" stroke-width="1.6"/>
<text x="950.19" y="530.2" font-size="12.6" fill="#e6e6e6" stroke="#e6e6e6" stroke-width="0.2" textLength="7.57" lengthAdjust="spacingAndGlyphs">0</text>
<line x1="1003.87" y1="509.6" x2="1003.87" y2="516.1" stroke="#c8c8c8" stroke-width="1.6"/>
<text x="990.64" y="530.2" font-size="12.6" fill="#e6e6e6" stroke="#e6e6e6" stroke-width="0.2" textLength="26.49" lengthAdjust="spacingAndGlyphs">0,05</text>
<line x1="1053.74" y1="509.6" x2="1053.74" y2="516.1" stroke="#c8c8c8" stroke-width="1.6"/>
<text x="1044.32" y="530.2" font-size="12.6" fill="#e6e6e6" stroke="#e6e6e6" stroke-width="0.2" textLength="18.92" lengthAdjust="spacingAndGlyphs">0,1</text>
<line x1="1103.61" y1="509.6" x2="1103.61" y2="516.1" stroke="#c8c8c8" stroke-width="1.6"/>
<text x="1090.38" y="530.2" font-size="12.6" fill="#e6e6e6" stroke="#e6e6e6" stroke-width="0.2" textLength="26.49" lengthAdjust="spacingAndGlyphs">0,15</text>
<line x1="1153.48" y1="509.6" x2="1153.48" y2="516.1" stroke="#c8c8c8" stroke-width="1.6"/>
<text x="1144.09" y="530.2" font-size="12.6" fill="#e6e6e6" stroke="#e6e6e6" stroke-width="0.2" textLength="18.92" lengthAdjust="spacingAndGlyphs">0,2</text>
<line x1="1203.35" y1="509.6" x2="1203.35" y2="516.1" stroke="#c8c8c8" stroke-width="1.6"/>
<text x="1190.12" y="530.2" font-size="12.6" fill="#e6e6e6" stroke="#e6e6e6" stroke-width="0.2" textLength="26.49" lengthAdjust="spacingAndGlyphs">0,25</text>
<line x1="1253.22" y1="509.6" x2="1253.22" y2="516.1" stroke="#c8c8c8" stroke-width="1.6"/>
<text x="1243.76" y="530.2" font-size="12.6" fill="#e6e6e6" stroke="#e6e6e6" stroke-width="0.2" textLength="18.92" lengthAdjust="spacingAndGlyphs">0,3</text>
<line x1="1303.09" y1="509.6" x2="1303.09" y2="516.1" stroke="#c8c8c8" stroke-width="1.6"/>
<text x="1289.86" y="530.2" font-size="12.6" fill="#e6e6e6" stroke="#e6e6e6" stroke-width="0.2" textLength="26.49" lengthAdjust="spacingAndGlyphs">0,35</text>
<line x1="1352.96" y1="509.6" x2="1352.96" y2="516.1" stroke="#c8c8c8" stroke-width="1.6"/>
<text x="1343.4" y="530.2" font-size="12.6" fill="#e6e6e6" stroke="#e6e6e6" stroke-width="0.2" textLength="18.92" lengthAdjust="spacingAndGlyphs">0,4</text>
<line x1="1402.83" y1="509.6" x2="1402.83" y2="516.1" stroke="#c8c8c8" stroke-width="1.6"/>
<text x="1389.6" y="530.2" font-size="12.6" fill="#e6e6e6" stroke="#e6e6e6" stroke-width="0.2" textLength="26.49" lengthAdjust="spacingAndGlyphs">0,45</text>
<line x1="1452.7" y1="509.6" x2="1452.7" y2="516.1" stroke="#c8c8c8" stroke-width="1.6"/>
<text x="1443.24" y="530.2" font-size="12.6" fill="#e6e6e6" stroke="#e6e6e6" stroke-width="0.2" textLength="18.92" lengthAdjust="spacingAndGlyphs">0,5</text>
<line x1="1502.57" y1="509.6" x2="1502.57" y2="516.1" stroke="#c8c8c8" stroke-width="1.6"/>
<text x="1489.34" y="530.2" font-size="12.6" fill="#e6e6e6" stroke="#e6e6e6" stroke-width="0.2" textLength="26.49" lengthAdjust="spacingAndGlyphs">0,55</text>
<rect x="1045.8" y="58.5" width="12.6" height="12.6" fill="#ffffff" fill-opacity="0" stroke="#f4f4f4" stroke-width="1.4"/>
<rect x="1058.8" y="68.6" width="12.6" height="12.6" fill="#ffffff" fill-opacity="0.16" stroke="#f4f4f4" stroke-width="1.4"/>
<rect x="1072.7" y="81.4" width="12.6" height="12.6" fill="#ffffff" fill-opacity="0.16" stroke="#f4f4f4" stroke-width="1.4"/>
<rect x="1091.5" y="97.6" width="12.6" height="12.6" fill="#ffffff" fill-opacity="0.16" stroke="#f4f4f4" stroke-width="1.4"/>
<rect x="1114.6" y="116.6" width="12.6" height="12.6" fill="#ffffff" fill-opacity="0.16" stroke="#f4f4f4" stroke-width="1.4"/>
<rect x="1151.5" y="68.6" width="12.6" height="12.6" fill="#ffffff" fill-opacity="0" stroke="#f4f4f4" stroke-width="1.4"/>
<rect x="1150.6" y="80.2" width="12.6" height="12.6" fill="#ffffff" fill-opacity="0.16" stroke="#f4f4f4" stroke-width="1.4"/>
<rect x="1149.3" y="93.5" width="12.6" height="12.6" fill="#ffffff" fill-opacity="0.16" stroke="#f4f4f4" stroke-width="1.4"/>
<rect x="1148.1" y="107.7" width="12.6" height="12.6" fill="#ffffff" fill-opacity="0.16" stroke="#f4f4f4" stroke-width="1.4"/>
<rect x="1146.7" y="123.2" width="12.6" height="12.6" fill="#ffffff" fill-opacity="0.16" stroke="#f4f4f4" stroke-width="1.4"/>
<rect x="1067.5" y="153.6" width="12.6" height="12.6" fill="#ffffff" fill-opacity="0" stroke="#f4f4f4" stroke-width="1.4"/>
<rect x="1082.6" y="151.3" width="12.6" height="12.6" fill="#ffffff" fill-opacity="0.16" stroke="#f4f4f4" stroke-width="1.4"/>
<rect x="1097.7" y="148.3" width="12.6" height="12.6" fill="#ffffff" fill-opacity="0.16" stroke="#f4f4f4" stroke-width="1.4"/>
<rect x="1113.7" y="147.4" width="12.6" height="12.6" fill="#ffffff" fill-opacity="0.16" stroke="#f4f4f4" stroke-width="1.4"/>
<rect x="1128.9" y="144.2" width="12.6" height="12.6" fill="#ffffff" fill-opacity="0.16" stroke="#f4f4f4" stroke-width="1.4"/>
<rect x="1442.2" y="97.9" width="12.6" height="12.6" fill="#ffffff" fill-opacity="0" stroke="#f4f4f4" stroke-width="1.4"/>
<rect x="1376.1" y="107.6" width="12.6" height="12.6" fill="#ffffff" fill-opacity="0.16" stroke="#f4f4f4" stroke-width="1.4"/>
<rect x="1314.5" y="116.7" width="12.6" height="12.6" fill="#ffffff" fill-opacity="0.16" stroke="#f4f4f4" stroke-width="1.4"/>
<rect x="1251.3" y="127.7" width="12.6" height="12.6" fill="#ffffff" fill-opacity="0.16" stroke="#f4f4f4" stroke-width="1.4"/>
<rect x="1196.5" y="134.4" width="12.6" height="12.6" fill="#ffffff" fill-opacity="0.16" stroke="#f4f4f4" stroke-width="1.4"/>
<rect x="1271.4" y="249.1" width="12.6" height="12.6" fill="#ffffff" fill-opacity="0" stroke="#f4f4f4" stroke-width="1.4"/>
<rect x="1235.7" y="220.6" width="12.6" height="12.6" fill="#ffffff" fill-opacity="0.16" stroke="#f4f4f4" stroke-width="1.4"/>
<rect x="1207.3" y="196.3" width="12.6" height="12.6" fill="#ffffff" fill-opacity="0.16" stroke="#f4f4f4" stroke-width="1.4"/>
<rect x="1182.7" y="174.4" width="12.6" height="12.6" fill="#ffffff" fill-opacity="0.16" stroke="#f4f4f4" stroke-width="1.4"/>
<rect x="1161.4" y="156.7" width="12.6" height="12.6" fill="#ffffff" fill-opacity="0.16" stroke="#f4f4f4" stroke-width="1.4"/>
<rect x="1122.7" y="381.3" width="12.6" height="12.6" fill="#ffffff" fill-opacity="0" stroke="#f4f4f4" stroke-width="1.4"/>
<rect x="1128.2" y="307.2" width="12.6" height="12.6" fill="#ffffff" fill-opacity="0.16" stroke="#f4f4f4" stroke-width="1.4"/>
<rect x="1135.3" y="249.9" width="12.6" height="12.6" fill="#ffffff" fill-opacity="0.16" stroke="#f4f4f4" stroke-width="1.4"/>
<rect x="1138.2" y="206.8" width="12.6" height="12.6" fill="#ffffff" fill-opacity="0.16" stroke="#f4f4f4" stroke-width="1.4"/>
<rect x="1141.7" y="170.5" width="12.6" height="12.6" fill="#ffffff" fill-opacity="0.16" stroke="#f4f4f4" stroke-width="1.4"/>
<circle cx="1055.3" cy="64.2" r="4.2" fill="#1eb41e" stroke="#111" stroke-width="1.1"/>
<circle cx="1067.2" cy="74.4" r="4.2" fill="#62b45a" stroke="#111" stroke-width="1.1"/>
<circle cx="1081.3" cy="87.4" r="4.2" fill="#78b46e" stroke="#111" stroke-width="1.1"/>
<circle cx="1099.2" cy="102.5" r="4.2" fill="#8ab484" stroke="#111" stroke-width="1.1"/>
<circle cx="1122.4" cy="123.3" r="4.2" fill="#9cb496" stroke="#111" stroke-width="1.1"/>
<circle cx="1157.4" cy="74.4" r="4.2" fill="#cabe1e" stroke="#111" stroke-width="1.1"/>
<circle cx="1156.5" cy="86.5" r="4.2" fill="#c0ba64" stroke="#111" stroke-width="1.1"/>
<circle cx="1155.3" cy="99.3" r="4.2" fill="#bcb67a" stroke="#111" stroke-width="1.1"/>
<circle cx="1154.4" cy="114.4" r="4.2" fill="#b8b28c" stroke="#111" stroke-width="1.1"/>
<circle cx="1152.4" cy="129.5" r="4.2" fill="#b4b09c" stroke="#111" stroke-width="1.1"/>
<circle cx="1077.4" cy="159.4" r="4.2" fill="#30aac4" stroke="#111" stroke-width="1.1"/>
<circle cx="1091.2" cy="156.4" r="4.2" fill="#68b0b8" stroke="#111" stroke-width="1.1"/>
<circle cx="1106.3" cy="155.3" r="4.2" fill="#80b4b4" stroke="#111" stroke-width="1.1"/>
<circle cx="1120.6" cy="152.6" r="4.2" fill="#94b4b4" stroke="#111" stroke-width="1.1"/>
<circle cx="1136.2" cy="150.1" r="4.2" fill="#a4b2b2" stroke="#111" stroke-width="1.1"/>
<circle cx="1449.8" cy="106.3" r="4.2" fill="#d81010" stroke="#111" stroke-width="1.1"/>
<circle cx="1383.6" cy="114.7" r="4.2" fill="#c05050" stroke="#111" stroke-width="1.1"/>
<circle cx="1321.2" cy="123.9" r="4.2" fill="#b86a6a" stroke="#111" stroke-width="1.1"/>
<circle cx="1258" cy="133.5" r="4.2" fill="#b88282" stroke="#111" stroke-width="1.1"/>
<circle cx="1202.2" cy="141.2" r="4.2" fill="#bc9c9c" stroke="#111" stroke-width="1.1"/>
<circle cx="1280.6" cy="261.7" r="4.2" fill="#a030b0" stroke="#111" stroke-width="1.1"/>
<circle cx="1244.2" cy="229" r="4.2" fill="#b460bc" stroke="#111" stroke-width="1.1"/>
<circle cx="1214.5" cy="202.6" r="4.2" fill="#b872bc" stroke="#111" stroke-width="1.1"/>
<circle cx="1189.4" cy="180.4" r="4.2" fill="#bc88bc" stroke="#111" stroke-width="1.1"/>
<circle cx="1169.3" cy="164.2" r="4.2" fill="#bea2be" stroke="#111" stroke-width="1.1"/>
<circle cx="1131" cy="395" r="4.2" fill="#2020b0" stroke="#111" stroke-width="1.1"/>
<circle cx="1137.4" cy="317.7" r="4.2" fill="#5050b0" stroke="#111" stroke-width="1.1"/>
<circle cx="1142.4" cy="256.2" r="4.2" fill="#6a6ab8" stroke="#111" stroke-width="1.1"/>
<circle cx="1146.2" cy="212.7" r="4.2" fill="#8484b8" stroke="#111" stroke-width="1.1"/>
<circle cx="1148.9" cy="176.8" r="4.2" fill="#9c9cbe" stroke="#111" stroke-width="1.1"/>
<rect x="1143.4" y="142.4" width="12.6" height="12.6" fill="#ffffff" fill-opacity="0.25" stroke="#000" stroke-width="2"/>
<circle cx="1151.2" cy="148.4" r="4.4" fill="#fff" stroke="#111" stroke-width="1.2"/>
<circle cx="1140.5" cy="168.3" r="4.3" fill="#000"/>
<rect x="1346.7" y="364" width="204.1" height="141" fill="#262626"/>
<g clip-path="url(#insclip)">
<rect x="1349.7" y="367" width="198.1" height="135" fill="#242424"/>
<g clip-path="url(#inloc)"><g filter="url(#blur6)"><path fill="#a2ff00" d="M1325.7 343h6v6h-6z"/><path fill="#a4ff00" d="M1331.7 343h6v6h-6z"/><path fill="#a7ff00" d="M1337.7 343h6v6h-6zM1325.7 361h6v6h-6z"/><path fill="#a9ff00" d="M1343.7 343h6v6h-6zM1337.7 349h6v6h-6z"/><path fill="#acff00" d="M1349.7 343h6v6h-6z"/><path fill="#afff00" d="M1355.7 343h6v6h-6zM1343.7 361h6v6h-6z"/><path fill="#b1ff00" d="M1361.7 343h6v6h-6zM1355.7 349h6v6h-6zM1343.7 367h6v6h-6z"/><path fill="#b4ff00" d="M1367.7 343h6v6h-6zM1349.7 367h6v6h-6z"/><path fill="#b7ff00" d="M1373.7 343h6v6h-6zM1361.7 361h6v6h-6zM1355.7 367h6v6h-6z"/><path fill="#b9ff00" d="M1379.7 343h6v6h-6zM1373.7 349h6v6h-6zM1361.7 367h6v6h-6zM1355.7 373h6v6h-6z"/><path fill="#bcff00" d="M1385.7 343h6v6h-6zM1379.7 349h6v6h-6zM1367.7 367h6v6h-6zM1361.7 373h6v6h-6z"/><path fill="#bfff00" d="M1391.7 343h6v6h-6zM1373.7 367h6v6h-6z"/><path fill="#c2ff00" d="M1397.7 343h6v6h-6zM1385.7 361h6v6h-6zM1379.7 367h6v6h-6z"/><path fill="#c4ff00" d="M1403.7 343h6v6h-6zM1397.7 349h6v6h-6zM1379.7 373h6v6h-6z"/><path fill="#c7ff00" d="M1409.7 343h6v6h-6zM1403.7 349h6v6h-6zM1391.7 367h6v6h-6zM1385.7 373h6v6h-6z"/><path fill="#caff00" d="M1415.7 343h6v6h-6zM1397.7 367h6v6h-6zM1391.7 373h6v6h-6z"/><path fill="#cdff00" d="M1421.7 343h6v6h-6zM1403.7 367h6v6h-6zM1397.7 373h6v6h-6z"/><path fill="#d0ff00" d="M1427.7 343h6v6h-6zM1409.7 367h6v6h-6zM1385.7 397h6v6h-6z"/><path fill="#d2ff00" d="M1433.7 343h6v6h-6zM1427.7 349h6v6h-6zM1409.7 373h6v6h-6zM1403.7 379h6v6h-6z"/><path fill="#d5ff00" d="M1439.7 343h6v6h-6zM1433.7 349h6v6h-6zM1415.7 373h6v6h-6zM1409.7 379h6v6h-6z"/><path fill="#d8ff00" d="M1445.7 343h6v6h-6zM1439.7 349h6v6h-6zM1421.7 373h6v6h-6zM1415.7 379h6v6h-6zM1397.7 403h6v6h-6z"/><path fill="#dbff00" d="M1451.7 343h6v6h-6zM1427.7 373h6v6h-6zM1421.7 379h6v6h-6zM1403.7 403h6v6h-6z"/><path fill="#deff00" d="M1457.7 343h6v6h-6zM1433.7 373h6v6h-6zM1427.7 379h6v6h-6z"/><path fill="#e1ff00" d="M1463.7 343h6v6h-6zM1439.7 373h6v6h-6zM1433.7 379h6v6h-6zM1409.7 409h6v6h-6z"/><path fill="#e4ff00" d="M1469.7 343h6v6h-6zM1445.7 373h6v6h-6zM1439.7 379h6v6h-6zM1415.7 409h6v6h-6z"/><path fill="#e7ff00" d="M1475.7 343h6v6h-6zM1451.7 373h6v6h-6zM1445.7 379h6v6h-6zM1421.7 409h6v6h-6zM1415.7 415h6v6h-6z"/><path fill="#eaff00" d="M1481.7 343h6v6h-6zM1457.7 373h6v6h-6zM1451.7 379h6v6h-6zM1421.7 415h6v6h-6z"/><path fill="#edff00" d="M1487.7 343h6v6h-6zM1463.7 373h6v6h-6zM1457.7 379h6v6h-6zM1427.7 415h6v6h-6z"/><path fill="#f0ff00" d="M1493.7 343h6v6h-6zM1469.7 373h6v6h-6zM1463.7 379h6v6h-6zM1457.7 385h6v6h-6zM1433.7 415h6v6h-6zM1427.7 421h6v6h-6z"/><path fill="#f2ff00" d="M1499.7 343h6v6h-6zM1493.7 349h6v6h-6zM1487.7 355h6v6h-6zM1457.7 391h6v6h-6zM1451.7 397h6v6h-6z"/><path fill="#f6ff00" d="M1505.7 343h6v6h-6zM1475.7 379h6v6h-6zM1469.7 385h6v6h-6zM1439.7 421h6v6h-6z"/><path fill="#f9ff00" d="M1511.7 343h6v6h-6zM1481.7 379h6v6h-6zM1475.7 385h6v6h-6zM1469.7 391h6v6h-6zM1439.7 427h6v6h-6z"/><path fill="#fcff00" d="M1517.7 343h6v6h-6zM1487.7 379h6v6h-6zM1481.7 385h6v6h-6zM1475.7 391h6v6h-6z"/><path fill="#ffff00" d="M1523.7 343h6v6h-6zM1487.7 385h6v6h-6zM1481.7 391h6v6h-6zM1475.7 397h6v6h-6z"/><path fill="#fffc00" d="M1529.7 343h6v6h-6zM1493.7 385h6v6h-6zM1487.7 391h6v6h-6zM1481.7 397h6v6h-6z"/><path fill="#fff900" d="M1535.7 343h6v6h-6zM1493.7 391h6v6h-6zM1487.7 397h6v6h-6zM1481.7 403h6v6h-6z"/><path fill="#fff600" d="M1541.7 343h6v6h-6zM1499.7 391h6v6h-6zM1493.7 397h6v6h-6zM1487.7 403h6v6h-6z"/><path fill="#fff300" d="M1547.7 343h6v6h-6zM1505.7 391h6v6h-6zM1499.7 397h6v6h-6zM1493.7 403h6v6h-6zM1487.7 409h6v6h-6z"/><path fill="#fff100" d="M1553.7 343h6v6h-6zM1547.7 349h6v6h-6zM1541.7 355h6v6h-6zM1535.7 361h6v6h-6zM1487.7 415h6v6h-6zM1481.7 421h6v6h-6zM1475.7 427h6v6h-6zM1469.7 433h6v6h-6z"/><path fill="#ffee00" d="M1559.7 343h6v6h-6zM1553.7 349h6v6h-6zM1547.7 355h6v6h-6zM1493.7 415h6v6h-6zM1487.7 421h6v6h-6zM1481.7 427h6v6h-6zM1475.7 433h6v6h-6z"/><path fill="#ffeb00" d="M1565.7 343h6v6h-6zM1559.7 349h6v6h-6zM1505.7 409h6v6h-6zM1499.7 415h6v6h-6zM1493.7 421h6v6h-6zM1487.7 427h6v6h-6zM1481.7 433h6v6h-6z"/><path fill="#ffe800" d="M1571.7 343h6v6h-6zM1511.7 409h6v6h-6zM1505.7 415h6v6h-6zM1499.7 421h6v6h-6zM1493.7 427h6v6h-6zM1487.7 433h6v6h-6z"/><path fill="#a3ff00" d="M1325.7 349h6v6h-6z"/><path fill="#a6ff00" d="M1331.7 349h6v6h-6z"/><path fill="#abff00" d="M1343.7 349h6v6h-6zM1337.7 355h6v6h-6z"/><path fill="#aeff00" d="M1349.7 349h6v6h-6zM1337.7 367h6v6h-6z"/><path fill="#b3ff00" d="M1361.7 349h6v6h-6zM1355.7 355h6v6h-6z"/><path fill="#b6ff00" d="M1367.7 349h6v6h-6zM1349.7 373h6v6h-6z"/><path fill="#beff00" d="M1385.7 349h6v6h-6zM1379.7 355h6v6h-6zM1367.7 373h6v6h-6zM1361.7 379h6v6h-6z"/><path fill="#c1ff00" d="M1391.7 349h6v6h-6zM1373.7 373h6v6h-6z"/><path fill="#c9ff00" d="M1409.7 349h6v6h-6zM1403.7 355h6v6h-6zM1385.7 379h6v6h-6z"/><path fill="#ccff00" d="M1415.7 349h6v6h-6zM1409.7 355h6v6h-6zM1391.7 379h6v6h-6z"/><path fill="#cfff00" d="M1421.7 349h6v6h-6zM1403.7 373h6v6h-6zM1397.7 379h6v6h-6z"/><path fill="#daff00" d="M1445.7 349h6v6h-6zM1439.7 355h6v6h-6zM1415.7 385h6v6h-6zM1409.7 391h6v6h-6z"/><path fill="#ddff00" d="M1451.7 349h6v6h-6zM1445.7 355h6v6h-6zM1421.7 385h6v6h-6zM1415.7 391h6v6h-6z"/><path fill="#e0ff00" d="M1457.7 349h6v6h-6zM1451.7 355h6v6h-6zM1427.7 385h6v6h-6zM1421.7 391h6v6h-6z"/><path fill="#e3ff00" d="M1463.7 349h6v6h-6zM1457.7 355h6v6h-6zM1433.7 385h6v6h-6zM1427.7 391h6v6h-6z"/><path fill="#e6ff00" d="M1469.7 349h6v6h-6zM1463.7 355h6v6h-6zM1439.7 385h6v6h-6zM1433.7 391h6v6h-6z"/><path fill="#e9ff00" d="M1475.7 349h6v6h-6zM1469.7 355h6v6h-6zM1445.7 385h6v6h-6zM1439.7 391h6v6h-6z"/><path fill="#ecff00" d="M1481.7 349h6v6h-6zM1475.7 355h6v6h-6zM1451.7 385h6v6h-6zM1445.7 391h6v6h-6z"/><path fill="#efff00" d="M1487.7 349h6v6h-6zM1481.7 355h6v6h-6zM1451.7 391h6v6h-6zM1445.7 397h6v6h-6z"/><path fill="#f5ff00" d="M1499.7 349h6v6h-6zM1493.7 355h6v6h-6zM1463.7 391h6v6h-6zM1457.7 397h6v6h-6zM1451.7 403h6v6h-6z"/><path fill="#f8ff00" d="M1505.7 349h6v6h-6zM1499.7 355h6v6h-6zM1463.7 397h6v6h-6zM1457.7 403h6v6h-6z"/><path fill="#fbff00" d="M1511.7 349h6v6h-6zM1505.7 355h6v6h-6zM1469.7 397h6v6h-6zM1463.7 403h6v6h-6zM1457.7 409h6v6h-6z"/><path fill="#feff00" d="M1517.7 349h6v6h-6zM1511.7 355h6v6h-6zM1505.7 361h6v6h-6zM1469.7 403h6v6h-6zM1463.7 409h6v6h-6z"/><path fill="#fffd00" d="M1523.7 349h6v6h-6zM1517.7 355h6v6h-6zM1511.7 361h6v6h-6zM1475.7 403h6v6h-6zM1469.7 409h6v6h-6zM1463.7 415h6v6h-6z"/><path fill="#fffa00" d="M1529.7 349h6v6h-6zM1523.7 355h6v6h-6zM1517.7 361h6v6h-6zM1475.7 409h6v6h-6zM1469.7 415h6v6h-6zM1463.7 421h6v6h-6z"/><path fill="#fff700" d="M1535.7 349h6v6h-6zM1529.7 355h6v6h-6zM1523.7 361h6v6h-6zM1481.7 409h6v6h-6zM1475.7 415h6v6h-6zM1469.7 421h6v6h-6zM1463.7 427h6v6h-6z"/><path fill="#fff400" d="M1541.7 349h6v6h-6zM1535.7 355h6v6h-6zM1529.7 361h6v6h-6zM1481.7 415h6v6h-6zM1475.7 421h6v6h-6zM1469.7 427h6v6h-6z"/><path fill="#ffe900" d="M1565.7 349h6v6h-6zM1559.7 355h6v6h-6zM1553.7 361h6v6h-6zM1547.7 367h6v6h-6zM1541.7 373h6v6h-6zM1481.7 439h6v6h-6zM1475.7 445h6v6h-6z"/><path fill="#ffe600" d="M1571.7 349h6v6h-6zM1565.7 355h6v6h-6zM1559.7 361h6v6h-6zM1553.7 367h6v6h-6zM1493.7 433h6v6h-6zM1487.7 439h6v6h-6zM1481.7 445h6v6h-6zM1475.7 451h6v6h-6z"/><path fill="#a5ff00" d="M1325.7 355h6v6h-6z"/><path fill="#a8ff00" d="M1331.7 355h6v6h-6z"/><path fill="#adff00" d="M1343.7 355h6v6h-6zM1337.7 361h6v6h-6z"/><path fill="#b0ff00" d="M1349.7 355h6v6h-6z"/><path fill="#b5ff00" d="M1361.7 355h6v6h-6zM1355.7 361h6v6h-6z"/><path fill="#b8ff00" d="M1367.7 355h6v6h-6z"/><path fill="#bbff00" d="M1373.7 355h6v6h-6zM1355.7 379h6v6h-6z"/><path fill="#c0ff00" d="M1385.7 355h6v6h-6zM1379.7 361h6v6h-6zM1367.7 379h6v6h-6z"/><path fill="#c3ff00" d="M1391.7 355h6v6h-6zM1373.7 379h6v6h-6zM1367.7 385h6v6h-6z"/><path fill="#c6ff00" d="M1397.7 355h6v6h-6zM1379.7 379h6v6h-6zM1373.7 385h6v6h-6z"/><path fill="#ceff00" d="M1415.7 355h6v6h-6zM1409.7 361h6v6h-6zM1391.7 385h6v6h-6zM1385.7 391h6v6h-6z"/><path fill="#d1ff00" d="M1421.7 355h6v6h-6zM1415.7 361h6v6h-6zM1397.7 385h6v6h-6zM1391.7 391h6v6h-6z"/><path fill="#d4ff00" d="M1427.7 355h6v6h-6zM1421.7 361h6v6h-6zM1403.7 385h6v6h-6zM1397.7 391h6v6h-6z"/><path fill="#d7ff00" d="M1433.7 355h6v6h-6zM1409.7 385h6v6h-6zM1403.7 391h6v6h-6z"/><path fill="#ffec00" d="M1553.7 355h6v6h-6zM1547.7 361h6v6h-6zM1541.7 367h6v6h-6zM1535.7 373h6v6h-6zM1529.7 379h6v6h-6zM1475.7 439h6v6h-6zM1469.7 445h6v6h-6z"/><path fill="#ffe300" d="M1571.7 355h6v6h-6zM1505.7 427h6v6h-6zM1499.7 433h6v6h-6zM1493.7 439h6v6h-6zM1487.7 445h6v6h-6zM1481.7 451h6v6h-6z"/><path fill="#aaff00" d="M1331.7 361h6v6h-6z"/><path fill="#b2ff00" d="M1349.7 361h6v6h-6z"/><path fill="#baff00" d="M1367.7 361h6v6h-6z"/><path fill="#bdff00" d="M1373.7 361h6v6h-6z"/><path fill="#c5ff00" d="M1391.7 361h6v6h-6zM1385.7 367h6v6h-6z"/><path fill="#c8ff00" d="M1397.7 361h6v6h-6zM1379.7 385h6v6h-6z"/><path fill="#cbff00" d="M1403.7 361h6v6h-6zM1385.7 385h6v6h-6zM1379.7 391h6v6h-6z"/><path fill="#d6ff00" d="M1427.7 361h6v6h-6zM1421.7 367h6v6h-6zM1397.7 397h6v6h-6z"/><path fill="#d9ff00" d="M1433.7 361h6v6h-6zM1427.7 367h6v6h-6zM1403.7 397h6v6h-6z"/><path fill="#dcff00" d="M1439.7 361h6v6h-6zM1433.7 367h6v6h-6zM1409.7 397h6v6h-6z"/><path fill="#dfff00" d="M1445.7 361h6v6h-6zM1439.7 367h6v6h-6zM1415.7 397h6v6h-6zM1409.7 403h6v6h-6z"/><path fill="#e2ff00" d="M1451.7 361h6v6h-6zM1445.7 367h6v6h-6zM1421.7 397h6v6h-6zM1415.7 403h6v6h-6z"/><path fill="#e5ff00" d="M1457.7 361h6v6h-6zM1451.7 367h6v6h-6zM1427.7 397h6v6h-6zM1421.7 403h6v6h-6z"/><path fill="#e8ff00" d="M1463.7 361h6v6h-6zM1457.7 367h6v6h-6zM1433.7 397h6v6h-6zM1427.7 403h6v6h-6z"/><path fill="#ebff00" d="M1469.7 361h6v6h-6zM1463.7 367h6v6h-6zM1439.7 397h6v6h-6zM1433.7 403h6v6h-6zM1427.7 409h6v6h-6z"/><path fill="#eeff00" d="M1475.7 361h6v6h-6zM1469.7 367h6v6h-6zM1439.7 403h6v6h-6zM1433.7 409h6v6h-6z"/><path fill="#f1ff00" d="M1481.7 361h6v6h-6zM1475.7 367h6v6h-6zM1445.7 403h6v6h-6zM1439.7 409h6v6h-6z"/><path fill="#f4ff00" d="M1487.7 361h6v6h-6zM1481.7 367h6v6h-6zM1445.7 409h6v6h-6zM1439.7 415h6v6h-6z"/><path fill="#f7ff00" d="M1493.7 361h6v6h-6zM1487.7 367h6v6h-6zM1481.7 373h6v6h-6zM1451.7 409h6v6h-6zM1445.7 415h6v6h-6z"/><path fill="#faff00" d="M1499.7 361h6v6h-6zM1493.7 367h6v6h-6zM1487.7 373h6v6h-6zM1451.7 415h6v6h-6zM1445.7 421h6v6h-6z"/><path fill="#ffef00" d="M1541.7 361h6v6h-6zM1535.7 367h6v6h-6zM1529.7 373h6v6h-6zM1523.7 379h6v6h-6zM1517.7 385h6v6h-6zM1469.7 439h6v6h-6z"/><path fill="#ffe400" d="M1565.7 361h6v6h-6zM1559.7 367h6v6h-6zM1553.7 373h6v6h-6zM1547.7 379h6v6h-6zM1541.7 385h6v6h-6zM1535.7 391h6v6h-6z"/><path fill="#ffe100" d="M1571.7 361h6v6h-6zM1565.7 367h6v6h-6zM1559.7 373h6v6h-6zM1553.7 379h6v6h-6z"/><path fill="#a9ff02" d="M1325.7 367h6v6h-6z"/><path fill="#acff01" d="M1331.7 367h6v6h-6z"/><path fill="#d3ff00" d="M1415.7 367h6v6h-6zM1391.7 397h6v6h-6z"/><path fill="#fdff00" d="M1499.7 367h6v6h-6zM1493.7 373h6v6h-6zM1457.7 415h6v6h-6zM1451.7 421h6v6h-6zM1445.7 427h6v6h-6z"/><path fill="#fffe00" d="M1505.7 367h6v6h-6zM1499.7 373h6v6h-6zM1493.7 379h6v6h-6zM1457.7 421h6v6h-6zM1451.7 427h6v6h-6zM1445.7 433h6v6h-6z"/><path fill="#fffb00" d="M1511.7 367h6v6h-6zM1505.7 373h6v6h-6zM1499.7 379h6v6h-6zM1457.7 427h6v6h-6zM1451.7 433h6v6h-6z"/><path fill="#fff800" d="M1517.7 367h6v6h-6zM1511.7 373h6v6h-6zM1505.7 379h6v6h-6zM1499.7 385h6v6h-6zM1457.7 433h6v6h-6z"/><path fill="#fff500" d="M1523.7 367h6v6h-6zM1517.7 373h6v6h-6zM1511.7 379h6v6h-6zM1505.7 385h6v6h-6zM1463.7 433h6v6h-6zM1457.7 439h6v6h-6z"/><path fill="#fff200" d="M1529.7 367h6v6h-6zM1523.7 373h6v6h-6zM1517.7 379h6v6h-6zM1511.7 385h6v6h-6zM1463.7 439h6v6h-6z"/><path fill="#ffdf00" d="M1571.7 367h6v6h-6zM1565.7 373h6v6h-6zM1559.7 379h6v6h-6zM1553.7 385h6v6h-6zM1547.7 391h6v6h-6zM1541.7 397h6v6h-6zM1535.7 403h6v6h-6zM1529.7 409h6v6h-6z"/><path fill="#abff03" d="M1325.7 373h6v6h-6z"/><path fill="#aeff02" d="M1331.7 373h6v6h-6z"/><path fill="#b0ff01" d="M1337.7 373h6v6h-6z"/><path fill="#b3ff01" d="M1343.7 373h6v6h-6z"/><path fill="#f3ff00" d="M1475.7 373h6v6h-6zM1469.7 379h6v6h-6zM1463.7 385h6v6h-6zM1433.7 421h6v6h-6z"/><path fill="#ffe700" d="M1547.7 373h6v6h-6zM1541.7 379h6v6h-6zM1535.7 385h6v6h-6zM1529.7 391h6v6h-6zM1523.7 397h6v6h-6zM1517.7 403h6v6h-6z"/><path fill="#ffdc00" d="M1571.7 373h6v6h-6zM1565.7 379h6v6h-6zM1559.7 385h6v6h-6zM1553.7 391h6v6h-6z"/><path fill="#adff04" d="M1325.7 379h6v6h-6z"/><path fill="#b0ff03" d="M1331.7 379h6v6h-6z"/><path fill="#b2ff03" d="M1337.7 379h6v6h-6z"/><path fill="#b5ff02" d="M1343.7 379h6v6h-6z"/><path fill="#b8ff01" d="M1349.7 379h6v6h-6z"/><path fill="#ffea00" d="M1535.7 379h6v6h-6zM1529.7 385h6v6h-6zM1523.7 391h6v6h-6zM1517.7 397h6v6h-6zM1511.7 403h6v6h-6z"/><path fill="#ffda00" d="M1571.7 379h6v6h-6zM1565.7 385h6v6h-6zM1559.7 391h6v6h-6zM1553.7 397h6v6h-6zM1547.7 403h6v6h-6zM1541.7 409h6v6h-6zM1535.7 415h6v6h-6zM1529.7 421h6v6h-6zM1523.7 427h6v6h-6z"/><path fill="#afff05" d="M1325.7 385h6v6h-6z"/><path fill="#b2ff05" d="M1331.7 385h6v6h-6z"/><path fill="#b5ff04" d="M1337.7 385h6v6h-6z"/><path fill="#b7ff03" d="M1343.7 385h6v6h-6z"/><path fill="#baff02" d="M1349.7 385h6v6h-6z"/><path fill="#bdff02" d="M1355.7 385h6v6h-6z"/><path fill="#c0ff01" d="M1361.7 385h6v6h-6z"/><path fill="#ffed00" d="M1523.7 385h6v6h-6zM1517.7 391h6v6h-6zM1511.7 397h6v6h-6zM1505.7 403h6v6h-6zM1499.7 409h6v6h-6z"/><path fill="#ffe200" d="M1547.7 385h6v6h-6zM1541.7 391h6v6h-6zM1535.7 397h6v6h-6zM1529.7 403h6v6h-6zM1523.7 409h6v6h-6zM1517.7 415h6v6h-6zM1511.7 421h6v6h-6z"/><path fill="#ffd700" d="M1571.7 385h6v6h-6zM1565.7 391h6v6h-6zM1559.7 397h6v6h-6zM1553.7 403h6v6h-6z"/><path fill="#b1ff07" d="M1325.7 391h6v6h-6z"/><path fill="#b4ff06" d="M1331.7 391h6v6h-6z"/><path fill="#b7ff05" d="M1337.7 391h6v6h-6z"/><path fill="#b9ff04" d="M1343.7 391h6v6h-6z"/><path fill="#bcff04" d="M1349.7 391h6v6h-6z"/><path fill="#bfff03" d="M1355.7 391h6v6h-6z"/><path fill="#c2ff02" d="M1361.7 391h6v6h-6z"/><path fill="#c5ff01" d="M1367.7 391h6v6h-6z"/><path fill="#c8ff01" d="M1373.7 391h6v6h-6z"/><path fill="#fff000" d="M1511.7 391h6v6h-6zM1505.7 397h6v6h-6zM1499.7 403h6v6h-6zM1493.7 409h6v6h-6z"/><path fill="#ffd500" d="M1571.7 391h6v6h-6zM1565.7 397h6v6h-6zM1559.7 403h6v6h-6zM1553.7 409h6v6h-6zM1547.7 415h6v6h-6zM1541.7 421h6v6h-6zM1535.7 427h6v6h-6zM1529.7 433h6v6h-6zM1523.7 439h6v6h-6zM1517.7 445h6v6h-6zM1511.7 451h6v6h-6z"/><path fill="#b3ff08" d="M1325.7 397h6v6h-6z"/><path fill="#b6ff07" d="M1331.7 397h6v6h-6z"/><path fill="#b9ff06" d="M1337.7 397h6v6h-6z"/><path fill="#bcff06" d="M1343.7 397h6v6h-6z"/><path fill="#beff05" d="M1349.7 397h6v6h-6z"/><path fill="#c1ff04" d="M1355.7 397h6v6h-6z"/><path fill="#c4ff03" d="M1361.7 397h6v6h-6z"/><path fill="#c7ff03" d="M1367.7 397h6v6h-6z"/><path fill="#caff02" d="M1373.7 397h6v6h-6z"/><path fill="#cdff01" d="M1379.7 397h6v6h-6z"/><path fill="#ffe500" d="M1529.7 397h6v6h-6zM1523.7 403h6v6h-6zM1517.7 409h6v6h-6zM1511.7 415h6v6h-6zM1505.7 421h6v6h-6zM1499.7 427h6v6h-6z"/><path fill="#ffdd00" d="M1547.7 397h6v6h-6zM1541.7 403h6v6h-6zM1535.7 409h6v6h-6zM1529.7 415h6v6h-6zM1523.7 421h6v6h-6zM1517.7 427h6v6h-6zM1511.7 433h6v6h-6zM1505.7 439h6v6h-6zM1499.7 445h6v6h-6z"/><path fill="#ffd200" d="M1571.7 397h6v6h-6z"/><path fill="#b5ff09" d="M1325.7 403h6v6h-6z"/><path fill="#b8ff08" d="M1331.7 403h6v6h-6z"/><path fill="#bbff08" d="M1337.7 403h6v6h-6z"/><path fill="#beff07" d="M1343.7 403h6v6h-6z"/><path fill="#c1ff06" d="M1349.7 403h6v6h-6z"/><path fill="#c4ff05" d="M1355.7 403h6v6h-6z"/><path fill="#c6ff05" d="M1361.7 403h6v6h-6z"/><path fill="#c9ff04" d="M1367.7 403h6v6h-6z"/><path fill="#ccff03" d="M1373.7 403h6v6h-6z"/><path fill="#cfff02" d="M1379.7 403h6v6h-6z"/><path fill="#d2ff02" d="M1385.7 403h6v6h-6z"/><path fill="#d5ff01" d="M1391.7 403h6v6h-6z"/><path fill="#ffd300" d="M1565.7 403h6v6h-6zM1559.7 409h6v6h-6zM1553.7 415h6v6h-6zM1547.7 421h6v6h-6zM1541.7 427h6v6h-6zM1535.7 433h6v6h-6zM1529.7 439h6v6h-6zM1523.7 445h6v6h-6zM1517.7 451h6v6h-6zM1511.7 457h6v6h-6zM1505.7 463h6v6h-6z"/><path fill="#ffd000" d="M1571.7 403h6v6h-6zM1565.7 409h6v6h-6zM1559.7 415h6v6h-6zM1553.7 421h6v6h-6zM1547.7 427h6v6h-6zM1541.7 433h6v6h-6zM1535.7 439h6v6h-6zM1529.7 445h6v6h-6zM1523.7 451h6v6h-6zM1517.7 457h6v6h-6zM1511.7 463h6v6h-6zM1505.7 469h6v6h-6z"/><path fill="#b7ff0a" d="M1325.7 409h6v6h-6z"/><path fill="#baff0a" d="M1331.7 409h6v6h-6z"/><path fill="#bdff09" d="M1337.7 409h6v6h-6z"/><path fill="#c0ff08" d="M1343.7 409h6v6h-6z"/><path fill="#c3ff08" d="M1349.7 409h6v6h-6z"/><path fill="#c6ff07" d="M1355.7 409h6v6h-6z"/><path fill="#c9ff06" d="M1361.7 409h6v6h-6z"/><path fill="#ccff05" d="M1367.7 409h6v6h-6z"/><path fill="#cfff05" d="M1373.7 409h6v6h-6z"/><path fill="#d2ff04" d="M1379.7 409h6v6h-6z"/><path fill="#d5ff03" d="M1385.7 409h6v6h-6z"/><path fill="#d8ff02" d="M1391.7 409h6v6h-6z"/><path fill="#dbff01" d="M1397.7 409h6v6h-6z"/><path fill="#deff01" d="M1403.7 409h6v6h-6z"/><path fill="#ffd800" d="M1547.7 409h6v6h-6zM1541.7 415h6v6h-6zM1535.7 421h6v6h-6zM1529.7 427h6v6h-6zM1523.7 433h6v6h-6zM1517.7 439h6v6h-6zM1511.7 445h6v6h-6zM1505.7 451h6v6h-6zM1499.7 457h6v6h-6z"/><path fill="#ffce00" d="M1571.7 409h6v6h-6zM1565.7 415h6v6h-6zM1559.7 421h6v6h-6zM1553.7 427h6v6h-6zM1547.7 433h6v6h-6zM1541.7 439h6v6h-6zM1535.7 445h6v6h-6zM1529.7 451h6v6h-6zM1523.7 457h6v6h-6zM1517.7 463h6v6h-6zM1511.7 469h6v6h-6z"/><path fill="#b9ff0c" d="M1325.7 415h6v6h-6z"/><path fill="#bcff0b" d="M1331.7 415h6v6h-6z"/><path fill="#bfff0a" d="M1337.7 415h6v6h-6z"/><path fill="#c2ff0a" d="M1343.7 415h6v6h-6z"/><path fill="#c5ff09" d="M1349.7 415h6v6h-6z"/><path fill="#c8ff08" d="M1355.7 415h6v6h-6z"/><path fill="#cbff07" d="M1361.7 415h6v6h-6z"/><path fill="#ceff07" d="M1367.7 415h6v6h-6z"/><path fill="#d1ff06" d="M1373.7 415h6v6h-6z"/><path fill="#d4ff05" d="M1379.7 415h6v6h-6z"/><path fill="#d7ff04" d="M1385.7 415h6v6h-6z"/><path fill="#daff04" d="M1391.7 415h6v6h-6z"/><path fill="#ddff03" d="M1397.7 415h6v6h-6z"/><path fill="#e1ff02" d="M1403.7 415h6v6h-6z"/><path fill="#e4ff01" d="M1409.7 415h6v6h-6z"/><path fill="#ffe000" d="M1523.7 415h6v6h-6zM1517.7 421h6v6h-6zM1511.7 427h6v6h-6zM1505.7 433h6v6h-6zM1499.7 439h6v6h-6zM1493.7 445h6v6h-6zM1487.7 451h6v6h-6z"/><path fill="#ffcb00" d="M1571.7 415h6v6h-6zM1565.7 421h6v6h-6zM1559.7 427h6v6h-6zM1553.7 433h6v6h-6zM1547.7 439h6v6h-6zM1541.7 445h6v6h-6zM1535.7 451h6v6h-6zM1529.7 457h6v6h-6zM1523.7 463h6v6h-6zM1517.7 469h6v6h-6z"/><path fill="#bcff0d" d="M1325.7 421h6v6h-6z"/><path fill="#bfff0c" d="M1331.7 421h6v6h-6z"/><path fill="#c2ff0c" d="M1337.7 421h6v6h-6z"/><path fill="#c4ff0b" d="M1343.7 421h6v6h-6z"/><path fill="#c7ff0a" d="M1349.7 421h6v6h-6z"/><path fill="#caff09" d="M1355.7 421h6v6h-6z"/><path fill="#ceff09" d="M1361.7 421h6v6h-6z"/><path fill="#d1ff08" d="M1367.7 421h6v6h-6z"/><path fill="#d4ff07" d="M1373.7 421h6v6h-6z"/><path fill="#d7ff06" d="M1379.7 421h6v6h-6z"/><path fill="#daff06" d="M1385.7 421h6v6h-6z"/><path fill="#ddff05" d="M1391.7 421h6v6h-6z"/><path fill="#e0ff04" d="M1397.7 421h6v6h-6z"/><path fill="#e3ff03" d="M1403.7 421h6v6h-6z"/><path fill="#e6ff03" d="M1409.7 421h6v6h-6z"/><path fill="#eaff02" d="M1415.7 421h6v6h-6z"/><path fill="#edff01" d="M1421.7 421h6v6h-6z"/><path fill="#ffc900" d="M1571.7 421h6v6h-6zM1565.7 427h6v6h-6zM1559.7 433h6v6h-6zM1553.7 439h6v6h-6zM1547.7 445h6v6h-6zM1541.7 451h6v6h-6zM1535.7 457h6v6h-6zM1529.7 463h6v6h-6zM1523.7 469h6v6h-6zM1517.7 475h6v6h-6z"/><path fill="#beff0f" d="M1325.7 427h6v6h-6z"/><path fill="#c1ff0e" d="M1331.7 427h6v6h-6z"/><path fill="#c4ff0d" d="M1337.7 427h6v6h-6z"/><path fill="#c7ff0c" d="M1343.7 427h6v6h-6z"/><path fill="#caff0c" d="M1349.7 427h6v6h-6z"/><path fill="#cdff0b" d="M1355.7 427h6v6h-6z"/><path fill="#d0ff0a" d="M1361.7 427h6v6h-6z"/><path fill="#d3ff09" d="M1367.7 427h6v6h-6z"/><path fill="#d6ff09" d="M1373.7 427h6v6h-6z"/><path fill="#d9ff08" d="M1379.7 427h6v6h-6z"/><path fill="#dcff07" d="M1385.7 427h6v6h-6z"/><path fill="#dfff06" d="M1391.7 427h6v6h-6z"/><path fill="#e3ff05" d="M1397.7 427h6v6h-6z"/><path fill="#e6ff05" d="M1403.7 427h6v6h-6z"/><path fill="#e9ff04" d="M1409.7 427h6v6h-6z"/><path fill="#ecff03" d="M1415.7 427h6v6h-6z"/><path fill="#f0ff02" d="M1421.7 427h6v6h-6z"/><path fill="#f3ff01" d="M1427.7 427h6v6h-6z"/><path fill="#f6ff01" d="M1433.7 427h6v6h-6z"/><path fill="#ffc700" d="M1571.7 427h6v6h-6zM1565.7 433h6v6h-6zM1559.7 439h6v6h-6zM1553.7 445h6v6h-6zM1547.7 451h6v6h-6zM1541.7 457h6v6h-6z"/><path fill="#c0ff10" d="M1325.7 433h6v6h-6z"/><path fill="#c3ff0f" d="M1331.7 433h6v6h-6z"/><path fill="#c6ff0e" d="M1337.7 433h6v6h-6z"/><path fill="#c9ff0e" d="M1343.7 433h6v6h-6z"/><path fill="#ccff0d" d="M1349.7 433h6v6h-6z"/><path fill="#cfff0c" d="M1355.7 433h6v6h-6z"/><path fill="#d2ff0b" d="M1361.7 433h6v6h-6z"/><path fill="#d6ff0b" d="M1367.7 433h6v6h-6z"/><path fill="#d9ff0a" d="M1373.7 433h6v6h-6z"/><path fill="#dcff09" d="M1379.7 433h6v6h-6z"/><path fill="#dfff08" d="M1385.7 433h6v6h-6z"/><path fill="#e2ff08" d="M1391.7 433h6v6h-6z"/><path fill="#e5ff07" d="M1397.7 433h6v6h-6z"/><path fill="#e9ff06" d="M1403.7 433h6v6h-6z"/><path fill="#ecff05" d="M1409.7 433h6v6h-6z"/><path fill="#efff04" d="M1415.7 433h6v6h-6z"/><path fill="#f2ff04" d="M1421.7 433h6v6h-6z"/><path fill="#f6ff03" d="M1427.7 433h6v6h-6z"/><path fill="#f9ff02" d="M1433.7 433h6v6h-6z"/><path fill="#fcff01" d="M1439.7 433h6v6h-6z"/><path fill="#ffdb00" d="M1517.7 433h6v6h-6zM1511.7 439h6v6h-6zM1505.7 445h6v6h-6zM1499.7 451h6v6h-6zM1493.7 457h6v6h-6z"/><path fill="#ffc400" d="M1571.7 433h6v6h-6zM1565.7 439h6v6h-6zM1559.7 445h6v6h-6zM1553.7 451h6v6h-6zM1547.7 457h6v6h-6zM1541.7 463h6v6h-6zM1535.7 469h6v6h-6zM1529.7 475h6v6h-6zM1523.7 481h6v6h-6z"/><path fill="#c2ff11" d="M1325.7 439h6v6h-6z"/><path fill="#c5ff11" d="M1331.7 439h6v6h-6z"/><path fill="#c8ff10" d="M1337.7 439h6v6h-6z"/><path fill="#ccff0f" d="M1343.7 439h6v6h-6z"/><path fill="#cfff0e" d="M1349.7 439h6v6h-6z"/><path fill="#d2ff0e" d="M1355.7 439h6v6h-6z"/><path fill="#d5ff0d" d="M1361.7 439h6v6h-6z"/><path fill="#d8ff0c" d="M1367.7 439h6v6h-6z"/><path fill="#dbff0b" d="M1373.7 439h6v6h-6z"/><path fill="#deff0b" d="M1379.7 439h6v6h-6z"/><path fill="#e2ff0a" d="M1385.7 439h6v6h-6z"/><path fill="#e5ff09" d="M1391.7 439h6v6h-6z"/><path fill="#e8ff08" d="M1397.7 439h6v6h-6z"/><path fill="#ebff07" d="M1403.7 439h6v6h-6z"/><path fill="#efff07" d="M1409.7 439h6v6h-6z"/><path fill="#f2ff06" d="M1415.7 439h6v6h-6z"/><path fill="#f5ff05" d="M1421.7 439h6v6h-6z"/><path fill="#f9ff04" d="M1427.7 439h6v6h-6z"/><path fill="#fcff03" d="M1433.7 439h6v6h-6z"/><path fill="#ffff03" d="M1439.7 439h6v6h-6z"/><path fill="#fffb02" d="M1445.7 439h6v6h-6z"/><path fill="#fff801" d="M1451.7 439h6v6h-6z"/><path fill="#ffc200" d="M1571.7 439h6v6h-6zM1565.7 445h6v6h-6zM1559.7 451h6v6h-6zM1553.7 457h6v6h-6zM1547.7 463h6v6h-6zM1541.7 469h6v6h-6zM1535.7 475h6v6h-6zM1529.7 481h6v6h-6z"/><path fill="#c5ff13" d="M1325.7 445h6v6h-6z"/><path fill="#c8ff12" d="M1331.7 445h6v6h-6z"/><path fill="#cbff11" d="M1337.7 445h6v6h-6z"/><path fill="#ceff11" d="M1343.7 445h6v6h-6z"/><path fill="#d1ff10" d="M1349.7 445h6v6h-6z"/><path fill="#d4ff0f" d="M1355.7 445h6v6h-6z"/><path fill="#d7ff0e" d="M1361.7 445h6v6h-6z"/><path fill="#dbff0e" d="M1367.7 445h6v6h-6z"/><path fill="#deff0d" d="M1373.7 445h6v6h-6z"/><path fill="#e1ff0c" d="M1379.7 445h6v6h-6z"/><path fill="#e4ff0b" d="M1385.7 445h6v6h-6z"/><path fill="#e8ff0a" d="M1391.7 445h6v6h-6z"/><path fill="#ebff0a" d="M1397.7 445h6v6h-6z"/><path fill="#eeff09" d="M1403.7 445h6v6h-6z"/><path fill="#f1ff08" d="M1409.7 445h6v6h-6z"/><path fill="#f5ff07" d="M1415.7 445h6v6h-6z"/><path fill="#f8ff06" d="M1421.7 445h6v6h-6z"/><path fill="#fbff06" d="M1427.7 445h6v6h-6z"/><path fill="#ffff05" d="M1433.7 445h6v6h-6z"/><path fill="#fffc04" d="M1439.7 445h6v6h-6z"/><path fill="#fff803" d="M1445.7 445h6v6h-6z"/><path fill="#fff502" d="M1451.7 445h6v6h-6z"/><path fill="#fff201" d="M1457.7 445h6v6h-6z"/><path fill="#ffef01" d="M1463.7 445h6v6h-6z"/><path fill="#ffc000" d="M1571.7 445h6v6h-6zM1565.7 451h6v6h-6zM1559.7 457h6v6h-6z"/><path fill="#c7ff14" d="M1325.7 451h6v6h-6z"/><path fill="#caff14" d="M1331.7 451h6v6h-6z"/><path fill="#cdff13" d="M1337.7 451h6v6h-6z"/><path fill="#d0ff12" d="M1343.7 451h6v6h-6z"/><path fill="#d4ff11" d="M1349.7 451h6v6h-6z"/><path fill="#d7ff11" d="M1355.7 451h6v6h-6z"/><path fill="#daff10" d="M1361.7 451h6v6h-6z"/><path fill="#ddff0f" d="M1367.7 451h6v6h-6z"/><path fill="#e0ff0e" d="M1373.7 451h6v6h-6z"/><path fill="#e4ff0d" d="M1379.7 451h6v6h-6z"/><path fill="#e7ff0d" d="M1385.7 451h6v6h-6z"/><path fill="#eaff0c" d="M1391.7 451h6v6h-6z"/><path fill="#eeff0b" d="M1397.7 451h6v6h-6z"/><path fill="#f1ff0a" d="M1403.7 451h6v6h-6z"/><path fill="#f4ff09" d="M1409.7 451h6v6h-6z"/><path fill="#f8ff09" d="M1415.7 451h6v6h-6z"/><path fill="#fbff08" d="M1421.7 451h6v6h-6z"/><path fill="#ffff07" d="M1427.7 451h6v6h-6z"/><path fill="#fffc06" d="M1433.7 451h6v6h-6z"/><path fill="#fff905" d="M1439.7 451h6v6h-6z"/><path fill="#fff504" d="M1445.7 451h6v6h-6z"/><path fill="#fff204" d="M1451.7 451h6v6h-6z"/><path fill="#ffef03" d="M1457.7 451h6v6h-6z"/><path fill="#ffec02" d="M1463.7 451h6v6h-6z"/><path fill="#ffe901" d="M1469.7 451h6v6h-6z"/><path fill="#ffde00" d="M1493.7 451h6v6h-6zM1487.7 457h6v6h-6z"/><path fill="#ffbd00" d="M1571.7 451h6v6h-6zM1565.7 457h6v6h-6zM1559.7 463h6v6h-6zM1553.7 469h6v6h-6zM1547.7 475h6v6h-6zM1541.7 481h6v6h-6zM1535.7 487h6v6h-6z"/><path fill="#caff16" d="M1325.7 457h6v6h-6z"/><path fill="#cdff15" d="M1331.7 457h6v6h-6z"/><path fill="#d0ff14" d="M1337.7 457h6v6h-6z"/><path fill="#d3ff14" d="M1343.7 457h6v6h-6z"/><path fill="#d6ff13" d="M1349.7 457h6v6h-6z"/><path fill="#d9ff12" d="M1355.7 457h6v6h-6z"/><path fill="#ddff11" d="M1361.7 457h6v6h-6z"/><path fill="#e0ff11" d="M1367.7 457h6v6h-6z"/><path fill="#e3ff10" d="M1373.7 457h6v6h-6z"/><path fill="#e6ff0f" d="M1379.7 457h6v6h-6z"/><path fill="#eaff0e" d="M1385.7 457h6v6h-6z"/><path fill="#edff0d" d="M1391.7 457h6v6h-6z"/><path fill="#f0ff0d" d="M1397.7 457h6v6h-6z"/><path fill="#f4ff0c" d="M1403.7 457h6v6h-6z"/><path fill="#f7ff0b" d="M1409.7 457h6v6h-6z"/><path fill="#fbff0a" d="M1415.7 457h6v6h-6z"/><path fill="#feff09" d="M1421.7 457h6v6h-6z"/><path fill="#fffc08" d="M1427.7 457h6v6h-6z"/><path fill="#fff908" d="M1433.7 457h6v6h-6z"/><path fill="#fff607" d="M1439.7 457h6v6h-6z"/><path fill="#fff306" d="M1445.7 457h6v6h-6z"/><path fill="#ffef05" d="M1451.7 457h6v6h-6z"/><path fill="#ffec04" d="M1457.7 457h6v6h-6z"/><path fill="#ffe903" d="M1463.7 457h6v6h-6z"/><path fill="#ffe602" d="M1469.7 457h6v6h-6z"/><path fill="#ffe302" d="M1475.7 457h6v6h-6z"/><path fill="#ffe001" d="M1481.7 457h6v6h-6z"/><path fill="#ffd600" d="M1505.7 457h6v6h-6zM1499.7 463h6v6h-6z"/><path fill="#ffbb00" d="M1571.7 457h6v6h-6zM1565.7 463h6v6h-6zM1559.7 469h6v6h-6zM1553.7 475h6v6h-6zM1547.7 481h6v6h-6zM1541.7 487h6v6h-6z"/><path fill="#ccff17" d="M1325.7 463h6v6h-6z"/><path fill="#cfff17" d="M1331.7 463h6v6h-6z"/><path fill="#d2ff16" d="M1337.7 463h6v6h-6z"/><path fill="#d6ff15" d="M1343.7 463h6v6h-6z"/><path fill="#d9ff14" d="M1349.7 463h6v6h-6z"/><path fill="#dcff14" d="M1355.7 463h6v6h-6z"/><path fill="#dfff13" d="M1361.7 463h6v6h-6z"/><path fill="#e3ff12" d="M1367.7 463h6v6h-6z"/><path fill="#e6ff11" d="M1373.7 463h6v6h-6z"/><path fill="#e9ff10" d="M1379.7 463h6v6h-6z"/><path fill="#edff10" d="M1385.7 463h6v6h-6z"/><path fill="#f0ff0f" d="M1391.7 463h6v6h-6z"/><path fill="#f3ff0e" d="M1397.7 463h6v6h-6z"/><path fill="#f7ff0d" d="M1403.7 463h6v6h-6z"/><path fill="#faff0c" d="M1409.7 463h6v6h-6z"/><path fill="#feff0c" d="M1415.7 463h6v6h-6z"/><path fill="#fffd0b" d="M1421.7 463h6v6h-6z"/><path fill="#fff90a" d="M1427.7 463h6v6h-6z"/><path fill="#fff609" d="M1433.7 463h6v6h-6z"/><path fill="#fff308" d="M1439.7 463h6v6h-6z"/><path fill="#fff007" d="M1445.7 463h6v6h-6z"/><path fill="#ffed06" d="M1451.7 463h6v6h-6z"/><path fill="#ffe905" d="M1457.7 463h6v6h-6z"/><path fill="#ffe604" d="M1463.7 463h6v6h-6z"/><path fill="#ffe404" d="M1469.7 463h6v6h-6z"/><path fill="#ffe103" d="M1475.7 463h6v6h-6z"/><path fill="#ffde02" d="M1481.7 463h6v6h-6z"/><path fill="#ffdb01" d="M1487.7 463h6v6h-6z"/><path fill="#ffd801" d="M1493.7 463h6v6h-6z"/><path fill="#ffc600" d="M1535.7 463h6v6h-6zM1529.7 469h6v6h-6zM1523.7 475h6v6h-6z"/><path fill="#ffbf00" d="M1553.7 463h6v6h-6zM1547.7 469h6v6h-6zM1541.7 475h6v6h-6zM1535.7 481h6v6h-6z"/><path fill="#ffb900" d="M1571.7 463h6v6h-6zM1565.7 469h6v6h-6zM1559.7 475h6v6h-6zM1553.7 481h6v6h-6z"/><path fill="#cfff19" d="M1325.7 469h6v6h-6z"/><path fill="#d2ff18" d="M1331.7 469h6v6h-6z"/><path fill="#d5ff17" d="M1337.7 469h6v6h-6z"/><path fill="#d8ff17" d="M1343.7 469h6v6h-6z"/><path fill="#dbff16" d="M1349.7 469h6v6h-6z"/><path fill="#dfff15" d="M1355.7 469h6v6h-6z"/><path fill="#e2ff14" d="M1361.7 469h6v6h-6z"/><path fill="#e5ff14" d="M1367.7 469h6v6h-6z"/><path fill="#e9ff13" d="M1373.7 469h6v6h-6z"/><path fill="#ecff12" d="M1379.7 469h6v6h-6z"/><path fill="#f0ff11" d="M1385.7 469h6v6h-6z"/><path fill="#f3ff10" d="M1391.7 469h6v6h-6z"/><path fill="#f6ff10" d="M1397.7 469h6v6h-6z"/><path fill="#faff0f" d="M1403.7 469h6v6h-6z"/><path fill="#fdff0e" d="M1409.7 469h6v6h-6z"/><path fill="#fffd0d" d="M1415.7 469h6v6h-6z"/><path fill="#fffa0c" d="M1421.7 469h6v6h-6z"/><path fill="#fff60b" d="M1427.7 469h6v6h-6z"/><path fill="#fff30a" d="M1433.7 469h6v6h-6z"/><path fill="#fff009" d="M1439.7 469h6v6h-6z"/><path fill="#ffed08" d="M1445.7 469h6v6h-6z"/><path fill="#ffea07" d="M1451.7 469h6v6h-6z"/><path fill="#ffe707" d="M1457.7 469h6v6h-6z"/><path fill="#ffe406" d="M1463.7 469h6v6h-6z"/><path fill="#ffe105" d="M1469.7 469h6v6h-6z"/><path fill="#ffde04" d="M1475.7 469h6v6h-6z"/><path fill="#ffdb03" d="M1481.7 469h6v6h-6z"/><path fill="#ffd803" d="M1487.7 469h6v6h-6z"/><path fill="#ffd602" d="M1493.7 469h6v6h-6z"/><path fill="#ffd301" d="M1499.7 469h6v6h-6z"/><path fill="#ffb700" d="M1571.7 469h6v6h-6z"/><path fill="#d1ff1b" d="M1325.7 475h6v6h-6z"/><path fill="#d4ff1a" d="M1331.7 475h6v6h-6z"/><path fill="#d8ff19" d="M1337.7 475h6v6h-6z"/><path fill="#dbff18" d="M1343.7 475h6v6h-6z"/><path fill="#deff17" d="M1349.7 475h6v6h-6z"/><path fill="#e2ff17" d="M1355.7 475h6v6h-6z"/><path fill="#e5ff16" d="M1361.7 475h6v6h-6z"/><path fill="#e8ff15" d="M1367.7 475h6v6h-6z"/><path fill="#ecff14" d="M1373.7 475h6v6h-6z"/><path fill="#efff14" d="M1379.7 475h6v6h-6z"/><path fill="#f2ff13" d="M1385.7 475h6v6h-6z"/><path fill="#f6ff12" d="M1391.7 475h6v6h-6z"/><path fill="#f9ff11" d="M1397.7 475h6v6h-6z"/><path fill="#fdff10" d="M1403.7 475h6v6h-6z"/><path fill="#fffe0f" d="M1409.7 475h6v6h-6z"/><path fill="#fffa0e" d="M1415.7 475h6v6h-6z"/><path fill="#fff70d" d="M1421.7 475h6v6h-6z"/><path fill="#fff30c" d="M1427.7 475h6v6h-6z"/><path fill="#fff00c" d="M1433.7 475h6v6h-6z"/><path fill="#ffed0b" d="M1439.7 475h6v6h-6z"/><path fill="#ffea0a" d="M1445.7 475h6v6h-6z"/><path fill="#ffe709" d="M1451.7 475h6v6h-6z"/><path fill="#ffe408" d="M1457.7 475h6v6h-6z"/><path fill="#ffe107" d="M1463.7 475h6v6h-6z"/><path fill="#ffde06" d="M1469.7 475h6v6h-6z"/><path fill="#ffdb05" d="M1475.7 475h6v6h-6z"/><path fill="#ffd805" d="M1481.7 475h6v6h-6z"/><path fill="#ffd604" d="M1487.7 475h6v6h-6z"/><path fill="#ffd303" d="M1493.7 475h6v6h-6z"/><path fill="#ffd002" d="M1499.7 475h6v6h-6z"/><path fill="#ffce01" d="M1505.7 475h6v6h-6z"/><path fill="#ffcb01" d="M1511.7 475h6v6h-6z"/><path fill="#ffb600" d="M1565.7 475h6v6h-6zM1559.7 481h6v6h-6zM1553.7 487h6v6h-6zM1547.7 493h6v6h-6z"/><path fill="#ffb400" d="M1571.7 475h6v6h-6zM1565.7 481h6v6h-6zM1559.7 487h6v6h-6zM1553.7 493h6v6h-6z"/><path fill="#d4ff1c" d="M1325.7 481h6v6h-6z"/><path fill="#d7ff1b" d="M1331.7 481h6v6h-6z"/><path fill="#daff1b" d="M1337.7 481h6v6h-6z"/><path fill="#deff1a" d="M1343.7 481h6v6h-6z"/><path fill="#e1ff19" d="M1349.7 481h6v6h-6z"/><path fill="#e4ff18" d="M1355.7 481h6v6h-6z"/><path fill="#e8ff18" d="M1361.7 481h6v6h-6z"/><path fill="#ebff17" d="M1367.7 481h6v6h-6z"/><path fill="#efff16" d="M1373.7 481h6v6h-6z"/><path fill="#f2ff15" d="M1379.7 481h6v6h-6z"/><path fill="#f5ff14" d="M1385.7 481h6v6h-6z"/><path fill="#f9ff14" d="M1391.7 481h6v6h-6z"/><path fill="#fcff13" d="M1397.7 481h6v6h-6z"/><path fill="#fffe12" d="M1403.7 481h6v6h-6z"/><path fill="#fffa11" d="M1409.7 481h6v6h-6z"/><path fill="#fff710" d="M1415.7 481h6v6h-6z"/><path fill="#fff40f" d="M1421.7 481h6v6h-6z"/><path fill="#fff00e" d="M1427.7 481h6v6h-6z"/><path fill="#ffed0d" d="M1433.7 481h6v6h-6z"/><path fill="#ffea0c" d="M1439.7 481h6v6h-6z"/><path fill="#ffe70b" d="M1445.7 481h6v6h-6z"/><path fill="#ffe40a" d="M1451.7 481h6v6h-6z"/><path fill="#ffe109" d="M1457.7 481h6v6h-6z"/><path fill="#ffde08" d="M1463.7 481h6v6h-6z"/><path fill="#ffdb07" d="M1469.7 481h6v6h-6z"/><path fill="#ffd907" d="M1475.7 481h6v6h-6z"/><path fill="#ffd606" d="M1481.7 481h6v6h-6z"/><path fill="#ffd305" d="M1487.7 481h6v6h-6z"/><path fill="#ffd004" d="M1493.7 481h6v6h-6z"/><path fill="#ffce03" d="M1499.7 481h6v6h-6z"/><path fill="#ffcb03" d="M1505.7 481h6v6h-6z"/><path fill="#ffc902" d="M1511.7 481h6v6h-6z"/><path fill="#ffc601" d="M1517.7 481h6v6h-6z"/><path fill="#ffb200" d="M1571.7 481h6v6h-6zM1565.7 487h6v6h-6zM1559.7 493h6v6h-6zM1553.7 499h6v6h-6z"/><path fill="#d6ff1e" d="M1325.7 487h6v6h-6z"/><path fill="#daff1d" d="M1331.7 487h6v6h-6z"/><path fill="#ddff1c" d="M1337.7 487h6v6h-6z"/><path fill="#e0ff1b" d="M1343.7 487h6v6h-6z"/><path fill="#e4ff1b" d="M1349.7 487h6v6h-6z"/><path fill="#e7ff1a" d="M1355.7 487h6v6h-6z"/><path fill="#ebff19" d="M1361.7 487h6v6h-6z"/><path fill="#eeff18" d="M1367.7 487h6v6h-6z"/><path fill="#f2ff18" d="M1373.7 487h6v6h-6z"/><path fill="#f5ff17" d="M1379.7 487h6v6h-6z"/><path fill="#f9ff16" d="M1385.7 487h6v6h-6z"/><path fill="#fcff15" d="M1391.7 487h6v6h-6z"/><path fill="#fffe14" d="M1397.7 487h6v6h-6z"/><path fill="#fffb13" d="M1403.7 487h6v6h-6z"/><path fill="#fff712" d="M1409.7 487h6v6h-6z"/><path fill="#fff411" d="M1415.7 487h6v6h-6z"/><path fill="#fff110" d="M1421.7 487h6v6h-6z"/><path fill="#ffee0f" d="M1427.7 487h6v6h-6z"/><path fill="#ffea0e" d="M1433.7 487h6v6h-6z"/><path fill="#ffe70d" d="M1439.7 487h6v6h-6z"/><path fill="#ffe40c" d="M1445.7 487h6v6h-6z"/><path fill="#ffe10b" d="M1451.7 487h6v6h-6z"/><path fill="#ffde0a" d="M1457.7 487h6v6h-6z"/><path fill="#ffdb0a" d="M1463.7 487h6v6h-6z"/><path fill="#ffd909" d="M1469.7 487h6v6h-6z"/><path fill="#ffd608" d="M1475.7 487h6v6h-6z"/><path fill="#ffd307" d="M1481.7 487h6v6h-6z"/><path fill="#ffd006" d="M1487.7 487h6v6h-6z"/><path fill="#ffce05" d="M1493.7 487h6v6h-6z"/><path fill="#ffcb05" d="M1499.7 487h6v6h-6z"/><path fill="#ffc904" d="M1505.7 487h6v6h-6z"/><path fill="#ffc603" d="M1511.7 487h6v6h-6z"/><path fill="#ffc402" d="M1517.7 487h6v6h-6z"/><path fill="#ffc202" d="M1523.7 487h6v6h-6z"/><path fill="#ffbf01" d="M1529.7 487h6v6h-6z"/><path fill="#ffb800" d="M1547.7 487h6v6h-6z"/><path fill="#ffb000" d="M1571.7 487h6v6h-6zM1565.7 493h6v6h-6zM1559.7 499h6v6h-6z"/><path fill="#d9ff1f" d="M1325.7 493h6v6h-6z"/><path fill="#dcff1f" d="M1331.7 493h6v6h-6z"/><path fill="#e0ff1e" d="M1337.7 493h6v6h-6z"/><path fill="#e3ff1d" d="M1343.7 493h6v6h-6z"/><path fill="#e7ff1c" d="M1349.7 493h6v6h-6z"/><path fill="#eaff1c" d="M1355.7 493h6v6h-6z"/><path fill="#eeff1b" d="M1361.7 493h6v6h-6z"/><path fill="#f1ff1a" d="M1367.7 493h6v6h-6z"/><path fill="#f5ff19" d="M1373.7 493h6v6h-6z"/><path fill="#f8ff18" d="M1379.7 493h6v6h-6z"/><path fill="#fcff18" d="M1385.7 493h6v6h-6z"/><path fill="#ffff17" d="M1391.7 493h6v6h-6z"/><path fill="#fffb16" d="M1397.7 493h6v6h-6z"/><path fill="#fff815" d="M1403.7 493h6v6h-6z"/><path fill="#fff414" d="M1409.7 493h6v6h-6z"/><path fill="#fff112" d="M1415.7 493h6v6h-6z"/><path fill="#ffee11" d="M1421.7 493h6v6h-6z"/><path fill="#ffeb10" d="M1427.7 493h6v6h-6z"/><path fill="#ffe70f" d="M1433.7 493h6v6h-6z"/><path fill="#ffe40f" d="M1439.7 493h6v6h-6z"/><path fill="#ffe10e" d="M1445.7 493h6v6h-6z"/><path fill="#ffde0d" d="M1451.7 493h6v6h-6z"/><path fill="#ffdc0c" d="M1457.7 493h6v6h-6z"/><path fill="#ffd90b" d="M1463.7 493h6v6h-6z"/><path fill="#ffd60a" d="M1469.7 493h6v6h-6z"/><path fill="#ffd309" d="M1475.7 493h6v6h-6z"/><path fill="#ffd108" d="M1481.7 493h6v6h-6z"/><path fill="#ffce07" d="M1487.7 493h6v6h-6z"/><path fill="#ffcb07" d="M1493.7 493h6v6h-6z"/><path fill="#ffc906" d="M1499.7 493h6v6h-6z"/><path fill="#ffc605" d="M1505.7 493h6v6h-6z"/><path fill="#ffc404" d="M1511.7 493h6v6h-6z"/><path fill="#ffc104" d="M1517.7 493h6v6h-6z"/><path fill="#ffbf03" d="M1523.7 493h6v6h-6z"/><path fill="#ffbd02" d="M1529.7 493h6v6h-6z"/><path fill="#ffba01" d="M1535.7 493h6v6h-6z"/><path fill="#ffb801" d="M1541.7 493h6v6h-6z"/><path fill="#ffae00" d="M1571.7 493h6v6h-6z"/><path fill="#dcff21" d="M1325.7 499h6v6h-6z"/><path fill="#dfff20" d="M1331.7 499h6v6h-6z"/><path fill="#e3ff20" d="M1337.7 499h6v6h-6z"/><path fill="#e6ff1f" d="M1343.7 499h6v6h-6z"/><path fill="#eaff1e" d="M1349.7 499h6v6h-6z"/><path fill="#edff1d" d="M1355.7 499h6v6h-6z"/><path fill="#f1ff1d" d="M1361.7 499h6v6h-6z"/><path fill="#f4ff1c" d="M1367.7 499h6v6h-6z"/><path fill="#f8ff1b" d="M1373.7 499h6v6h-6z"/><path fill="#fbff1a" d="M1379.7 499h6v6h-6z"/><path fill="#ffff19" d="M1385.7 499h6v6h-6z"/><path fill="#fffc18" d="M1391.7 499h6v6h-6z"/><path fill="#fff817" d="M1397.7 499h6v6h-6z"/><path fill="#fff516" d="M1403.7 499h6v6h-6z"/><path fill="#fff115" d="M1409.7 499h6v6h-6z"/><path fill="#ffee14" d="M1415.7 499h6v6h-6z"/><path fill="#ffeb13" d="M1421.7 499h6v6h-6z"/><path fill="#ffe812" d="M1427.7 499h6v6h-6z"/><path fill="#ffe511" d="M1433.7 499h6v6h-6z"/><path fill="#ffe210" d="M1439.7 499h6v6h-6z"/><path fill="#ffdf0f" d="M1445.7 499h6v6h-6z"/><path fill="#ffdc0e" d="M1451.7 499h6v6h-6z"/><path fill="#ffd90d" d="M1457.7 499h6v6h-6z"/><path fill="#ffd60c" d="M1463.7 499h6v6h-6z"/><path fill="#ffd30b" d="M1469.7 499h6v6h-6z"/><path fill="#ffd10a" d="M1475.7 499h6v6h-6z"/><path fill="#ffce09" d="M1481.7 499h6v6h-6z"/><path fill="#ffcb09" d="M1487.7 499h6v6h-6z"/><path fill="#ffc908" d="M1493.7 499h6v6h-6z"/><path fill="#ffc607" d="M1499.7 499h6v6h-6z"/><path fill="#ffc406" d="M1505.7 499h6v6h-6z"/><path fill="#ffc105" d="M1511.7 499h6v6h-6z"/><path fill="#ffbf05" d="M1517.7 499h6v6h-6z"/><path fill="#ffbd04" d="M1523.7 499h6v6h-6z"/><path fill="#ffba03" d="M1529.7 499h6v6h-6z"/><path fill="#ffb802" d="M1535.7 499h6v6h-6z"/><path fill="#ffb602" d="M1541.7 499h6v6h-6z"/><path fill="#ffb401" d="M1547.7 499h6v6h-6z"/><path fill="#ffad00" d="M1565.7 499h6v6h-6z"/><path fill="#ffab00" d="M1571.7 499h6v6h-6zM1565.7 505h6v6h-6z"/><path fill="#dfff23" d="M1325.7 505h6v6h-6z"/><path fill="#e2ff22" d="M1331.7 505h6v6h-6z"/><path fill="#e6ff21" d="M1337.7 505h6v6h-6z"/><path fill="#e9ff21" d="M1343.7 505h6v6h-6z"/><path fill="#edff20" d="M1349.7 505h6v6h-6z"/><path fill="#f0ff1f" d="M1355.7 505h6v6h-6z"/><path fill="#f4ff1e" d="M1361.7 505h6v6h-6z"/><path fill="#f7ff1d" d="M1367.7 505h6v6h-6z"/><path fill="#fbff1d" d="M1373.7 505h6v6h-6z"/><path fill="#feff1c" d="M1379.7 505h6v6h-6z"/><path fill="#fffc1b" d="M1385.7 505h6v6h-6z"/><path fill="#fff81a" d="M1391.7 505h6v6h-6z"/><path fill="#fff518" d="M1397.7 505h6v6h-6z"/><path fill="#fff217" d="M1403.7 505h6v6h-6z"/><path fill="#ffee16" d="M1409.7 505h6v6h-6z"/><path fill="#ffeb15" d="M1415.7 505h6v6h-6z"/><path fill="#ffe814" d="M1421.7 505h6v6h-6z"/><path fill="#ffe513" d="M1427.7 505h6v6h-6z"/><path fill="#ffe212" d="M1433.7 505h6v6h-6z"/><path fill="#ffdf11" d="M1439.7 505h6v6h-6z"/><path fill="#ffdc10" d="M1445.7 505h6v6h-6z"/><path fill="#ffd90f" d="M1451.7 505h6v6h-6z"/><path fill="#ffd60e" d="M1457.7 505h6v6h-6z"/><path fill="#ffd30d" d="M1463.7 505h6v6h-6z"/><path fill="#ffd10c" d="M1469.7 505h6v6h-6z"/><path fill="#ffce0c" d="M1475.7 505h6v6h-6z"/><path fill="#ffcb0b" d="M1481.7 505h6v6h-6z"/><path fill="#ffc90a" d="M1487.7 505h6v6h-6z"/><path fill="#ffc609" d="M1493.7 505h6v6h-6z"/><path fill="#ffc408" d="M1499.7 505h6v6h-6z"/><path fill="#ffc107" d="M1505.7 505h6v6h-6z"/><path fill="#ffbf07" d="M1511.7 505h6v6h-6z"/><path fill="#ffbd06" d="M1517.7 505h6v6h-6z"/><path fill="#ffba05" d="M1523.7 505h6v6h-6z"/><path fill="#ffb804" d="M1529.7 505h6v6h-6z"/><path fill="#ffb604" d="M1535.7 505h6v6h-6z"/><path fill="#ffb403" d="M1541.7 505h6v6h-6z"/><path fill="#ffb102" d="M1547.7 505h6v6h-6z"/><path fill="#ffaf01" d="M1553.7 505h6v6h-6z"/><path fill="#ffad01" d="M1559.7 505h6v6h-6z"/><path fill="#ffa900" d="M1571.7 505h6v6h-6z"/><path fill="#e1ff25" d="M1325.7 511h6v6h-6z"/><path fill="#e5ff24" d="M1331.7 511h6v6h-6z"/><path fill="#e8ff23" d="M1337.7 511h6v6h-6z"/><path fill="#ecff22" d="M1343.7 511h6v6h-6z"/><path fill="#f0ff22" d="M1349.7 511h6v6h-6z"/><path fill="#f3ff21" d="M1355.7 511h6v6h-6z"/><path fill="#f7ff20" d="M1361.7 511h6v6h-6z"/><path fill="#faff1f" d="M1367.7 511h6v6h-6z"/><path fill="#feff1e" d="M1373.7 511h6v6h-6z"/><path fill="#fffc1d" d="M1379.7 511h6v6h-6z"/><path fill="#fff91c" d="M1385.7 511h6v6h-6z"/><path fill="#fff51b" d="M1391.7 511h6v6h-6z"/><path fill="#fff21a" d="M1397.7 511h6v6h-6z"/><path fill="#ffef19" d="M1403.7 511h6v6h-6z"/><path fill="#ffeb18" d="M1409.7 511h6v6h-6z"/><path fill="#ffe816" d="M1415.7 511h6v6h-6z"/><path fill="#ffe515" d="M1421.7 511h6v6h-6z"/><path fill="#ffe214" d="M1427.7 511h6v6h-6z"/><path fill="#ffdf13" d="M1433.7 511h6v6h-6z"/><path fill="#ffdc12" d="M1439.7 511h6v6h-6z"/><path fill="#ffd911" d="M1445.7 511h6v6h-6z"/><path fill="#ffd610" d="M1451.7 511h6v6h-6z"/><path fill="#ffd30f" d="M1457.7 511h6v6h-6z"/><path fill="#ffd10f" d="M1463.7 511h6v6h-6z"/><path fill="#ffce0e" d="M1469.7 511h6v6h-6z"/><path fill="#ffcb0d" d="M1475.7 511h6v6h-6z"/><path fill="#ffc90c" d="M1481.7 511h6v6h-6z"/><path fill="#ffc60b" d="M1487.7 511h6v6h-6z"/><path fill="#ffc40a" d="M1493.7 511h6v6h-6z"/><path fill="#ffc109" d="M1499.7 511h6v6h-6z"/><path fill="#ffbf09" d="M1505.7 511h6v6h-6z"/><path fill="#ffbc08" d="M1511.7 511h6v6h-6z"/><path fill="#ffba07" d="M1517.7 511h6v6h-6z"/><path fill="#ffb806" d="M1523.7 511h6v6h-6z"/><path fill="#ffb605" d="M1529.7 511h6v6h-6z"/><path fill="#ffb305" d="M1535.7 511h6v6h-6z"/><path fill="#ffb104" d="M1541.7 511h6v6h-6z"/><path fill="#ffaf03" d="M1547.7 511h6v6h-6z"/><path fill="#ffad03" d="M1553.7 511h6v6h-6z"/><path fill="#ffab02" d="M1559.7 511h6v6h-6z"/><path fill="#ffa901" d="M1565.7 511h6v6h-6z"/><path fill="#ffa701" d="M1571.7 511h6v6h-6z"/><path fill="#e4ff26" d="M1325.7 517h6v6h-6z"/><path fill="#e8ff26" d="M1331.7 517h6v6h-6z"/><path fill="#ebff25" d="M1337.7 517h6v6h-6z"/><path fill="#efff24" d="M1343.7 517h6v6h-6z"/><path fill="#f3ff23" d="M1349.7 517h6v6h-6z"/><path fill="#f6ff23" d="M1355.7 517h6v6h-6z"/><path fill="#faff22" d="M1361.7 517h6v6h-6z"/><path fill="#feff21" d="M1367.7 517h6v6h-6z"/><path fill="#fffd20" d="M1373.7 517h6v6h-6z"/><path fill="#fff91f" d="M1379.7 517h6v6h-6z"/><path fill="#fff61d" d="M1385.7 517h6v6h-6z"/><path fill="#fff21c" d="M1391.7 517h6v6h-6z"/><path fill="#ffef1b" d="M1397.7 517h6v6h-6z"/><path fill="#ffec1a" d="M1403.7 517h6v6h-6z"/><path fill="#ffe819" d="M1409.7 517h6v6h-6z"/><path fill="#ffe518" d="M1415.7 517h6v6h-6z"/><path fill="#ffe217" d="M1421.7 517h6v6h-6z"/><path fill="#ffdf16" d="M1427.7 517h6v6h-6z"/><path fill="#ffdc15" d="M1433.7 517h6v6h-6z"/><path fill="#ffd914" d="M1439.7 517h6v6h-6z"/><path fill="#ffd613" d="M1445.7 517h6v6h-6z"/><path fill="#ffd312" d="M1451.7 517h6v6h-6z"/><path fill="#ffd111" d="M1457.7 517h6v6h-6z"/><path fill="#ffce10" d="M1463.7 517h6v6h-6z"/><path fill="#ffcb0f" d="M1469.7 517h6v6h-6z"/><path fill="#ffc90e" d="M1475.7 517h6v6h-6z"/><path fill="#ffc60d" d="M1481.7 517h6v6h-6z"/><path fill="#ffc40c" d="M1487.7 517h6v6h-6z"/><path fill="#ffc10b" d="M1493.7 517h6v6h-6z"/><path fill="#ffbf0b" d="M1499.7 517h6v6h-6z"/><path fill="#ffbc0a" d="M1505.7 517h6v6h-6z"/><path fill="#ffba09" d="M1511.7 517h6v6h-6z"/><path fill="#ffb808" d="M1517.7 517h6v6h-6z"/><path fill="#ffb607" d="M1523.7 517h6v6h-6z"/><path fill="#ffb307" d="M1529.7 517h6v6h-6z"/><path fill="#ffb106" d="M1535.7 517h6v6h-6z"/><path fill="#ffaf05" d="M1541.7 517h6v6h-6z"/><path fill="#ffad04" d="M1547.7 517h6v6h-6z"/><path fill="#ffab04" d="M1553.7 517h6v6h-6z"/><path fill="#ffa903" d="M1559.7 517h6v6h-6z"/><path fill="#ffa702" d="M1565.7 517h6v6h-6z"/><path fill="#ffa502" d="M1571.7 517h6v6h-6z"/><path fill="#e7ff28" d="M1325.7 523h6v6h-6z"/><path fill="#ebff28" d="M1331.7 523h6v6h-6z"/><path fill="#efff27" d="M1337.7 523h6v6h-6z"/><path fill="#f2ff26" d="M1343.7 523h6v6h-6z"/><path fill="#f6ff25" d="M1349.7 523h6v6h-6z"/><path fill="#f9ff24" d="M1355.7 523h6v6h-6z"/><path fill="#fdff24" d="M1361.7 523h6v6h-6z"/><path fill="#fffd23" d="M1367.7 523h6v6h-6z"/><path fill="#fffa21" d="M1373.7 523h6v6h-6z"/><path fill="#fff620" d="M1379.7 523h6v6h-6z"/><path fill="#fff21f" d="M1385.7 523h6v6h-6z"/><path fill="#ffef1e" d="M1391.7 523h6v6h-6z"/><path fill="#ffec1c" d="M1397.7 523h6v6h-6z"/><path fill="#ffe81b" d="M1403.7 523h6v6h-6z"/><path fill="#ffe51a" d="M1409.7 523h6v6h-6z"/><path fill="#ffe219" d="M1415.7 523h6v6h-6z"/><path fill="#ffdf18" d="M1421.7 523h6v6h-6z"/><path fill="#ffdc17" d="M1427.7 523h6v6h-6z"/><path fill="#ffd916" d="M1433.7 523h6v6h-6z"/><path fill="#ffd615" d="M1439.7 523h6v6h-6z"/><path fill="#ffd314" d="M1445.7 523h6v6h-6z"/><path fill="#ffd113" d="M1451.7 523h6v6h-6z"/><path fill="#ffce12" d="M1457.7 523h6v6h-6z"/><path fill="#ffcb11" d="M1463.7 523h6v6h-6z"/><path fill="#ffc910" d="M1469.7 523h6v6h-6z"/><path fill="#ffc60f" d="M1475.7 523h6v6h-6z"/><path fill="#ffc40e" d="M1481.7 523h6v6h-6z"/><path fill="#ffc10d" d="M1487.7 523h6v6h-6z"/><path fill="#ffbf0d" d="M1493.7 523h6v6h-6z"/><path fill="#ffbc0c" d="M1499.7 523h6v6h-6z"/><path fill="#ffba0b" d="M1505.7 523h6v6h-6z"/><path fill="#ffb80a" d="M1511.7 523h6v6h-6z"/><path fill="#ffb509" d="M1517.7 523h6v6h-6z"/><path fill="#ffb309" d="M1523.7 523h6v6h-6z"/><path fill="#ffb108" d="M1529.7 523h6v6h-6z"/><path fill="#ffaf07" d="M1535.7 523h6v6h-6z"/><path fill="#ffad06" d="M1541.7 523h6v6h-6z"/><path fill="#ffab06" d="M1547.7 523h6v6h-6z"/><path fill="#ffa905" d="M1553.7 523h6v6h-6z"/><path fill="#ffa704" d="M1559.7 523h6v6h-6z"/><path fill="#ffa503" d="M1565.7 523h6v6h-6z"/><path fill="#ffa303" d="M1571.7 523h6v6h-6z"/></g>
<path d="M1299.7 343.79L1597.8 525L1597.8 467.98L1299.7 266.53Z" fill="#000" fill-opacity="0.36"/></g>
</g>
<rect x="1349.7" y="367" width="198.1" height="135" fill="none" stroke="#a8a8a8" stroke-width="1.4"/>
<rect x="1440.2" y="427.6" width="13" height="13" fill="none" stroke="#f4f4f4" stroke-width="1.6"/>
<circle cx="1453.4" cy="427.4" r="4.2" fill="none" stroke="#111" stroke-width="1.4"/>
<text x="46.2" y="572.9" font-size="27.5" fill="#f2f2f2" stroke="#f2f2f2" stroke-width="0.44" textLength="218.38" lengthAdjust="spacingAndGlyphs">Avg dE2000: 0,73</text>
<text x="40.14" y="610.8" font-size="27.5" fill="#f2f2f2" stroke="#f2f2f2" stroke-width="0.44" textLength="229.49" lengthAdjust="spacingAndGlyphs">Max dE2000: 1,71</text>
<text x="11.89" y="655.5" font-size="26.2" fill="#f2f2f2" stroke="#f2f2f2" stroke-width="0.42" textLength="206.57" lengthAdjust="spacingAndGlyphs">Current Reading</text>
<text x="13.07" y="688.5" font-size="21.5" fill="#f2f2f2" stroke="#f2f2f2" stroke-width="0.34" textLength="95.5" lengthAdjust="spacingAndGlyphs">x: 0,4394</text>
<text x="159" y="688.5" font-size="21.5" fill="#f2f2f2" stroke="#f2f2f2" stroke-width="0.34" textLength="83.82" lengthAdjust="spacingAndGlyphs">y: 0,538</text>
<text x="12.95" y="728.3" font-size="21.5" fill="#f2f2f2" stroke="#f2f2f2" stroke-width="0.34" textLength="77.23" lengthAdjust="spacingAndGlyphs">fL: 41,2</text>
<text x="12.32" y="759.7" font-size="21.5" fill="#f2f2f2" stroke="#f2f2f2" stroke-width="0.34" textLength="149.64" lengthAdjust="spacingAndGlyphs">cd/m²: 141,18</text>
<text x="396.05" y="573.4" font-size="12.6" fill="#dcdcdc" stroke="#dcdcdc" stroke-width="0.2" textLength="79.25" lengthAdjust="spacingAndGlyphs">RGB Balance</text>
<rect x="333.5" y="579.7" width="233.8" height="169.3" fill="#242424"/>
<line x1="333.5" y1="597.4" x2="567.3" y2="597.4" stroke="#8f8f8f" stroke-width="1.2"/>
<line x1="328.5" y1="597.4" x2="333.5" y2="597.4" stroke="#d0d0d0" stroke-width="1.6"/>
<text x="305.09" y="603.2" font-size="12.6" fill="#e6e6e6" stroke="#e6e6e6" stroke-width="0.2" textLength="22.49" lengthAdjust="spacingAndGlyphs">104</text>
<line x1="333.5" y1="631.05" x2="567.3" y2="631.05" stroke="#8f8f8f" stroke-width="1.2"/>
<line x1="328.5" y1="631.05" x2="333.5" y2="631.05" stroke="#d0d0d0" stroke-width="1.6"/>
<text x="305.43" y="636.85" font-size="12.6" fill="#e6e6e6" stroke="#e6e6e6" stroke-width="0.2" textLength="22.49" lengthAdjust="spacingAndGlyphs">102</text>
<line x1="333.5" y1="664.7" x2="567.3" y2="664.7" stroke="#8f8f8f" stroke-width="1.2"/>
<line x1="328.5" y1="664.7" x2="333.5" y2="664.7" stroke="#d0d0d0" stroke-width="1.6"/>
<text x="305.22" y="670.5" font-size="12.6" fill="#e6e6e6" stroke="#e6e6e6" stroke-width="0.2" textLength="22.49" lengthAdjust="spacingAndGlyphs">100</text>
<line x1="333.5" y1="698.35" x2="567.3" y2="698.35" stroke="#8f8f8f" stroke-width="1.2"/>
<line x1="328.5" y1="698.35" x2="333.5" y2="698.35" stroke="#d0d0d0" stroke-width="1.6"/>
<text x="312.77" y="704.15" font-size="12.6" fill="#e6e6e6" stroke="#e6e6e6" stroke-width="0.2" textLength="15" lengthAdjust="spacingAndGlyphs">98</text>
<line x1="333.5" y1="732" x2="567.3" y2="732" stroke="#8f8f8f" stroke-width="1.2"/>
<line x1="328.5" y1="732" x2="333.5" y2="732" stroke="#d0d0d0" stroke-width="1.6"/>
<text x="312.77" y="737.8" font-size="12.6" fill="#e6e6e6" stroke="#e6e6e6" stroke-width="0.2" textLength="15" lengthAdjust="spacingAndGlyphs">96</text>
<rect x="333.5" y="579.7" width="233.8" height="169.3" fill="none" stroke="#8f8f8f" stroke-width="1.3"/>
<rect x="357.5" y="659.8" width="59.6" height="89.2" fill="url(#rb)" stroke="#000" stroke-width="1.2"/>
<rect x="418.7" y="661.2" width="60.6" height="87.8" fill="url(#gb)" stroke="#000" stroke-width="1.2"/>
<rect x="481.5" y="716" width="60.4" height="33" fill="#5a5aff" stroke="#000" stroke-width="1.2"/>
<line x1="333.5" y1="749" x2="567.3" y2="749" stroke="#acacac" stroke-width="1.3"/>
<line x1="333.5" y1="749" x2="333.5" y2="755" stroke="#acacac" stroke-width="1.3"/>
<line x1="567.3" y1="749" x2="567.3" y2="755" stroke="#acacac" stroke-width="1.3"/>
<text x="432.88" y="764.2" font-size="12.6" fill="#dcdcdc" stroke="#dcdcdc" stroke-width="0.2" textLength="34.76" lengthAdjust="spacingAndGlyphs">100%</text>
<rect x="586.3" y="549.9" width="684.7" height="221.7" fill="#000"/>
<rect x="588.3" y="551.4" width="680.7" height="25.4" fill="url(#th)"/>
<text x="801.13" y="569.2" font-size="13.4" font-weight="bold" fill="#f4f4f4" textLength="38.89" lengthAdjust="spacingAndGlyphs">20%</text>
<text x="900.98" y="569.2" font-size="13.4" font-weight="bold" fill="#f4f4f4" textLength="38.89" lengthAdjust="spacingAndGlyphs">40%</text>
<text x="1000.83" y="569.2" font-size="13.4" font-weight="bold" fill="#f4f4f4" textLength="38.89" lengthAdjust="spacingAndGlyphs">60%</text>
<text x="1100.68" y="569.2" font-size="13.4" font-weight="bold" fill="#f4f4f4" textLength="38.89" lengthAdjust="spacingAndGlyphs">80%</text>
<text x="1193.64" y="569.2" font-size="13.4" font-weight="bold" fill="#f4f4f4" textLength="49.7" lengthAdjust="spacingAndGlyphs">100%</text>
<rect x="588.3" y="576.8" width="680.7" height="24.22" fill="#414141"/>
<text x="605.1" y="595.5" font-size="16.2" font-weight="bold" fill="#f4f4f4" textLength="81.19" lengthAdjust="spacingAndGlyphs">x: CIE31</text>
<text x="775.85" y="595.5" font-size="15.6" fill="#f0f0f0" stroke="#f0f0f0" stroke-width="0.25" textLength="64.89" lengthAdjust="spacingAndGlyphs">0,3397</text>
<text x="875.7" y="595.5" font-size="15.6" fill="#f0f0f0" stroke="#f0f0f0" stroke-width="0.25" textLength="64.89" lengthAdjust="spacingAndGlyphs">0,3632</text>
<text x="975.55" y="595.5" font-size="15.6" fill="#f0f0f0" stroke="#f0f0f0" stroke-width="0.25" textLength="64.89" lengthAdjust="spacingAndGlyphs">0,3881</text>
<text x="1075.4" y="595.5" font-size="15.6" fill="#f0f0f0" stroke="#f0f0f0" stroke-width="0.25" textLength="64.89" lengthAdjust="spacingAndGlyphs">0,4143</text>
<text x="1175.25" y="595.5" font-size="15.6" fill="#f0f0f0" stroke="#f0f0f0" stroke-width="0.25" textLength="64.89" lengthAdjust="spacingAndGlyphs">0,4394</text>
<rect x="588.3" y="601.02" width="680.7" height="24.22" fill="#838383"/>
<text x="605.1" y="619.72" font-size="16.2" font-weight="bold" fill="#f4f4f4" textLength="81.19" lengthAdjust="spacingAndGlyphs">y: CIE31</text>
<text x="775.85" y="619.72" font-size="15.6" fill="#f0f0f0" stroke="#f0f0f0" stroke-width="0.25" textLength="64.89" lengthAdjust="spacingAndGlyphs">0,3715</text>
<text x="875.7" y="619.72" font-size="15.6" fill="#f0f0f0" stroke="#f0f0f0" stroke-width="0.25" textLength="64.89" lengthAdjust="spacingAndGlyphs">0,4108</text>
<text x="975.55" y="619.72" font-size="15.6" fill="#f0f0f0" stroke="#f0f0f0" stroke-width="0.25" textLength="64.89" lengthAdjust="spacingAndGlyphs">0,4524</text>
<text x="1075.4" y="619.72" font-size="15.6" fill="#f0f0f0" stroke="#f0f0f0" stroke-width="0.25" textLength="64.89" lengthAdjust="spacingAndGlyphs">0,4962</text>
<text x="1175.25" y="619.72" font-size="15.6" fill="#f0f0f0" stroke="#f0f0f0" stroke-width="0.25" textLength="64.89" lengthAdjust="spacingAndGlyphs">0,5380</text>
<rect x="588.3" y="625.24" width="680.7" height="24.22" fill="#414141"/>
<text x="604.89" y="643.94" font-size="16.2" font-weight="bold" fill="#f4f4f4" textLength="13.72" lengthAdjust="spacingAndGlyphs">Y</text>
<text x="775.11" y="643.94" font-size="15.6" fill="#f0f0f0" stroke="#f0f0f0" stroke-width="0.25" textLength="88.49" lengthAdjust="spacingAndGlyphs">148,8457</text>
<text x="874.96" y="643.94" font-size="15.6" fill="#f0f0f0" stroke="#f0f0f0" stroke-width="0.25" textLength="88.49" lengthAdjust="spacingAndGlyphs">146,4820</text>
<text x="974.81" y="643.94" font-size="15.6" fill="#f0f0f0" stroke="#f0f0f0" stroke-width="0.25" textLength="88.49" lengthAdjust="spacingAndGlyphs">144,4484</text>
<text x="1074.66" y="643.94" font-size="15.6" fill="#f0f0f0" stroke="#f0f0f0" stroke-width="0.25" textLength="88.49" lengthAdjust="spacingAndGlyphs">142,6678</text>
<text x="1174.51" y="643.94" font-size="15.6" fill="#f0f0f0" stroke="#f0f0f0" stroke-width="0.25" textLength="88.49" lengthAdjust="spacingAndGlyphs">141,1788</text>
<rect x="588.3" y="649.46" width="680.7" height="24.22" fill="#838383"/>
<text x="604.99" y="668.16" font-size="16.2" font-weight="bold" fill="#f4f4f4" textLength="142.55" lengthAdjust="spacingAndGlyphs">Target x:CIE31</text>
<text x="775.85" y="668.16" font-size="15.6" fill="#f0f0f0" stroke="#f0f0f0" stroke-width="0.25" textLength="64.89" lengthAdjust="spacingAndGlyphs">0,3384</text>
<text x="875.7" y="668.16" font-size="15.6" fill="#f0f0f0" stroke="#f0f0f0" stroke-width="0.25" textLength="64.89" lengthAdjust="spacingAndGlyphs">0,3619</text>
<text x="975.55" y="668.16" font-size="15.6" fill="#f0f0f0" stroke="#f0f0f0" stroke-width="0.25" textLength="64.89" lengthAdjust="spacingAndGlyphs">0,3869</text>
<text x="1075.4" y="668.16" font-size="15.6" fill="#f0f0f0" stroke="#f0f0f0" stroke-width="0.25" textLength="64.89" lengthAdjust="spacingAndGlyphs">0,4127</text>
<text x="1175.25" y="668.16" font-size="15.6" fill="#f0f0f0" stroke="#f0f0f0" stroke-width="0.25" textLength="64.89" lengthAdjust="spacingAndGlyphs">0,4378</text>
<rect x="588.3" y="673.68" width="680.7" height="24.22" fill="#414141"/>
<text x="604.99" y="692.38" font-size="16.2" font-weight="bold" fill="#f4f4f4" textLength="142.55" lengthAdjust="spacingAndGlyphs">Target y:CIE31</text>
<text x="775.85" y="692.38" font-size="15.6" fill="#f0f0f0" stroke="#f0f0f0" stroke-width="0.25" textLength="64.89" lengthAdjust="spacingAndGlyphs">0,3714</text>
<text x="875.7" y="692.38" font-size="15.6" fill="#f0f0f0" stroke="#f0f0f0" stroke-width="0.25" textLength="64.89" lengthAdjust="spacingAndGlyphs">0,4103</text>
<text x="975.55" y="692.38" font-size="15.6" fill="#f0f0f0" stroke="#f0f0f0" stroke-width="0.25" textLength="64.89" lengthAdjust="spacingAndGlyphs">0,4517</text>
<text x="1075.4" y="692.38" font-size="15.6" fill="#f0f0f0" stroke="#f0f0f0" stroke-width="0.25" textLength="64.89" lengthAdjust="spacingAndGlyphs">0,4944</text>
<text x="1175.25" y="692.38" font-size="15.6" fill="#f0f0f0" stroke="#f0f0f0" stroke-width="0.25" textLength="64.89" lengthAdjust="spacingAndGlyphs">0,5359</text>
<rect x="588.3" y="697.9" width="680.7" height="24.22" fill="#838383"/>
<text x="604.99" y="716.6" font-size="16.2" font-weight="bold" fill="#f4f4f4" textLength="80.42" lengthAdjust="spacingAndGlyphs">Target Y</text>
<text x="775.11" y="716.6" font-size="15.6" fill="#f0f0f0" stroke="#f0f0f0" stroke-width="0.25" textLength="88.49" lengthAdjust="spacingAndGlyphs">148,5134</text>
<text x="874.96" y="716.6" font-size="15.6" fill="#f0f0f0" stroke="#f0f0f0" stroke-width="0.25" textLength="88.49" lengthAdjust="spacingAndGlyphs">145,8556</text>
<text x="974.81" y="716.6" font-size="15.6" fill="#f0f0f0" stroke="#f0f0f0" stroke-width="0.25" textLength="88.49" lengthAdjust="spacingAndGlyphs">143,6070</text>
<text x="1074.66" y="716.6" font-size="15.6" fill="#f0f0f0" stroke="#f0f0f0" stroke-width="0.25" textLength="88.49" lengthAdjust="spacingAndGlyphs">141,7349</text>
<text x="1174.51" y="716.6" font-size="15.6" fill="#f0f0f0" stroke="#f0f0f0" stroke-width="0.25" textLength="88.49" lengthAdjust="spacingAndGlyphs">140,2373</text>
<rect x="588.3" y="722.12" width="680.7" height="24.22" fill="#414141"/>
<text x="604.38" y="740.82" font-size="16.2" font-weight="bold" fill="#f4f4f4" textLength="80" lengthAdjust="spacingAndGlyphs">ΔE 2000</text>
<text x="775.85" y="740.82" font-size="15.6" fill="#f0f0f0" stroke="#f0f0f0" stroke-width="0.25" textLength="64.89" lengthAdjust="spacingAndGlyphs">0,5564</text>
<text x="875.7" y="740.82" font-size="15.6" fill="#f0f0f0" stroke="#f0f0f0" stroke-width="0.25" textLength="64.89" lengthAdjust="spacingAndGlyphs">0,3501</text>
<text x="975.55" y="740.82" font-size="15.6" fill="#f0f0f0" stroke="#f0f0f0" stroke-width="0.25" textLength="64.89" lengthAdjust="spacingAndGlyphs">0,2871</text>
<text x="1075.4" y="740.82" font-size="15.6" fill="#f0f0f0" stroke="#f0f0f0" stroke-width="0.25" textLength="64.89" lengthAdjust="spacingAndGlyphs">0,3818</text>
<text x="1175.25" y="740.82" font-size="15.6" fill="#f0f0f0" stroke="#f0f0f0" stroke-width="0.25" textLength="64.89" lengthAdjust="spacingAndGlyphs">0,5943</text>
<rect x="588.3" y="746.34" width="680.7" height="24.22" fill="#838383"/>
<text x="604.38" y="765.04" font-size="16.2" font-weight="bold" fill="#f4f4f4" textLength="66.23" lengthAdjust="spacingAndGlyphs">ΔE ITP</text>
<text x="775.85" y="765.04" font-size="15.6" fill="#f0f0f0" stroke="#f0f0f0" stroke-width="0.25" textLength="64.89" lengthAdjust="spacingAndGlyphs">0,8080</text>
<text x="875.7" y="765.04" font-size="15.6" fill="#f0f0f0" stroke="#f0f0f0" stroke-width="0.25" textLength="64.89" lengthAdjust="spacingAndGlyphs">0,8076</text>
<text x="975.55" y="765.04" font-size="15.6" fill="#f0f0f0" stroke="#f0f0f0" stroke-width="0.25" textLength="64.89" lengthAdjust="spacingAndGlyphs">0,8658</text>
<text x="1074.66" y="765.04" font-size="15.6" fill="#f0f0f0" stroke="#f0f0f0" stroke-width="0.25" textLength="63.32" lengthAdjust="spacingAndGlyphs">1,6611</text>
<text x="1175.04" y="765.04" font-size="15.6" fill="#f0f0f0" stroke="#f0f0f0" stroke-width="0.25" textLength="64.89" lengthAdjust="spacingAndGlyphs">2,7350</text>
<rect x="0" y="784" width="1557" height="59" fill="url(#tb)"/>
<rect x="0" y="784" width="43.8" height="62" rx="4" fill="url(#btn)"/>
<circle cx="21.5" cy="793.3" r="7" fill="url(#ico)"/>
<path d="M17.3 795.6h8.4l-4.2-4.6z" fill="#222"/>
<rect x="4.4" y="810.2" width="34.8" height="29.8" rx="3" fill="#ffff00" stroke="#c8c800" stroke-width="0.8"/>
<rect x="50.2" y="784" width="149.8" height="62" rx="4" fill="url(#btn)"/>
<rect x="55.4" y="789.4" width="139.8" height="35.8" rx="3.5" fill="#c0c3a0" stroke="#000" stroke-opacity="0.18" stroke-width="1"/>
<text x="113.51" y="840.2" font-size="11.4" fill="#262626">20%</text>
<rect x="202.2" y="784" width="149.8" height="62" rx="4" fill="url(#btn)"/>
<rect x="207.4" y="789.4" width="139.8" height="35.8" rx="3.5" fill="#c2c284" stroke="#000" stroke-opacity="0.18" stroke-width="1"/>
<text x="265.69" y="840.2" font-size="11.4" fill="#262626">40%</text>
<rect x="354.2" y="784" width="149.8" height="62" rx="4" fill="url(#btn)"/>
<rect x="359.4" y="789.4" width="139.8" height="35.8" rx="3.5" fill="#c2c262" stroke="#000" stroke-opacity="0.18" stroke-width="1"/>
<text x="417.51" y="840.2" font-size="11.4" fill="#262626">60%</text>
<rect x="506.2" y="784" width="149.8" height="62" rx="4" fill="url(#btn)"/>
<rect x="511.4" y="789.4" width="139.8" height="35.8" rx="3.5" fill="#c3c245" stroke="#000" stroke-opacity="0.18" stroke-width="1"/>
<text x="569.57" y="840.2" font-size="11.4" fill="#262626">80%</text>
<rect x="658.2" y="784" width="149.8" height="62" rx="4" fill="url(#btnact)"/>
<rect x="663.4" y="789.4" width="139.8" height="35.8" rx="3.5" fill="#c2c000" stroke="#000" stroke-opacity="0.18" stroke-width="1"/>
<text x="717.69" y="840.2" font-size="11.8" font-weight="bold" fill="#ffffff">100%</text>
<rect x="1240.9" y="784.3" width="47.9" height="62" rx="4" fill="url(#btn2)"/>
<line x1="1240.9" y1="802.2" x2="1288.8" y2="802.2" stroke="#3a3a3a" stroke-width="1"/>
<circle cx="1265.7" cy="792.8" r="6.6" fill="url(#ico)"/>
<path d="M1261.5 795.2h8.4l-4.2-4.6z" fill="#222"/>
<rect x="1250.2" y="809.2" width="29.4" height="30" rx="3" fill="url(#stopfill)" stroke="#262626" stroke-width="2.2"/>
<rect x="1258.1" y="817.4" width="13.6" height="13.6" fill="url(#stopsq)"/>
<rect x="1290.3" y="784.3" width="280" height="29.8" rx="3" fill="url(#btn3)"/>
<line x1="1336.7" y1="784.3" x2="1336.7" y2="814.1" stroke="#2a2a2a" stroke-width="1.2"/>
<line x1="1381.6" y1="784.3" x2="1381.6" y2="814.1" stroke="#2a2a2a" stroke-width="1.2"/>
<line x1="1426.4" y1="784.3" x2="1426.4" y2="814.1" stroke="#2a2a2a" stroke-width="1.2"/>
<line x1="1471.5" y1="784.3" x2="1471.5" y2="814.1" stroke="#2a2a2a" stroke-width="1.2"/>
<line x1="1516.7" y1="784.3" x2="1516.7" y2="814.1" stroke="#2a2a2a" stroke-width="1.2"/>
<line x1="1290.3" y1="814.6" x2="1557" y2="814.6" stroke="#2a2a2a" stroke-width="1.2"/>
<circle cx="1313.5" cy="798.8" r="9.8" fill="url(#ico)"/>
<circle cx="1359.15" cy="798.8" r="9.8" fill="url(#ico)"/>
<circle cx="1404" cy="798.8" r="9.8" fill="url(#ico)"/>
<circle cx="1448.95" cy="798.8" r="9.8" fill="url(#ico)"/>
<circle cx="1494.1" cy="798.8" r="9.8" fill="url(#ico)"/>
<circle cx="1539.8" cy="798.8" r="9.8" fill="url(#ico)"/>
<rect x="1309" y="794.8" width="8" height="8" fill="#262626"/>
<path d="M1355.6 793.6v10.6l8.6-5.3z" fill="#262626"/>
<path d="M1398.6 794.4h-1.6v9.6h1.6M1408.4 794.4h1.6v9.6h-1.6" fill="none" stroke="#262626" stroke-width="1.8"/><rect x="1401.6" y="798.6" width="1.6" height="1.6" fill="#262626"/><rect x="1404.2" y="798.6" width="1.6" height="1.6" fill="#262626"/>
<path d="M1448.4 798.8c-2.2-2.8-6.2-2.8-6.2 0s4 2.8 6.2 0 6.2-2.8 6.2 0-4 2.8-6.2 0z" fill="none" stroke="#262626" stroke-width="1.8"/>
<path d="M1488.8 799.6a4.9 4.9 0 0 1 8.6-3.8M1498.4 798a4.9 4.9 0 0 1-8.6 3.8" fill="none" stroke="#262626" stroke-width="2"/><path d="M1499.3 793.2v4.2h-4.2zM1487.9 804.4v-4.2h4.2z" fill="#262626"/>
<rect x="1290.9" y="815.2" width="134.9" height="40" rx="3" fill="url(#btn2)"/>
<rect x="1427" y="815.2" width="140" height="40" rx="3" fill="url(#btn2)"/>
<circle cx="1320.7" cy="829.9" r="9.4" fill="url(#ico)"/>
<circle cx="1534" cy="829.9" r="9.4" fill="url(#ico)"/>
<path d="M1320.2 825.6l-4 4.3 4 4.3M1324.6 825.6l-4 4.3 4 4.3" fill="none" stroke="#262626" stroke-width="1.5"/>
<path d="M1531.6 825.6l4 4.3-4 4.3M1536 825.6l4 4.3-4 4.3" fill="none" stroke="#262626" stroke-width="1.5"/>
<text x="1345.72" y="838.3" font-size="22.5" fill="#2e2e2e" textLength="52.24" lengthAdjust="spacingAndGlyphs" stroke="#2e2e2e" stroke-width="0.5">Back</text>
<text x="1452.22" y="838.3" font-size="22.5" fill="#2e2e2e" textLength="53.54" lengthAdjust="spacingAndGlyphs" stroke="#2e2e2e" stroke-width="0.5">Next</text></svg></body></html>
